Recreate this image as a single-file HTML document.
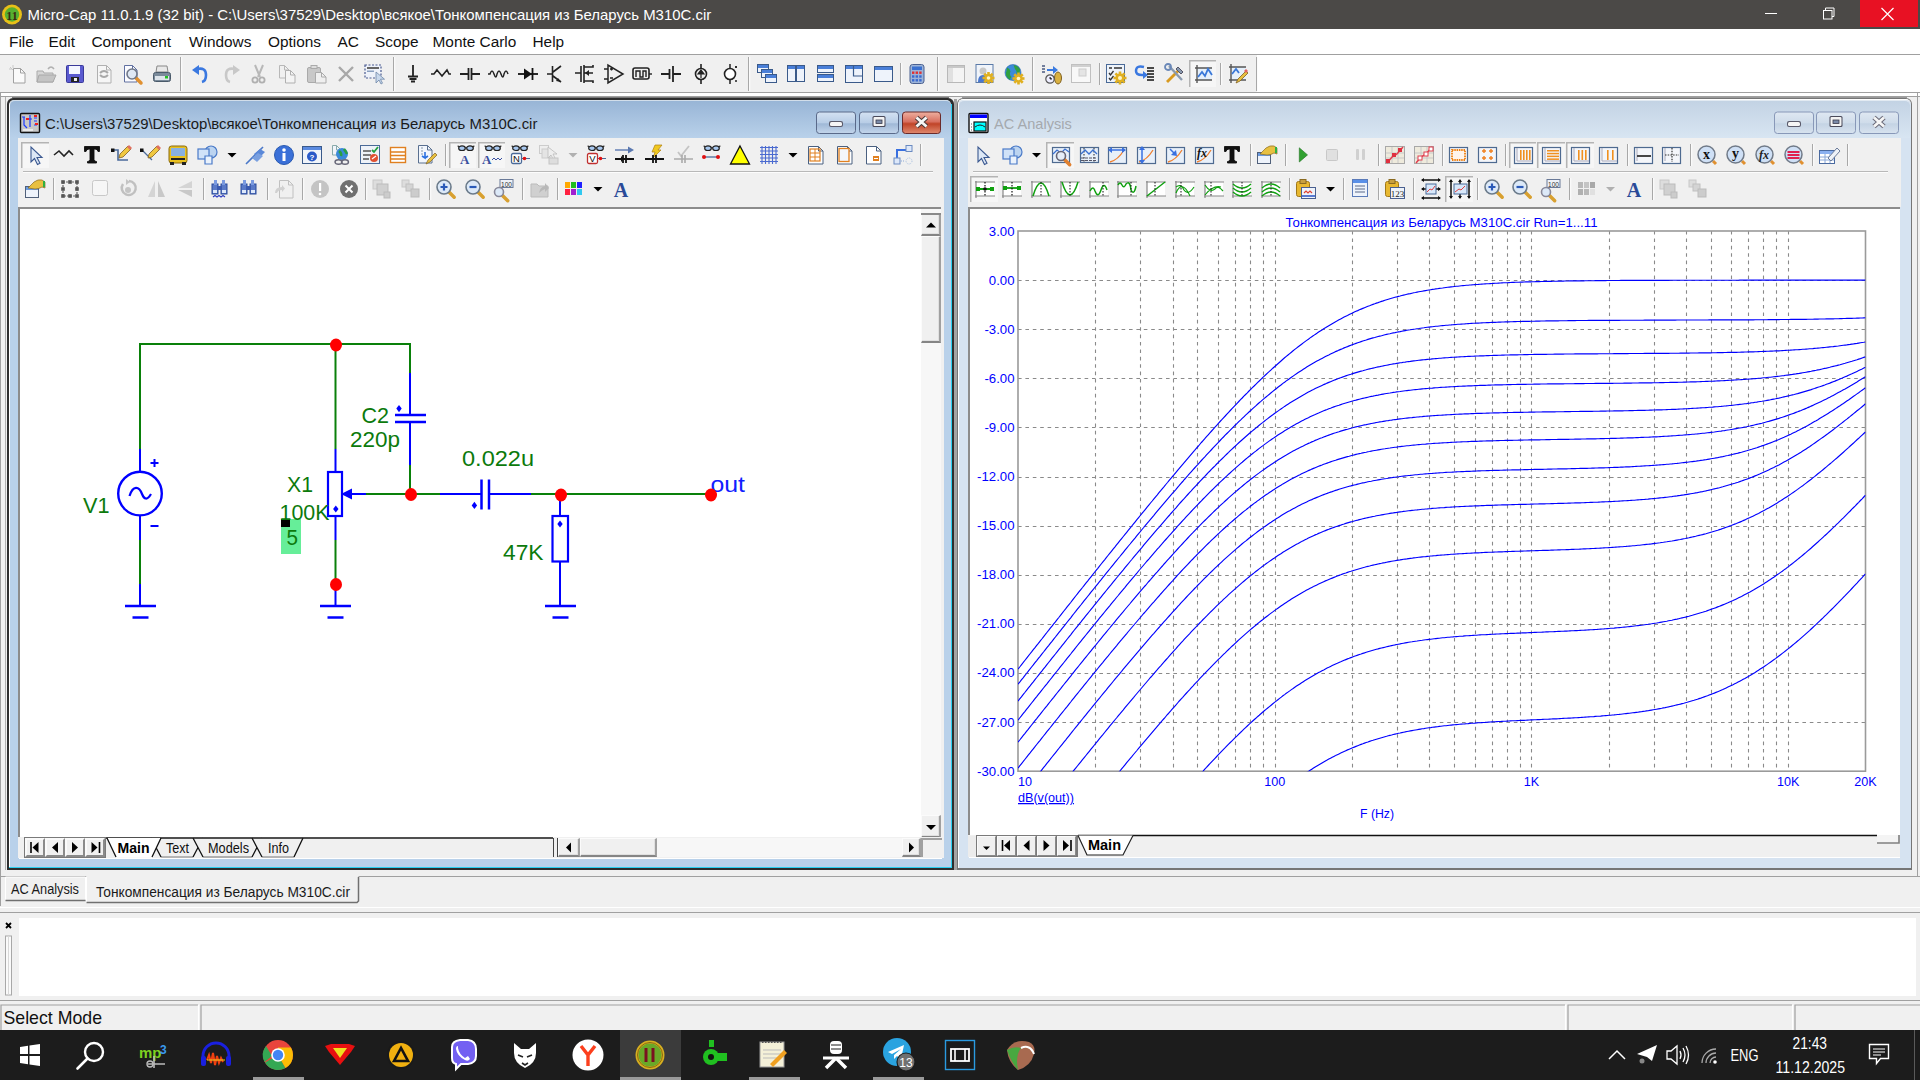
<!DOCTYPE html><html><head><meta charset='utf-8'><style>
*{margin:0;padding:0;box-sizing:border-box}
html,body{width:1920px;height:1080px;overflow:hidden;background:#f0f0f0;font-family:"Liberation Sans",sans-serif}
.a{position:absolute}
.t{position:absolute;white-space:nowrap;line-height:1}
svg{position:absolute;left:0;top:0;overflow:visible}
</style></head><body><div class="a" style="left:0px;top:0px;width:1920px;height:29px;background:#4b4947"></div><div class="t" style="left:27.5px;top:8px;font-size:14.95px;color:#fff;">Micro-Cap 11.0.1.9 (32 bit) - C:\Users\37529\Desktop\всякое\Тонкомпенсация из Беларусь M310C.cir</div><div class="a" style="left:1860px;top:0px;width:58px;height:27px;background:#e81123"></div><div class="a" style="left:0px;top:29px;width:1920px;height:25px;background:#fff"></div><div class="a" style="left:0px;top:54px;width:1920px;height:1px;background:#a0a0a0"></div><div class="t" style="left:9px;top:34.2px;font-size:15.4px;color:#111;">File</div><div class="t" style="left:48.5px;top:34.2px;font-size:15.4px;color:#111;">Edit</div><div class="t" style="left:91.5px;top:34.2px;font-size:15.4px;color:#111;">Component</div><div class="t" style="left:189px;top:34.2px;font-size:15.4px;color:#111;">Windows</div><div class="t" style="left:268px;top:34.2px;font-size:15.4px;color:#111;">Options</div><div class="t" style="left:337.5px;top:34.2px;font-size:15.4px;color:#111;">AC</div><div class="t" style="left:375px;top:34.2px;font-size:15.4px;color:#111;">Scope</div><div class="t" style="left:432.5px;top:34.2px;font-size:15.4px;color:#111;">Monte Carlo</div><div class="t" style="left:532.5px;top:34.2px;font-size:15.4px;color:#111;">Help</div><div class="a" style="left:0px;top:55px;width:1257px;height:37px;background:#f0f0f0"></div><div class="a" style="left:1257px;top:55px;width:663px;height:37px;background:#fff"></div><div class="a" style="left:0px;top:92px;width:1920px;height:1px;background:#a0a0a0"></div><div class="a" style="left:0px;top:93px;width:1920px;height:3px;background:#fff"></div><div class="a" style="left:0px;top:96px;width:1920px;height:1px;background:#a0a0a0"></div><div class="a" style="left:954px;top:99px;width:3px;height:771px;background:#a4a4a4"></div><div class="a" style="left:7px;top:98px;width:947px;height:772px;background:#2e2e2e;border-radius:6px 6px 0 0"></div><div class="a" style="left:9px;top:100px;width:942px;height:767px;background:#b9d1ea;border-radius:5px 5px 0 0;border-left:1px solid #fff"></div><div class="a" style="left:951px;top:104px;width:1px;height:764px;background:#2ad0f0"></div><div class="a" style="left:9px;top:867px;width:943px;height:1px;background:#2ad0f0"></div><div class="a" style="left:10px;top:100px;width:941px;height:38px;background:linear-gradient(#98b5d6,#b9d1ea);border-radius:5px 5px 0 0;border-top:1.5px solid #d2deea"></div><div class="a" style="left:12px;top:97px;width:937px;height:1px;background:#7a7a7a"></div><div class="t" style="left:45px;top:116.5px;font-size:14.9px;color:#1b1b1b;">C:\Users\37529\Desktop\всякое\Тонкомпенсация из Беларусь M310C.cir</div><div class="a" style="left:18px;top:138px;width:924px;height:69px;background:#f0f0f0"></div><div class="a" style="left:23px;top:171px;width:910px;height:1px;background:#b8b8b8"></div><div class="a" style="left:23px;top:172px;width:910px;height:1px;background:#fcfcfc"></div><div class="a" style="left:18px;top:207px;width:924px;height:631px;background:#fff;border-top:2px solid #8c8c8c;border-left:2px solid #8c8c8c"></div><div class="a" style="left:921px;top:209px;width:21px;height:629px;background:#f7f7f7"></div><div class="a" style="left:941px;top:138px;width:3px;height:720px;background:#f0f0f0"></div><div class="a" style="left:921px;top:213px;width:20px;height:23px;background:#f0f0f0;border-top:1px solid #fbfbfb;border-left:1px solid #fbfbfb;border-right:2px solid #a0a0a0;border-bottom:2px solid #858585;box-shadow:inset -1px -1px 0 #e0e0e0"></div><div class="a" style="left:921px;top:213px;width:20px;height:2px;background:#8a8a8a"></div><div class="a" style="left:921px;top:236px;width:20px;height:107px;background:#f0f0f0;border-top:1px solid #fbfbfb;border-left:1px solid #fbfbfb;border-right:2px solid #a0a0a0;border-bottom:2px solid #858585;box-shadow:inset -1px -1px 0 #e0e0e0"></div><div class="a" style="left:921px;top:815px;width:20px;height:23px;background:#f0f0f0;border-top:1px solid #fbfbfb;border-left:1px solid #fbfbfb;border-right:2px solid #a0a0a0;border-bottom:2px solid #858585;box-shadow:inset -1px -1px 0 #e0e0e0"></div><div class="a" style="left:18px;top:837px;width:924px;height:21px;background:#f0f0f0"></div><div class="a" style="left:19px;top:858px;width:923px;height:1px;background:#fff"></div><div class="a" style="left:24px;top:837px;width:82px;height:21px;background:#7a7a7a"></div><div class="a" style="left:25px;top:838px;width:20px;height:19px;background:#f0f0f0;border:2px solid #8a8a8a;border-top-color:#fafafa;border-left-color:#fafafa"></div><div class="a" style="left:45px;top:838px;width:20px;height:19px;background:#f0f0f0;border:2px solid #8a8a8a;border-top-color:#fafafa;border-left-color:#fafafa"></div><div class="a" style="left:65px;top:838px;width:20px;height:19px;background:#f0f0f0;border:2px solid #8a8a8a;border-top-color:#fafafa;border-left-color:#fafafa"></div><div class="a" style="left:85px;top:838px;width:20px;height:19px;background:#f0f0f0;border:2px solid #8a8a8a;border-top-color:#fafafa;border-left-color:#fafafa"></div><div class="a" style="left:553px;top:838px;width:5px;height:19px;background:#f0f0f0;border-left:1px solid #444;border-right:1px solid #444"></div><div class="a" style="left:558px;top:838px;width:22px;height:19px;background:#f0f0f0;border-top:1px solid #fbfbfb;border-left:1px solid #fbfbfb;border-right:2px solid #a0a0a0;border-bottom:2px solid #858585;box-shadow:inset -1px -1px 0 #e0e0e0"></div><div class="a" style="left:580px;top:838px;width:77px;height:19px;background:#f0f0f0;border-top:1px solid #fbfbfb;border-left:1px solid #fbfbfb;border-right:2px solid #a0a0a0;border-bottom:2px solid #858585;box-shadow:inset -1px -1px 0 #e0e0e0"></div><div class="a" style="left:657px;top:838px;width:245px;height:19px;background:#f7f7f7"></div><div class="a" style="left:902px;top:838px;width:19px;height:19px;background:#f0f0f0;border-top:1px solid #fbfbfb;border-left:1px solid #fbfbfb;border-right:2px solid #a0a0a0;border-bottom:2px solid #858585;box-shadow:inset -1px -1px 0 #e0e0e0"></div><div class="a" style="left:921px;top:838px;width:21px;height:19px;background:#f0f0f0;border-top:2px solid #a0a0a0;border-left:2px solid #a0a0a0"></div><div class="a" style="left:957px;top:98px;width:955px;height:772px;background:#767676;border-radius:6px 6px 0 0"></div><div class="a" style="left:958px;top:99px;width:953px;height:769px;background:#d6e3f1;border-radius:5px 5px 0 0;border-top:1px solid #fff;border-left:1px solid #fff"></div><div class="a" style="left:959px;top:100px;width:951px;height:38px;background:linear-gradient(#c3d3e4,#d8e5f2);border-radius:5px 5px 0 0;border-top:1.5px solid #e2eaf2"></div><div class="a" style="left:962px;top:97px;width:945px;height:1px;background:#9a9a9a"></div><div class="t" style="left:994px;top:116.5px;font-size:14.6px;color:#a5a9ae;">AC Analysis</div><div class="a" style="left:968px;top:138px;width:933px;height:69px;background:#f0f0f0"></div><div class="a" style="left:973px;top:171px;width:915px;height:1px;background:#b8b8b8"></div><div class="a" style="left:973px;top:172px;width:915px;height:1px;background:#fcfcfc"></div><div class="a" style="left:968px;top:207px;width:932px;height:629px;background:#fff;border-top:2px solid #8c8c8c;border-left:2px solid #8c8c8c"></div><div class="a" style="left:968px;top:835px;width:932px;height:22px;background:#f0f0f0"></div><div class="a" style="left:976px;top:835px;width:102px;height:22px;background:#7a7a7a"></div><div class="a" style="left:977px;top:836px;width:19px;height:20px;background:#f0f0f0;border:1.5px solid #8a8a8a;border-top-color:#fafafa;border-left-color:#fafafa"></div><div class="a" style="left:997px;top:836px;width:19px;height:20px;background:#f0f0f0;border:1.5px solid #8a8a8a;border-top-color:#fafafa;border-left-color:#fafafa"></div><div class="a" style="left:1017px;top:836px;width:19px;height:20px;background:#f0f0f0;border:1.5px solid #8a8a8a;border-top-color:#fafafa;border-left-color:#fafafa"></div><div class="a" style="left:1037px;top:836px;width:19px;height:20px;background:#f0f0f0;border:1.5px solid #8a8a8a;border-top-color:#fafafa;border-left-color:#fafafa"></div><div class="a" style="left:1057px;top:836px;width:19px;height:20px;background:#f0f0f0;border:1.5px solid #8a8a8a;border-top-color:#fafafa;border-left-color:#fafafa"></div><div class="a" style="left:969px;top:857px;width:931px;height:1px;background:#fff"></div><div class="a" style="left:0px;top:876px;width:1920px;height:1px;background:#a0a0a0"></div><div class="a" style="left:0px;top:912px;width:1920px;height:1px;background:#a0a0a0"></div><div class="a" style="left:0px;top:913px;width:1920px;height:5px;background:#f0f0f0"></div><div class="a" style="left:19px;top:918px;width:1897px;height:78px;background:#fff"></div><div class="a" style="left:0px;top:1000px;width:1920px;height:1px;background:#a0a0a0"></div><div class="a" style="left:0px;top:1030px;width:1920px;height:50px;background:#1c1c1c"></div><svg width="1920" height="1080" style="font-family:'Liberation Sans',sans-serif"><line x1="139" y1="344" x2="411" y2="344" stroke="#0a800a" stroke-width="2"/><line x1="140" y1="343" x2="140" y2="449" stroke="#0a800a" stroke-width="2"/><line x1="140" y1="449" x2="140" y2="472" stroke="#0000ff" stroke-width="2"/><circle cx="140" cy="493.6" r="21.8" fill="none" stroke="#0000ff" stroke-width="2.4"/><path d="M129.5 496 C133 485 139 486 142 494 C144 499 147 501 151 494" fill="none" stroke="#0000ff" stroke-width="2.2"/><line x1="140" y1="515" x2="140" y2="540" stroke="#0000ff" stroke-width="2"/><line x1="140" y1="540" x2="140" y2="584" stroke="#0a800a" stroke-width="2"/><line x1="140" y1="584" x2="140" y2="606" stroke="#0000ff" stroke-width="2"/><line x1="125" y1="606" x2="156" y2="606" stroke="#0000ff" stroke-width="2.5"/><line x1="132.5" y1="617.5" x2="148.5" y2="617.5" stroke="#0000ff" stroke-width="2.5"/><line x1="150.5" y1="463" x2="158.5" y2="463" stroke="#0000ff" stroke-width="2"/><line x1="154.5" y1="459" x2="154.5" y2="467" stroke="#0000ff" stroke-width="2"/><line x1="150.5" y1="526" x2="158.5" y2="526" stroke="#0000ff" stroke-width="2"/><text x="83" y="512.5" font-size="22" fill="#0c7a0c" textLength="26.5" lengthAdjust="spacingAndGlyphs">V1</text><line x1="335.5" y1="344" x2="335.5" y2="449" stroke="#0a800a" stroke-width="2"/><line x1="335.5" y1="449" x2="335.5" y2="471" stroke="#0000ff" stroke-width="2"/><rect x="328" y="472" width="14" height="44" fill="none" stroke="#0000ff" stroke-width="2.2"/><line x1="335.5" y1="517" x2="335.5" y2="540" stroke="#0000ff" stroke-width="2"/><line x1="335.5" y1="540" x2="335.5" y2="584" stroke="#0a800a" stroke-width="2"/><line x1="335.5" y1="584" x2="335.5" y2="606" stroke="#0000ff" stroke-width="2"/><line x1="320" y1="606" x2="351" y2="606" stroke="#0000ff" stroke-width="2.5"/><line x1="327.5" y1="617.5" x2="343.5" y2="617.5" stroke="#0000ff" stroke-width="2.5"/><path d="M341 494 L352 488.5 L352 499.5 Z" fill="#0000ff"/><line x1="350" y1="494" x2="366" y2="494" stroke="#0000ff" stroke-width="2"/><line x1="366" y1="494" x2="411" y2="494" stroke="#0a800a" stroke-width="2"/><path d="M335.8 505.5 L338.5 509 L335.8 512.5 L333.1 509 Z" fill="#0000ff"/><line x1="410" y1="344" x2="410" y2="373" stroke="#0a800a" stroke-width="2"/><line x1="410" y1="373" x2="410" y2="415" stroke="#0000ff" stroke-width="2"/><line x1="395" y1="415" x2="426" y2="415" stroke="#0000ff" stroke-width="2.5"/><line x1="395" y1="422" x2="426" y2="422" stroke="#0000ff" stroke-width="2.5"/><line x1="410" y1="422" x2="410" y2="465" stroke="#0000ff" stroke-width="2"/><line x1="410" y1="465" x2="410" y2="494" stroke="#0a800a" stroke-width="2"/><path d="M399 405 L401.7 408.6 L399 412.2 L396.3 408.6 Z" fill="#0000ff"/><text x="361.5" y="422.5" font-size="21.5" fill="#0c7a0c" textLength="27.5" lengthAdjust="spacingAndGlyphs">C2</text><text x="350" y="447" font-size="21.5" fill="#0c7a0c" textLength="50" lengthAdjust="spacingAndGlyphs">220p</text><text x="287" y="492" font-size="21.5" fill="#0c7a0c" textLength="26" lengthAdjust="spacingAndGlyphs">X1</text><rect x="281" y="519" width="20" height="35" fill="#66ee99"/><rect x="281" y="519" width="9" height="8" fill="#000"/><text x="279.5" y="519.5" font-size="21.5" fill="#0c7a0c" textLength="50" lengthAdjust="spacingAndGlyphs">100K</text><text x="286.5" y="544.5" font-size="21.5" fill="#0c7a0c" textLength="11.5" lengthAdjust="spacingAndGlyphs">5</text><line x1="411" y1="494" x2="440" y2="494" stroke="#0a800a" stroke-width="2"/><line x1="440" y1="494" x2="481" y2="494" stroke="#0000ff" stroke-width="2"/><line x1="481.5" y1="479.5" x2="481.5" y2="509.5" stroke="#0000ff" stroke-width="2.5"/><line x1="489" y1="479.5" x2="489" y2="509.5" stroke="#0000ff" stroke-width="2.5"/><line x1="489" y1="494" x2="531" y2="494" stroke="#0000ff" stroke-width="2"/><line x1="531" y1="494" x2="711" y2="494" stroke="#0a800a" stroke-width="2"/><path d="M474.4 501.8 L477.1 505.4 L474.4 509 L471.7 505.4 Z" fill="#0000ff"/><text x="462" y="466" font-size="21.5" fill="#0c7a0c" textLength="72" lengthAdjust="spacingAndGlyphs">0.022u</text><line x1="560" y1="495" x2="560" y2="516" stroke="#0000ff" stroke-width="2"/><rect x="552.5" y="516" width="15.5" height="45.5" fill="none" stroke="#0000ff" stroke-width="2.2"/><line x1="560" y1="562" x2="560" y2="606" stroke="#0000ff" stroke-width="2"/><line x1="545" y1="606" x2="576" y2="606" stroke="#0000ff" stroke-width="2.5"/><line x1="552.5" y1="617.5" x2="568.5" y2="617.5" stroke="#0000ff" stroke-width="2.5"/><path d="M560 520.4 L562.7 524 L560 527.6 L557.3 524 Z" fill="#0000ff"/><text x="503" y="560" font-size="21.5" fill="#0c7a0c" textLength="40.5" lengthAdjust="spacingAndGlyphs">47K</text><text x="710.5" y="492" font-size="21.5" fill="#1020ff" textLength="34.5" lengthAdjust="spacingAndGlyphs">out</text><ellipse cx="336" cy="345" rx="6" ry="6.4" fill="#ff0000"/><ellipse cx="411" cy="494.5" rx="6" ry="6.4" fill="#ff0000"/><ellipse cx="561" cy="495" rx="6" ry="6.4" fill="#ff0000"/><ellipse cx="711" cy="495" rx="6" ry="6.4" fill="#ff0000"/><ellipse cx="336" cy="584.5" rx="6" ry="6.4" fill="#ff0000"/><defs><clipPath id="pc"><rect x="1018.0" y="231.0" width="847.5" height="540.2"/></clipPath></defs><path d="M1018.0 280.5H1865.5M1018.0 329.5H1865.5M1018.0 378.5H1865.5M1018.0 427.5H1865.5M1018.0 477.5H1865.5M1018.0 526.5H1865.5M1018.0 575.5H1865.5M1018.0 624.5H1865.5M1018.0 673.5H1865.5M1018.0 722.5H1865.5M1095.5 231.0V771.2M1140.5 231.0V771.2M1173.5 231.0V771.2M1197.5 231.0V771.2M1218.5 231.0V771.2M1235.5 231.0V771.2M1250.5 231.0V771.2M1263.5 231.0V771.2M1275.5 231.0V771.2M1352.5 231.0V771.2M1397.5 231.0V771.2M1429.5 231.0V771.2M1454.5 231.0V771.2M1475.5 231.0V771.2M1492.5 231.0V771.2M1507.5 231.0V771.2M1520.5 231.0V771.2M1531.5 231.0V771.2M1609.5 231.0V771.2M1654.5 231.0V771.2M1686.5 231.0V771.2M1711.5 231.0V771.2M1731.5 231.0V771.2M1748.5 231.0V771.2M1763.5 231.0V771.2M1776.5 231.0V771.2M1788.5 231.0V771.2" stroke="#8a8a8a" stroke-width="1.1" stroke-dasharray="3.6 3.8" fill="none"/><rect x="1018.0" y="231.0" width="847.5" height="540.2" fill="none" stroke="#9a9a9a" stroke-width="1.6"/><g clip-path="url(#pc)" fill="none" stroke="#0000ff" stroke-width="1.15"><path d="M1018.0 669.1 L1019.7 667.0 L1021.4 664.8 L1023.1 662.7 L1024.8 660.5 L1026.5 658.3 L1028.2 656.2 L1029.9 654.0 L1031.6 651.9 L1033.3 649.7 L1035.0 647.6 L1036.7 645.4 L1038.4 643.3 L1040.1 641.1 L1041.8 639.0 L1043.5 636.8 L1045.2 634.7 L1046.9 632.5 L1048.6 630.4 L1050.3 628.2 L1052.0 626.1 L1053.7 623.9 L1055.4 621.8 L1057.1 619.6 L1058.8 617.5 L1060.5 615.3 L1062.2 613.2 L1063.9 611.0 L1065.6 608.9 L1067.3 606.7 L1069.0 604.6 L1070.7 602.5 L1072.3 600.3 L1074.0 598.2 L1075.7 596.0 L1077.4 593.9 L1079.1 591.7 L1080.8 589.6 L1082.5 587.5 L1084.2 585.3 L1085.9 583.2 L1087.6 581.1 L1089.3 578.9 L1091.0 576.8 L1092.7 574.7 L1094.4 572.5 L1096.1 570.4 L1097.8 568.3 L1099.5 566.1 L1101.2 564.0 L1102.9 561.9 L1104.6 559.8 L1106.3 557.6 L1108.0 555.5 L1109.7 553.4 L1111.4 551.3 L1113.1 549.2 L1114.8 547.1 L1116.5 544.9 L1118.2 542.8 L1119.9 540.7 L1121.6 538.6 L1123.3 536.5 L1125.0 534.4 L1126.7 532.3 L1128.4 530.2 L1130.1 528.1 L1131.8 526.0 L1133.5 523.9 L1135.2 521.8 L1136.9 519.7 L1138.6 517.6 L1140.3 515.5 L1142.0 513.4 L1143.7 511.4 L1145.4 509.3 L1147.1 507.2 L1148.8 505.1 L1150.5 503.0 L1152.2 501.0 L1153.9 498.9 L1155.6 496.8 L1157.3 494.8 L1159.0 492.7 L1160.7 490.7 L1162.4 488.6 L1164.1 486.6 L1165.8 484.5 L1167.5 482.5 L1169.2 480.4 L1170.9 478.4 L1172.6 476.4 L1174.3 474.4 L1176.0 472.3 L1177.6 470.3 L1179.3 468.3 L1181.0 466.3 L1182.7 464.3 L1184.4 462.3 L1186.1 460.3 L1187.8 458.3 L1189.5 456.3 L1191.2 454.3 L1192.9 452.3 L1194.6 450.4 L1196.3 448.4 L1198.0 446.5 L1199.7 444.5 L1201.4 442.5 L1203.1 440.6 L1204.8 438.7 L1206.5 436.7 L1208.2 434.8 L1209.9 432.9 L1211.6 431.0 L1213.3 429.1 L1215.0 427.2 L1216.7 425.3 L1218.4 423.4 L1220.1 421.5 L1221.8 419.7 L1223.5 417.8 L1225.2 416.0 L1226.9 414.1 L1228.6 412.3 L1230.3 410.5 L1232.0 408.7 L1233.7 406.9 L1235.4 405.1 L1237.1 403.3 L1238.8 401.5 L1240.5 399.7 L1242.2 398.0 L1243.9 396.2 L1245.6 394.5 L1247.3 392.8 L1249.0 391.0 L1250.7 389.3 L1252.4 387.6 L1254.1 386.0 L1255.8 384.3 L1257.5 382.6 L1259.2 381.0 L1260.9 379.3 L1262.6 377.7 L1264.3 376.1 L1266.0 374.5 L1267.7 372.9 L1269.4 371.4 L1271.1 369.8 L1272.8 368.2 L1274.5 366.7 L1276.2 365.2 L1277.9 363.7 L1279.6 362.2 L1281.3 360.7 L1282.9 359.3 L1284.6 357.8 L1286.3 356.4 L1288.0 355.0 L1289.7 353.6 L1291.4 352.2 L1293.1 350.8 L1294.8 349.4 L1296.5 348.1 L1298.2 346.8 L1299.9 345.5 L1301.6 344.2 L1303.3 342.9 L1305.0 341.6 L1306.7 340.4 L1308.4 339.2 L1310.1 337.9 L1311.8 336.7 L1313.5 335.6 L1315.2 334.4 L1316.9 333.3 L1318.6 332.1 L1320.3 331.0 L1322.0 329.9 L1323.7 328.8 L1325.4 327.8 L1327.1 326.7 L1328.8 325.7 L1330.5 324.7 L1332.2 323.7 L1333.9 322.7 L1335.6 321.7 L1337.3 320.8 L1339.0 319.8 L1340.7 318.9 L1342.4 318.0 L1344.1 317.1 L1345.8 316.2 L1347.5 315.4 L1349.2 314.5 L1350.9 313.7 L1352.6 312.9 L1354.3 312.1 L1356.0 311.3 L1357.7 310.6 L1359.4 309.8 L1361.1 309.1 L1362.8 308.4 L1364.5 307.7 L1366.2 307.0 L1367.9 306.3 L1369.6 305.7 L1371.3 305.0 L1373.0 304.4 L1374.7 303.8 L1376.4 303.1 L1378.1 302.6 L1379.8 302.0 L1381.5 301.4 L1383.2 300.9 L1384.9 300.3 L1386.6 299.8 L1388.3 299.3 L1389.9 298.8 L1391.6 298.3 L1393.3 297.8 L1395.0 297.3 L1396.7 296.9 L1398.4 296.4 L1400.1 296.0 L1401.8 295.5 L1403.5 295.1 L1405.2 294.7 L1406.9 294.3 L1408.6 293.9 L1410.3 293.6 L1412.0 293.2 L1413.7 292.8 L1415.4 292.5 L1417.1 292.1 L1418.8 291.8 L1420.5 291.5 L1422.2 291.2 L1423.9 290.9 L1425.6 290.6 L1427.3 290.3 L1429.0 290.0 L1430.7 289.7 L1432.4 289.4 L1434.1 289.2 L1435.8 288.9 L1437.5 288.7 L1439.2 288.4 L1440.9 288.2 L1442.6 288.0 L1444.3 287.7 L1446.0 287.5 L1447.7 287.3 L1449.4 287.1 L1451.1 286.9 L1452.8 286.7 L1454.5 286.5 L1456.2 286.3 L1457.9 286.2 L1459.6 286.0 L1461.3 285.8 L1463.0 285.6 L1464.7 285.5 L1466.4 285.3 L1468.1 285.2 L1469.8 285.0 L1471.5 284.9 L1473.2 284.7 L1474.9 284.6 L1476.6 284.5 L1478.3 284.4 L1480.0 284.2 L1481.7 284.1 L1483.4 284.0 L1485.1 283.9 L1486.8 283.8 L1488.5 283.7 L1490.2 283.6 L1491.9 283.5 L1493.6 283.4 L1495.2 283.3 L1496.9 283.2 L1498.6 283.1 L1500.3 283.0 L1502.0 282.9 L1503.7 282.8 L1505.4 282.7 L1507.1 282.7 L1508.8 282.6 L1510.5 282.5 L1512.2 282.4 L1513.9 282.4 L1515.6 282.3 L1517.3 282.2 L1519.0 282.2 L1520.7 282.1 L1522.4 282.1 L1524.1 282.0 L1525.8 281.9 L1527.5 281.9 L1529.2 281.8 L1530.9 281.8 L1532.6 281.7 L1534.3 281.7 L1536.0 281.6 L1537.7 281.6 L1539.4 281.6 L1541.1 281.5 L1542.8 281.5 L1544.5 281.4 L1546.2 281.4 L1547.9 281.4 L1549.6 281.3 L1551.3 281.3 L1553.0 281.2 L1554.7 281.2 L1556.4 281.2 L1558.1 281.1 L1559.8 281.1 L1561.5 281.1 L1563.2 281.1 L1564.9 281.0 L1566.6 281.0 L1568.3 281.0 L1570.0 280.9 L1571.7 280.9 L1573.4 280.9 L1575.1 280.9 L1576.8 280.9 L1578.5 280.8 L1580.2 280.8 L1581.9 280.8 L1583.6 280.8 L1585.3 280.7 L1587.0 280.7 L1588.7 280.7 L1590.4 280.7 L1592.1 280.7 L1593.8 280.7 L1595.5 280.6 L1597.2 280.6 L1598.9 280.6 L1600.6 280.6 L1602.2 280.6 L1603.9 280.6 L1605.6 280.6 L1607.3 280.5 L1609.0 280.5 L1610.7 280.5 L1612.4 280.5 L1614.1 280.5 L1615.8 280.5 L1617.5 280.5 L1619.2 280.5 L1620.9 280.4 L1622.6 280.4 L1624.3 280.4 L1626.0 280.4 L1627.7 280.4 L1629.4 280.4 L1631.1 280.4 L1632.8 280.4 L1634.5 280.4 L1636.2 280.4 L1637.9 280.4 L1639.6 280.4 L1641.3 280.3 L1643.0 280.3 L1644.7 280.3 L1646.4 280.3 L1648.1 280.3 L1649.8 280.3 L1651.5 280.3 L1653.2 280.3 L1654.9 280.3 L1656.6 280.3 L1658.3 280.3 L1660.0 280.3 L1661.7 280.3 L1663.4 280.3 L1665.1 280.3 L1666.8 280.3 L1668.5 280.3 L1670.2 280.2 L1671.9 280.2 L1673.6 280.2 L1675.3 280.2 L1677.0 280.2 L1678.7 280.2 L1680.4 280.2 L1682.1 280.2 L1683.8 280.2 L1685.5 280.2 L1687.2 280.2 L1688.9 280.2 L1690.6 280.2 L1692.3 280.2 L1694.0 280.2 L1695.7 280.2 L1697.4 280.2 L1699.1 280.2 L1700.8 280.2 L1702.5 280.2 L1704.2 280.2 L1705.9 280.2 L1707.5 280.2 L1709.2 280.2 L1710.9 280.2 L1712.6 280.2 L1714.3 280.2 L1716.0 280.2 L1717.7 280.2 L1719.4 280.2 L1721.1 280.2 L1722.8 280.2 L1724.5 280.2 L1726.2 280.2 L1727.9 280.2 L1729.6 280.2 L1731.3 280.2 L1733.0 280.2 L1734.7 280.2 L1736.4 280.2 L1738.1 280.2 L1739.8 280.1 L1741.5 280.1 L1743.2 280.1 L1744.9 280.1 L1746.6 280.1 L1748.3 280.1 L1750.0 280.1 L1751.7 280.1 L1753.4 280.1 L1755.1 280.1 L1756.8 280.1 L1758.5 280.1 L1760.2 280.1 L1761.9 280.1 L1763.6 280.1 L1765.3 280.1 L1767.0 280.1 L1768.7 280.1 L1770.4 280.1 L1772.1 280.1 L1773.8 280.1 L1775.5 280.1 L1777.2 280.1 L1778.9 280.1 L1780.6 280.1 L1782.3 280.1 L1784.0 280.1 L1785.7 280.1 L1787.4 280.1 L1789.1 280.1 L1790.8 280.1 L1792.5 280.1 L1794.2 280.1 L1795.9 280.1 L1797.6 280.1 L1799.3 280.1 L1801.0 280.1 L1802.7 280.1 L1804.4 280.1 L1806.1 280.1 L1807.8 280.1 L1809.5 280.1 L1811.2 280.1 L1812.8 280.1 L1814.5 280.1 L1816.2 280.1 L1817.9 280.1 L1819.6 280.1 L1821.3 280.1 L1823.0 280.1 L1824.7 280.1 L1826.4 280.1 L1828.1 280.1 L1829.8 280.1 L1831.5 280.1 L1833.2 280.1 L1834.9 280.1 L1836.6 280.1 L1838.3 280.1 L1840.0 280.1 L1841.7 280.1 L1843.4 280.1 L1845.1 280.1 L1846.8 280.1 L1848.5 280.1 L1850.2 280.1 L1851.9 280.1 L1853.6 280.1 L1855.3 280.1 L1857.0 280.1 L1858.7 280.1 L1860.4 280.1 L1862.1 280.1 L1863.8 280.1 L1865.5 280.1"/><path d="M1018.0 684.2 L1019.7 682.1 L1021.4 679.9 L1023.1 677.8 L1024.8 675.6 L1026.5 673.5 L1028.2 671.3 L1029.9 669.2 L1031.6 667.0 L1033.3 664.9 L1035.0 662.7 L1036.7 660.6 L1038.4 658.4 L1040.1 656.3 L1041.8 654.1 L1043.5 652.0 L1045.2 649.8 L1046.9 647.7 L1048.6 645.6 L1050.3 643.4 L1052.0 641.3 L1053.7 639.1 L1055.4 637.0 L1057.1 634.8 L1058.8 632.7 L1060.5 630.6 L1062.2 628.4 L1063.9 626.3 L1065.6 624.2 L1067.3 622.0 L1069.0 619.9 L1070.7 617.8 L1072.3 615.6 L1074.0 613.5 L1075.7 611.4 L1077.4 609.2 L1079.1 607.1 L1080.8 605.0 L1082.5 602.8 L1084.2 600.7 L1085.9 598.6 L1087.6 596.5 L1089.3 594.4 L1091.0 592.2 L1092.7 590.1 L1094.4 588.0 L1096.1 585.9 L1097.8 583.8 L1099.5 581.7 L1101.2 579.6 L1102.9 577.4 L1104.6 575.3 L1106.3 573.2 L1108.0 571.1 L1109.7 569.0 L1111.4 566.9 L1113.1 564.8 L1114.8 562.7 L1116.5 560.6 L1118.2 558.5 L1119.9 556.5 L1121.6 554.4 L1123.3 552.3 L1125.0 550.2 L1126.7 548.1 L1128.4 546.0 L1130.1 544.0 L1131.8 541.9 L1133.5 539.8 L1135.2 537.8 L1136.9 535.7 L1138.6 533.6 L1140.3 531.6 L1142.0 529.5 L1143.7 527.5 L1145.4 525.4 L1147.1 523.4 L1148.8 521.4 L1150.5 519.3 L1152.2 517.3 L1153.9 515.3 L1155.6 513.2 L1157.3 511.2 L1159.0 509.2 L1160.7 507.2 L1162.4 505.2 L1164.1 503.2 L1165.8 501.2 L1167.5 499.2 L1169.2 497.2 L1170.9 495.2 L1172.6 493.2 L1174.3 491.3 L1176.0 489.3 L1177.6 487.3 L1179.3 485.4 L1181.0 483.4 L1182.7 481.5 L1184.4 479.5 L1186.1 477.6 L1187.8 475.7 L1189.5 473.7 L1191.2 471.8 L1192.9 469.9 L1194.6 468.0 L1196.3 466.1 L1198.0 464.3 L1199.7 462.4 L1201.4 460.5 L1203.1 458.6 L1204.8 456.8 L1206.5 454.9 L1208.2 453.1 L1209.9 451.3 L1211.6 449.5 L1213.3 447.7 L1215.0 445.9 L1216.7 444.1 L1218.4 442.3 L1220.1 440.5 L1221.8 438.7 L1223.5 437.0 L1225.2 435.2 L1226.9 433.5 L1228.6 431.8 L1230.3 430.1 L1232.0 428.4 L1233.7 426.7 L1235.4 425.0 L1237.1 423.4 L1238.8 421.7 L1240.5 420.1 L1242.2 418.4 L1243.9 416.8 L1245.6 415.2 L1247.3 413.6 L1249.0 412.0 L1250.7 410.5 L1252.4 408.9 L1254.1 407.4 L1255.8 405.9 L1257.5 404.3 L1259.2 402.8 L1260.9 401.4 L1262.6 399.9 L1264.3 398.4 L1266.0 397.0 L1267.7 395.6 L1269.4 394.2 L1271.1 392.8 L1272.8 391.4 L1274.5 390.0 L1276.2 388.7 L1277.9 387.3 L1279.6 386.0 L1281.3 384.7 L1282.9 383.4 L1284.6 382.2 L1286.3 380.9 L1288.0 379.7 L1289.7 378.5 L1291.4 377.3 L1293.1 376.1 L1294.8 374.9 L1296.5 373.7 L1298.2 372.6 L1299.9 371.5 L1301.6 370.4 L1303.3 369.3 L1305.0 368.2 L1306.7 367.1 L1308.4 366.1 L1310.1 365.1 L1311.8 364.1 L1313.5 363.1 L1315.2 362.1 L1316.9 361.1 L1318.6 360.2 L1320.3 359.3 L1322.0 358.4 L1323.7 357.5 L1325.4 356.6 L1327.1 355.7 L1328.8 354.9 L1330.5 354.0 L1332.2 353.2 L1333.9 352.4 L1335.6 351.6 L1337.3 350.9 L1339.0 350.1 L1340.7 349.4 L1342.4 348.7 L1344.1 347.9 L1345.8 347.2 L1347.5 346.6 L1349.2 345.9 L1350.9 345.2 L1352.6 344.6 L1354.3 344.0 L1356.0 343.4 L1357.7 342.8 L1359.4 342.2 L1361.1 341.6 L1362.8 341.0 L1364.5 340.5 L1366.2 340.0 L1367.9 339.4 L1369.6 338.9 L1371.3 338.4 L1373.0 337.9 L1374.7 337.5 L1376.4 337.0 L1378.1 336.5 L1379.8 336.1 L1381.5 335.7 L1383.2 335.2 L1384.9 334.8 L1386.6 334.4 L1388.3 334.0 L1389.9 333.7 L1391.6 333.3 L1393.3 332.9 L1395.0 332.6 L1396.7 332.2 L1398.4 331.9 L1400.1 331.6 L1401.8 331.2 L1403.5 330.9 L1405.2 330.6 L1406.9 330.3 L1408.6 330.0 L1410.3 329.8 L1412.0 329.5 L1413.7 329.2 L1415.4 329.0 L1417.1 328.7 L1418.8 328.5 L1420.5 328.2 L1422.2 328.0 L1423.9 327.8 L1425.6 327.5 L1427.3 327.3 L1429.0 327.1 L1430.7 326.9 L1432.4 326.7 L1434.1 326.5 L1435.8 326.3 L1437.5 326.2 L1439.2 326.0 L1440.9 325.8 L1442.6 325.6 L1444.3 325.5 L1446.0 325.3 L1447.7 325.2 L1449.4 325.0 L1451.1 324.9 L1452.8 324.7 L1454.5 324.6 L1456.2 324.5 L1457.9 324.3 L1459.6 324.2 L1461.3 324.1 L1463.0 324.0 L1464.7 323.9 L1466.4 323.7 L1468.1 323.6 L1469.8 323.5 L1471.5 323.4 L1473.2 323.3 L1474.9 323.2 L1476.6 323.1 L1478.3 323.1 L1480.0 323.0 L1481.7 322.9 L1483.4 322.8 L1485.1 322.7 L1486.8 322.6 L1488.5 322.6 L1490.2 322.5 L1491.9 322.4 L1493.6 322.3 L1495.2 322.3 L1496.9 322.2 L1498.6 322.1 L1500.3 322.1 L1502.0 322.0 L1503.7 322.0 L1505.4 321.9 L1507.1 321.8 L1508.8 321.8 L1510.5 321.7 L1512.2 321.7 L1513.9 321.6 L1515.6 321.6 L1517.3 321.5 L1519.0 321.5 L1520.7 321.5 L1522.4 321.4 L1524.1 321.4 L1525.8 321.3 L1527.5 321.3 L1529.2 321.3 L1530.9 321.2 L1532.6 321.2 L1534.3 321.2 L1536.0 321.1 L1537.7 321.1 L1539.4 321.1 L1541.1 321.0 L1542.8 321.0 L1544.5 321.0 L1546.2 320.9 L1547.9 320.9 L1549.6 320.9 L1551.3 320.9 L1553.0 320.8 L1554.7 320.8 L1556.4 320.8 L1558.1 320.8 L1559.8 320.7 L1561.5 320.7 L1563.2 320.7 L1564.9 320.7 L1566.6 320.7 L1568.3 320.6 L1570.0 320.6 L1571.7 320.6 L1573.4 320.6 L1575.1 320.6 L1576.8 320.5 L1578.5 320.5 L1580.2 320.5 L1581.9 320.5 L1583.6 320.5 L1585.3 320.5 L1587.0 320.5 L1588.7 320.4 L1590.4 320.4 L1592.1 320.4 L1593.8 320.4 L1595.5 320.4 L1597.2 320.4 L1598.9 320.4 L1600.6 320.4 L1602.2 320.3 L1603.9 320.3 L1605.6 320.3 L1607.3 320.3 L1609.0 320.3 L1610.7 320.3 L1612.4 320.3 L1614.1 320.3 L1615.8 320.3 L1617.5 320.3 L1619.2 320.3 L1620.9 320.2 L1622.6 320.2 L1624.3 320.2 L1626.0 320.2 L1627.7 320.2 L1629.4 320.2 L1631.1 320.2 L1632.8 320.2 L1634.5 320.2 L1636.2 320.2 L1637.9 320.2 L1639.6 320.2 L1641.3 320.2 L1643.0 320.2 L1644.7 320.1 L1646.4 320.1 L1648.1 320.1 L1649.8 320.1 L1651.5 320.1 L1653.2 320.1 L1654.9 320.1 L1656.6 320.1 L1658.3 320.1 L1660.0 320.1 L1661.7 320.1 L1663.4 320.1 L1665.1 320.1 L1666.8 320.1 L1668.5 320.1 L1670.2 320.1 L1671.9 320.1 L1673.6 320.1 L1675.3 320.1 L1677.0 320.0 L1678.7 320.0 L1680.4 320.0 L1682.1 320.0 L1683.8 320.0 L1685.5 320.0 L1687.2 320.0 L1688.9 320.0 L1690.6 320.0 L1692.3 320.0 L1694.0 320.0 L1695.7 320.0 L1697.4 320.0 L1699.1 320.0 L1700.8 320.0 L1702.5 320.0 L1704.2 320.0 L1705.9 320.0 L1707.5 320.0 L1709.2 319.9 L1710.9 319.9 L1712.6 319.9 L1714.3 319.9 L1716.0 319.9 L1717.7 319.9 L1719.4 319.9 L1721.1 319.9 L1722.8 319.9 L1724.5 319.9 L1726.2 319.9 L1727.9 319.9 L1729.6 319.9 L1731.3 319.9 L1733.0 319.9 L1734.7 319.8 L1736.4 319.8 L1738.1 319.8 L1739.8 319.8 L1741.5 319.8 L1743.2 319.8 L1744.9 319.8 L1746.6 319.8 L1748.3 319.8 L1750.0 319.8 L1751.7 319.8 L1753.4 319.8 L1755.1 319.7 L1756.8 319.7 L1758.5 319.7 L1760.2 319.7 L1761.9 319.7 L1763.6 319.7 L1765.3 319.7 L1767.0 319.7 L1768.7 319.6 L1770.4 319.6 L1772.1 319.6 L1773.8 319.6 L1775.5 319.6 L1777.2 319.6 L1778.9 319.6 L1780.6 319.5 L1782.3 319.5 L1784.0 319.5 L1785.7 319.5 L1787.4 319.5 L1789.1 319.5 L1790.8 319.4 L1792.5 319.4 L1794.2 319.4 L1795.9 319.4 L1797.6 319.4 L1799.3 319.3 L1801.0 319.3 L1802.7 319.3 L1804.4 319.3 L1806.1 319.3 L1807.8 319.2 L1809.5 319.2 L1811.2 319.2 L1812.8 319.2 L1814.5 319.1 L1816.2 319.1 L1817.9 319.1 L1819.6 319.0 L1821.3 319.0 L1823.0 319.0 L1824.7 319.0 L1826.4 318.9 L1828.1 318.9 L1829.8 318.8 L1831.5 318.8 L1833.2 318.8 L1834.9 318.7 L1836.6 318.7 L1838.3 318.7 L1840.0 318.6 L1841.7 318.6 L1843.4 318.5 L1845.1 318.5 L1846.8 318.4 L1848.5 318.4 L1850.2 318.3 L1851.9 318.3 L1853.6 318.2 L1855.3 318.2 L1857.0 318.1 L1858.7 318.1 L1860.4 318.0 L1862.1 318.0 L1863.8 317.9 L1865.5 317.8"/><path d="M1018.0 701.1 L1019.7 698.9 L1021.4 696.8 L1023.1 694.6 L1024.8 692.5 L1026.5 690.3 L1028.2 688.2 L1029.9 686.1 L1031.6 683.9 L1033.3 681.8 L1035.0 679.6 L1036.7 677.5 L1038.4 675.3 L1040.1 673.2 L1041.8 671.1 L1043.5 668.9 L1045.2 666.8 L1046.9 664.6 L1048.6 662.5 L1050.3 660.4 L1052.0 658.2 L1053.7 656.1 L1055.4 654.0 L1057.1 651.8 L1058.8 649.7 L1060.5 647.6 L1062.2 645.4 L1063.9 643.3 L1065.6 641.2 L1067.3 639.0 L1069.0 636.9 L1070.7 634.8 L1072.3 632.7 L1074.0 630.5 L1075.7 628.4 L1077.4 626.3 L1079.1 624.2 L1080.8 622.1 L1082.5 619.9 L1084.2 617.8 L1085.9 615.7 L1087.6 613.6 L1089.3 611.5 L1091.0 609.4 L1092.7 607.3 L1094.4 605.2 L1096.1 603.1 L1097.8 601.0 L1099.5 598.9 L1101.2 596.8 L1102.9 594.7 L1104.6 592.6 L1106.3 590.5 L1108.0 588.4 L1109.7 586.3 L1111.4 584.3 L1113.1 582.2 L1114.8 580.1 L1116.5 578.0 L1118.2 576.0 L1119.9 573.9 L1121.6 571.8 L1123.3 569.8 L1125.0 567.7 L1126.7 565.6 L1128.4 563.6 L1130.1 561.5 L1131.8 559.5 L1133.5 557.4 L1135.2 555.4 L1136.9 553.4 L1138.6 551.3 L1140.3 549.3 L1142.0 547.3 L1143.7 545.2 L1145.4 543.2 L1147.1 541.2 L1148.8 539.2 L1150.5 537.2 L1152.2 535.2 L1153.9 533.2 L1155.6 531.2 L1157.3 529.2 L1159.0 527.3 L1160.7 525.3 L1162.4 523.3 L1164.1 521.3 L1165.8 519.4 L1167.5 517.4 L1169.2 515.5 L1170.9 513.5 L1172.6 511.6 L1174.3 509.7 L1176.0 507.8 L1177.6 505.8 L1179.3 503.9 L1181.0 502.0 L1182.7 500.1 L1184.4 498.3 L1186.1 496.4 L1187.8 494.5 L1189.5 492.6 L1191.2 490.8 L1192.9 488.9 L1194.6 487.1 L1196.3 485.3 L1198.0 483.5 L1199.7 481.6 L1201.4 479.8 L1203.1 478.0 L1204.8 476.3 L1206.5 474.5 L1208.2 472.7 L1209.9 471.0 L1211.6 469.2 L1213.3 467.5 L1215.0 465.8 L1216.7 464.0 L1218.4 462.3 L1220.1 460.6 L1221.8 459.0 L1223.5 457.3 L1225.2 455.6 L1226.9 454.0 L1228.6 452.4 L1230.3 450.7 L1232.0 449.1 L1233.7 447.5 L1235.4 446.0 L1237.1 444.4 L1238.8 442.8 L1240.5 441.3 L1242.2 439.8 L1243.9 438.3 L1245.6 436.8 L1247.3 435.3 L1249.0 433.8 L1250.7 432.3 L1252.4 430.9 L1254.1 429.5 L1255.8 428.1 L1257.5 426.7 L1259.2 425.3 L1260.9 423.9 L1262.6 422.6 L1264.3 421.2 L1266.0 419.9 L1267.7 418.6 L1269.4 417.3 L1271.1 416.0 L1272.8 414.8 L1274.5 413.5 L1276.2 412.3 L1277.9 411.1 L1279.6 409.9 L1281.3 408.7 L1282.9 407.6 L1284.6 406.4 L1286.3 405.3 L1288.0 404.2 L1289.7 403.1 L1291.4 402.0 L1293.1 400.9 L1294.8 399.9 L1296.5 398.9 L1298.2 397.9 L1299.9 396.9 L1301.6 395.9 L1303.3 394.9 L1305.0 394.0 L1306.7 393.0 L1308.4 392.1 L1310.1 391.2 L1311.8 390.3 L1313.5 389.5 L1315.2 388.6 L1316.9 387.8 L1318.6 387.0 L1320.3 386.2 L1322.0 385.4 L1323.7 384.6 L1325.4 383.9 L1327.1 383.1 L1328.8 382.4 L1330.5 381.7 L1332.2 381.0 L1333.9 380.3 L1335.6 379.6 L1337.3 379.0 L1339.0 378.3 L1340.7 377.7 L1342.4 377.1 L1344.1 376.5 L1345.8 375.9 L1347.5 375.3 L1349.2 374.7 L1350.9 374.2 L1352.6 373.6 L1354.3 373.1 L1356.0 372.6 L1357.7 372.1 L1359.4 371.6 L1361.1 371.1 L1362.8 370.7 L1364.5 370.2 L1366.2 369.8 L1367.9 369.3 L1369.6 368.9 L1371.3 368.5 L1373.0 368.1 L1374.7 367.7 L1376.4 367.3 L1378.1 366.9 L1379.8 366.6 L1381.5 366.2 L1383.2 365.9 L1384.9 365.5 L1386.6 365.2 L1388.3 364.9 L1389.9 364.5 L1391.6 364.2 L1393.3 363.9 L1395.0 363.7 L1396.7 363.4 L1398.4 363.1 L1400.1 362.8 L1401.8 362.6 L1403.5 362.3 L1405.2 362.1 L1406.9 361.8 L1408.6 361.6 L1410.3 361.4 L1412.0 361.1 L1413.7 360.9 L1415.4 360.7 L1417.1 360.5 L1418.8 360.3 L1420.5 360.1 L1422.2 359.9 L1423.9 359.8 L1425.6 359.6 L1427.3 359.4 L1429.0 359.2 L1430.7 359.1 L1432.4 358.9 L1434.1 358.8 L1435.8 358.6 L1437.5 358.5 L1439.2 358.3 L1440.9 358.2 L1442.6 358.0 L1444.3 357.9 L1446.0 357.8 L1447.7 357.7 L1449.4 357.5 L1451.1 357.4 L1452.8 357.3 L1454.5 357.2 L1456.2 357.1 L1457.9 357.0 L1459.6 356.9 L1461.3 356.8 L1463.0 356.7 L1464.7 356.6 L1466.4 356.5 L1468.1 356.4 L1469.8 356.4 L1471.5 356.3 L1473.2 356.2 L1474.9 356.1 L1476.6 356.0 L1478.3 356.0 L1480.0 355.9 L1481.7 355.8 L1483.4 355.8 L1485.1 355.7 L1486.8 355.6 L1488.5 355.6 L1490.2 355.5 L1491.9 355.5 L1493.6 355.4 L1495.2 355.3 L1496.9 355.3 L1498.6 355.2 L1500.3 355.2 L1502.0 355.1 L1503.7 355.1 L1505.4 355.0 L1507.1 355.0 L1508.8 355.0 L1510.5 354.9 L1512.2 354.9 L1513.9 354.8 L1515.6 354.8 L1517.3 354.8 L1519.0 354.7 L1520.7 354.7 L1522.4 354.7 L1524.1 354.6 L1525.8 354.6 L1527.5 354.6 L1529.2 354.5 L1530.9 354.5 L1532.6 354.5 L1534.3 354.4 L1536.0 354.4 L1537.7 354.4 L1539.4 354.4 L1541.1 354.3 L1542.8 354.3 L1544.5 354.3 L1546.2 354.3 L1547.9 354.2 L1549.6 354.2 L1551.3 354.2 L1553.0 354.2 L1554.7 354.1 L1556.4 354.1 L1558.1 354.1 L1559.8 354.1 L1561.5 354.1 L1563.2 354.1 L1564.9 354.0 L1566.6 354.0 L1568.3 354.0 L1570.0 354.0 L1571.7 354.0 L1573.4 354.0 L1575.1 353.9 L1576.8 353.9 L1578.5 353.9 L1580.2 353.9 L1581.9 353.9 L1583.6 353.9 L1585.3 353.9 L1587.0 353.8 L1588.7 353.8 L1590.4 353.8 L1592.1 353.8 L1593.8 353.8 L1595.5 353.8 L1597.2 353.8 L1598.9 353.7 L1600.6 353.7 L1602.2 353.7 L1603.9 353.7 L1605.6 353.7 L1607.3 353.7 L1609.0 353.7 L1610.7 353.7 L1612.4 353.7 L1614.1 353.6 L1615.8 353.6 L1617.5 353.6 L1619.2 353.6 L1620.9 353.6 L1622.6 353.6 L1624.3 353.6 L1626.0 353.6 L1627.7 353.6 L1629.4 353.5 L1631.1 353.5 L1632.8 353.5 L1634.5 353.5 L1636.2 353.5 L1637.9 353.5 L1639.6 353.5 L1641.3 353.5 L1643.0 353.5 L1644.7 353.4 L1646.4 353.4 L1648.1 353.4 L1649.8 353.4 L1651.5 353.4 L1653.2 353.4 L1654.9 353.4 L1656.6 353.4 L1658.3 353.3 L1660.0 353.3 L1661.7 353.3 L1663.4 353.3 L1665.1 353.3 L1666.8 353.3 L1668.5 353.3 L1670.2 353.2 L1671.9 353.2 L1673.6 353.2 L1675.3 353.2 L1677.0 353.2 L1678.7 353.2 L1680.4 353.1 L1682.1 353.1 L1683.8 353.1 L1685.5 353.1 L1687.2 353.1 L1688.9 353.1 L1690.6 353.0 L1692.3 353.0 L1694.0 353.0 L1695.7 353.0 L1697.4 353.0 L1699.1 352.9 L1700.8 352.9 L1702.5 352.9 L1704.2 352.9 L1705.9 352.8 L1707.5 352.8 L1709.2 352.8 L1710.9 352.8 L1712.6 352.7 L1714.3 352.7 L1716.0 352.7 L1717.7 352.6 L1719.4 352.6 L1721.1 352.6 L1722.8 352.6 L1724.5 352.5 L1726.2 352.5 L1727.9 352.4 L1729.6 352.4 L1731.3 352.4 L1733.0 352.3 L1734.7 352.3 L1736.4 352.3 L1738.1 352.2 L1739.8 352.2 L1741.5 352.1 L1743.2 352.1 L1744.9 352.0 L1746.6 352.0 L1748.3 351.9 L1750.0 351.9 L1751.7 351.8 L1753.4 351.8 L1755.1 351.7 L1756.8 351.7 L1758.5 351.6 L1760.2 351.5 L1761.9 351.5 L1763.6 351.4 L1765.3 351.4 L1767.0 351.3 L1768.7 351.2 L1770.4 351.1 L1772.1 351.1 L1773.8 351.0 L1775.5 350.9 L1777.2 350.8 L1778.9 350.8 L1780.6 350.7 L1782.3 350.6 L1784.0 350.5 L1785.7 350.4 L1787.4 350.3 L1789.1 350.2 L1790.8 350.1 L1792.5 350.0 L1794.2 349.9 L1795.9 349.8 L1797.6 349.7 L1799.3 349.6 L1801.0 349.5 L1802.7 349.3 L1804.4 349.2 L1806.1 349.1 L1807.8 349.0 L1809.5 348.8 L1811.2 348.7 L1812.8 348.6 L1814.5 348.4 L1816.2 348.3 L1817.9 348.1 L1819.6 348.0 L1821.3 347.8 L1823.0 347.6 L1824.7 347.5 L1826.4 347.3 L1828.1 347.1 L1829.8 346.9 L1831.5 346.7 L1833.2 346.6 L1834.9 346.4 L1836.6 346.2 L1838.3 346.0 L1840.0 345.7 L1841.7 345.5 L1843.4 345.3 L1845.1 345.1 L1846.8 344.9 L1848.5 344.6 L1850.2 344.4 L1851.9 344.1 L1853.6 343.9 L1855.3 343.6 L1857.0 343.4 L1858.7 343.1 L1860.4 342.8 L1862.1 342.5 L1863.8 342.3 L1865.5 342.0"/><path d="M1018.0 720.2 L1019.7 718.0 L1021.4 715.9 L1023.1 713.7 L1024.8 711.6 L1026.5 709.4 L1028.2 707.3 L1029.9 705.2 L1031.6 703.0 L1033.3 700.9 L1035.0 698.7 L1036.7 696.6 L1038.4 694.4 L1040.1 692.3 L1041.8 690.2 L1043.5 688.0 L1045.2 685.9 L1046.9 683.8 L1048.6 681.6 L1050.3 679.5 L1052.0 677.4 L1053.7 675.2 L1055.4 673.1 L1057.1 671.0 L1058.8 668.9 L1060.5 666.7 L1062.2 664.6 L1063.9 662.5 L1065.6 660.4 L1067.3 658.2 L1069.0 656.1 L1070.7 654.0 L1072.3 651.9 L1074.0 649.8 L1075.7 647.7 L1077.4 645.5 L1079.1 643.4 L1080.8 641.3 L1082.5 639.2 L1084.2 637.1 L1085.9 635.0 L1087.6 632.9 L1089.3 630.8 L1091.0 628.7 L1092.7 626.6 L1094.4 624.5 L1096.1 622.4 L1097.8 620.3 L1099.5 618.2 L1101.2 616.2 L1102.9 614.1 L1104.6 612.0 L1106.3 609.9 L1108.0 607.8 L1109.7 605.8 L1111.4 603.7 L1113.1 601.6 L1114.8 599.6 L1116.5 597.5 L1118.2 595.5 L1119.9 593.4 L1121.6 591.3 L1123.3 589.3 L1125.0 587.3 L1126.7 585.2 L1128.4 583.2 L1130.1 581.1 L1131.8 579.1 L1133.5 577.1 L1135.2 575.1 L1136.9 573.1 L1138.6 571.0 L1140.3 569.0 L1142.0 567.0 L1143.7 565.0 L1145.4 563.0 L1147.1 561.0 L1148.8 559.1 L1150.5 557.1 L1152.2 555.1 L1153.9 553.1 L1155.6 551.2 L1157.3 549.2 L1159.0 547.3 L1160.7 545.3 L1162.4 543.4 L1164.1 541.4 L1165.8 539.5 L1167.5 537.6 L1169.2 535.7 L1170.9 533.8 L1172.6 531.9 L1174.3 530.0 L1176.0 528.1 L1177.6 526.2 L1179.3 524.3 L1181.0 522.5 L1182.7 520.6 L1184.4 518.8 L1186.1 516.9 L1187.8 515.1 L1189.5 513.3 L1191.2 511.5 L1192.9 509.7 L1194.6 507.9 L1196.3 506.1 L1198.0 504.3 L1199.7 502.5 L1201.4 500.8 L1203.1 499.0 L1204.8 497.3 L1206.5 495.6 L1208.2 493.9 L1209.9 492.2 L1211.6 490.5 L1213.3 488.8 L1215.0 487.1 L1216.7 485.5 L1218.4 483.8 L1220.1 482.2 L1221.8 480.6 L1223.5 479.0 L1225.2 477.4 L1226.9 475.8 L1228.6 474.2 L1230.3 472.7 L1232.0 471.1 L1233.7 469.6 L1235.4 468.1 L1237.1 466.6 L1238.8 465.1 L1240.5 463.6 L1242.2 462.2 L1243.9 460.7 L1245.6 459.3 L1247.3 457.9 L1249.0 456.5 L1250.7 455.1 L1252.4 453.7 L1254.1 452.4 L1255.8 451.1 L1257.5 449.7 L1259.2 448.4 L1260.9 447.1 L1262.6 445.9 L1264.3 444.6 L1266.0 443.4 L1267.7 442.1 L1269.4 440.9 L1271.1 439.7 L1272.8 438.6 L1274.5 437.4 L1276.2 436.3 L1277.9 435.1 L1279.6 434.0 L1281.3 432.9 L1282.9 431.9 L1284.6 430.8 L1286.3 429.8 L1288.0 428.7 L1289.7 427.7 L1291.4 426.7 L1293.1 425.7 L1294.8 424.8 L1296.5 423.8 L1298.2 422.9 L1299.9 422.0 L1301.6 421.1 L1303.3 420.2 L1305.0 419.3 L1306.7 418.5 L1308.4 417.7 L1310.1 416.8 L1311.8 416.0 L1313.5 415.2 L1315.2 414.5 L1316.9 413.7 L1318.6 413.0 L1320.3 412.2 L1322.0 411.5 L1323.7 410.8 L1325.4 410.1 L1327.1 409.5 L1328.8 408.8 L1330.5 408.2 L1332.2 407.5 L1333.9 406.9 L1335.6 406.3 L1337.3 405.7 L1339.0 405.2 L1340.7 404.6 L1342.4 404.0 L1344.1 403.5 L1345.8 403.0 L1347.5 402.5 L1349.2 402.0 L1350.9 401.5 L1352.6 401.0 L1354.3 400.5 L1356.0 400.1 L1357.7 399.6 L1359.4 399.2 L1361.1 398.8 L1362.8 398.4 L1364.5 398.0 L1366.2 397.6 L1367.9 397.2 L1369.6 396.8 L1371.3 396.4 L1373.0 396.1 L1374.7 395.7 L1376.4 395.4 L1378.1 395.1 L1379.8 394.7 L1381.5 394.4 L1383.2 394.1 L1384.9 393.8 L1386.6 393.5 L1388.3 393.2 L1389.9 393.0 L1391.6 392.7 L1393.3 392.4 L1395.0 392.2 L1396.7 391.9 L1398.4 391.7 L1400.1 391.5 L1401.8 391.2 L1403.5 391.0 L1405.2 390.8 L1406.9 390.6 L1408.6 390.4 L1410.3 390.2 L1412.0 390.0 L1413.7 389.8 L1415.4 389.6 L1417.1 389.5 L1418.8 389.3 L1420.5 389.1 L1422.2 388.9 L1423.9 388.8 L1425.6 388.6 L1427.3 388.5 L1429.0 388.3 L1430.7 388.2 L1432.4 388.1 L1434.1 387.9 L1435.8 387.8 L1437.5 387.7 L1439.2 387.5 L1440.9 387.4 L1442.6 387.3 L1444.3 387.2 L1446.0 387.1 L1447.7 387.0 L1449.4 386.9 L1451.1 386.8 L1452.8 386.7 L1454.5 386.6 L1456.2 386.5 L1457.9 386.4 L1459.6 386.3 L1461.3 386.2 L1463.0 386.1 L1464.7 386.1 L1466.4 386.0 L1468.1 385.9 L1469.8 385.8 L1471.5 385.8 L1473.2 385.7 L1474.9 385.6 L1476.6 385.6 L1478.3 385.5 L1480.0 385.4 L1481.7 385.4 L1483.4 385.3 L1485.1 385.3 L1486.8 385.2 L1488.5 385.1 L1490.2 385.1 L1491.9 385.0 L1493.6 385.0 L1495.2 384.9 L1496.9 384.9 L1498.6 384.9 L1500.3 384.8 L1502.0 384.8 L1503.7 384.7 L1505.4 384.7 L1507.1 384.6 L1508.8 384.6 L1510.5 384.6 L1512.2 384.5 L1513.9 384.5 L1515.6 384.5 L1517.3 384.4 L1519.0 384.4 L1520.7 384.4 L1522.4 384.3 L1524.1 384.3 L1525.8 384.3 L1527.5 384.2 L1529.2 384.2 L1530.9 384.2 L1532.6 384.2 L1534.3 384.1 L1536.0 384.1 L1537.7 384.1 L1539.4 384.1 L1541.1 384.0 L1542.8 384.0 L1544.5 384.0 L1546.2 384.0 L1547.9 383.9 L1549.6 383.9 L1551.3 383.9 L1553.0 383.9 L1554.7 383.9 L1556.4 383.8 L1558.1 383.8 L1559.8 383.8 L1561.5 383.8 L1563.2 383.8 L1564.9 383.7 L1566.6 383.7 L1568.3 383.7 L1570.0 383.7 L1571.7 383.7 L1573.4 383.7 L1575.1 383.6 L1576.8 383.6 L1578.5 383.6 L1580.2 383.6 L1581.9 383.6 L1583.6 383.6 L1585.3 383.5 L1587.0 383.5 L1588.7 383.5 L1590.4 383.5 L1592.1 383.5 L1593.8 383.5 L1595.5 383.4 L1597.2 383.4 L1598.9 383.4 L1600.6 383.4 L1602.2 383.4 L1603.9 383.4 L1605.6 383.3 L1607.3 383.3 L1609.0 383.3 L1610.7 383.3 L1612.4 383.3 L1614.1 383.2 L1615.8 383.2 L1617.5 383.2 L1619.2 383.2 L1620.9 383.2 L1622.6 383.2 L1624.3 383.1 L1626.0 383.1 L1627.7 383.1 L1629.4 383.1 L1631.1 383.1 L1632.8 383.0 L1634.5 383.0 L1636.2 383.0 L1637.9 383.0 L1639.6 382.9 L1641.3 382.9 L1643.0 382.9 L1644.7 382.9 L1646.4 382.8 L1648.1 382.8 L1649.8 382.8 L1651.5 382.8 L1653.2 382.7 L1654.9 382.7 L1656.6 382.7 L1658.3 382.7 L1660.0 382.6 L1661.7 382.6 L1663.4 382.6 L1665.1 382.5 L1666.8 382.5 L1668.5 382.5 L1670.2 382.4 L1671.9 382.4 L1673.6 382.4 L1675.3 382.3 L1677.0 382.3 L1678.7 382.2 L1680.4 382.2 L1682.1 382.2 L1683.8 382.1 L1685.5 382.1 L1687.2 382.0 L1688.9 382.0 L1690.6 381.9 L1692.3 381.9 L1694.0 381.8 L1695.7 381.8 L1697.4 381.7 L1699.1 381.7 L1700.8 381.6 L1702.5 381.5 L1704.2 381.5 L1705.9 381.4 L1707.5 381.4 L1709.2 381.3 L1710.9 381.2 L1712.6 381.2 L1714.3 381.1 L1716.0 381.0 L1717.7 380.9 L1719.4 380.9 L1721.1 380.8 L1722.8 380.7 L1724.5 380.6 L1726.2 380.5 L1727.9 380.4 L1729.6 380.3 L1731.3 380.2 L1733.0 380.1 L1734.7 380.0 L1736.4 379.9 L1738.1 379.8 L1739.8 379.7 L1741.5 379.6 L1743.2 379.5 L1744.9 379.4 L1746.6 379.3 L1748.3 379.1 L1750.0 379.0 L1751.7 378.9 L1753.4 378.7 L1755.1 378.6 L1756.8 378.5 L1758.5 378.3 L1760.2 378.2 L1761.9 378.0 L1763.6 377.8 L1765.3 377.7 L1767.0 377.5 L1768.7 377.3 L1770.4 377.2 L1772.1 377.0 L1773.8 376.8 L1775.5 376.6 L1777.2 376.4 L1778.9 376.2 L1780.6 376.0 L1782.3 375.8 L1784.0 375.6 L1785.7 375.3 L1787.4 375.1 L1789.1 374.9 L1790.8 374.6 L1792.5 374.4 L1794.2 374.1 L1795.9 373.9 L1797.6 373.6 L1799.3 373.4 L1801.0 373.1 L1802.7 372.8 L1804.4 372.5 L1806.1 372.2 L1807.8 371.9 L1809.5 371.6 L1811.2 371.3 L1812.8 370.9 L1814.5 370.6 L1816.2 370.3 L1817.9 369.9 L1819.6 369.6 L1821.3 369.2 L1823.0 368.8 L1824.7 368.4 L1826.4 368.1 L1828.1 367.7 L1829.8 367.3 L1831.5 366.8 L1833.2 366.4 L1834.9 366.0 L1836.6 365.6 L1838.3 365.1 L1840.0 364.7 L1841.7 364.2 L1843.4 363.7 L1845.1 363.3 L1846.8 362.8 L1848.5 362.3 L1850.2 361.8 L1851.9 361.3 L1853.6 360.7 L1855.3 360.2 L1857.0 359.7 L1858.7 359.1 L1860.4 358.6 L1862.1 358.0 L1863.8 357.4 L1865.5 356.9"/><path d="M1018.0 742.1 L1019.7 740.0 L1021.4 737.8 L1023.1 735.7 L1024.8 733.6 L1026.5 731.4 L1028.2 729.3 L1029.9 727.1 L1031.6 725.0 L1033.3 722.9 L1035.0 720.7 L1036.7 718.6 L1038.4 716.4 L1040.1 714.3 L1041.8 712.2 L1043.5 710.0 L1045.2 707.9 L1046.9 705.8 L1048.6 703.6 L1050.3 701.5 L1052.0 699.4 L1053.7 697.3 L1055.4 695.1 L1057.1 693.0 L1058.8 690.9 L1060.5 688.8 L1062.2 686.6 L1063.9 684.5 L1065.6 682.4 L1067.3 680.3 L1069.0 678.2 L1070.7 676.1 L1072.3 673.9 L1074.0 671.8 L1075.7 669.7 L1077.4 667.6 L1079.1 665.5 L1080.8 663.4 L1082.5 661.3 L1084.2 659.2 L1085.9 657.1 L1087.6 655.0 L1089.3 652.9 L1091.0 650.8 L1092.7 648.7 L1094.4 646.6 L1096.1 644.6 L1097.8 642.5 L1099.5 640.4 L1101.2 638.3 L1102.9 636.2 L1104.6 634.2 L1106.3 632.1 L1108.0 630.0 L1109.7 628.0 L1111.4 625.9 L1113.1 623.9 L1114.8 621.8 L1116.5 619.7 L1118.2 617.7 L1119.9 615.7 L1121.6 613.6 L1123.3 611.6 L1125.0 609.5 L1126.7 607.5 L1128.4 605.5 L1130.1 603.5 L1131.8 601.4 L1133.5 599.4 L1135.2 597.4 L1136.9 595.4 L1138.6 593.4 L1140.3 591.4 L1142.0 589.4 L1143.7 587.4 L1145.4 585.5 L1147.1 583.5 L1148.8 581.5 L1150.5 579.6 L1152.2 577.6 L1153.9 575.6 L1155.6 573.7 L1157.3 571.8 L1159.0 569.8 L1160.7 567.9 L1162.4 566.0 L1164.1 564.0 L1165.8 562.1 L1167.5 560.2 L1169.2 558.3 L1170.9 556.5 L1172.6 554.6 L1174.3 552.7 L1176.0 550.8 L1177.6 549.0 L1179.3 547.1 L1181.0 545.3 L1182.7 543.5 L1184.4 541.6 L1186.1 539.8 L1187.8 538.0 L1189.5 536.2 L1191.2 534.4 L1192.9 532.7 L1194.6 530.9 L1196.3 529.1 L1198.0 527.4 L1199.7 525.7 L1201.4 523.9 L1203.1 522.2 L1204.8 520.5 L1206.5 518.8 L1208.2 517.1 L1209.9 515.5 L1211.6 513.8 L1213.3 512.2 L1215.0 510.5 L1216.7 508.9 L1218.4 507.3 L1220.1 505.7 L1221.8 504.1 L1223.5 502.6 L1225.2 501.0 L1226.9 499.5 L1228.6 497.9 L1230.3 496.4 L1232.0 494.9 L1233.7 493.4 L1235.4 491.9 L1237.1 490.5 L1238.8 489.0 L1240.5 487.6 L1242.2 486.2 L1243.9 484.8 L1245.6 483.4 L1247.3 482.0 L1249.0 480.7 L1250.7 479.3 L1252.4 478.0 L1254.1 476.7 L1255.8 475.4 L1257.5 474.1 L1259.2 472.9 L1260.9 471.6 L1262.6 470.4 L1264.3 469.2 L1266.0 468.0 L1267.7 466.8 L1269.4 465.7 L1271.1 464.5 L1272.8 463.4 L1274.5 462.3 L1276.2 461.2 L1277.9 460.1 L1279.6 459.0 L1281.3 458.0 L1282.9 457.0 L1284.6 455.9 L1286.3 455.0 L1288.0 454.0 L1289.7 453.0 L1291.4 452.1 L1293.1 451.1 L1294.8 450.2 L1296.5 449.3 L1298.2 448.4 L1299.9 447.6 L1301.6 446.7 L1303.3 445.9 L1305.0 445.0 L1306.7 444.2 L1308.4 443.4 L1310.1 442.7 L1311.8 441.9 L1313.5 441.2 L1315.2 440.4 L1316.9 439.7 L1318.6 439.0 L1320.3 438.3 L1322.0 437.7 L1323.7 437.0 L1325.4 436.4 L1327.1 435.7 L1328.8 435.1 L1330.5 434.5 L1332.2 433.9 L1333.9 433.3 L1335.6 432.8 L1337.3 432.2 L1339.0 431.7 L1340.7 431.1 L1342.4 430.6 L1344.1 430.1 L1345.8 429.6 L1347.5 429.2 L1349.2 428.7 L1350.9 428.2 L1352.6 427.8 L1354.3 427.3 L1356.0 426.9 L1357.7 426.5 L1359.4 426.1 L1361.1 425.7 L1362.8 425.3 L1364.5 424.9 L1366.2 424.6 L1367.9 424.2 L1369.6 423.9 L1371.3 423.5 L1373.0 423.2 L1374.7 422.9 L1376.4 422.5 L1378.1 422.2 L1379.8 421.9 L1381.5 421.7 L1383.2 421.4 L1384.9 421.1 L1386.6 420.8 L1388.3 420.6 L1389.9 420.3 L1391.6 420.1 L1393.3 419.8 L1395.0 419.6 L1396.7 419.4 L1398.4 419.1 L1400.1 418.9 L1401.8 418.7 L1403.5 418.5 L1405.2 418.3 L1406.9 418.1 L1408.6 417.9 L1410.3 417.7 L1412.0 417.6 L1413.7 417.4 L1415.4 417.2 L1417.1 417.0 L1418.8 416.9 L1420.5 416.7 L1422.2 416.6 L1423.9 416.4 L1425.6 416.3 L1427.3 416.1 L1429.0 416.0 L1430.7 415.9 L1432.4 415.8 L1434.1 415.6 L1435.8 415.5 L1437.5 415.4 L1439.2 415.3 L1440.9 415.2 L1442.6 415.1 L1444.3 415.0 L1446.0 414.9 L1447.7 414.8 L1449.4 414.7 L1451.1 414.6 L1452.8 414.5 L1454.5 414.4 L1456.2 414.3 L1457.9 414.2 L1459.6 414.1 L1461.3 414.1 L1463.0 414.0 L1464.7 413.9 L1466.4 413.8 L1468.1 413.8 L1469.8 413.7 L1471.5 413.6 L1473.2 413.6 L1474.9 413.5 L1476.6 413.4 L1478.3 413.4 L1480.0 413.3 L1481.7 413.3 L1483.4 413.2 L1485.1 413.2 L1486.8 413.1 L1488.5 413.1 L1490.2 413.0 L1491.9 413.0 L1493.6 412.9 L1495.2 412.9 L1496.9 412.8 L1498.6 412.8 L1500.3 412.7 L1502.0 412.7 L1503.7 412.6 L1505.4 412.6 L1507.1 412.6 L1508.8 412.5 L1510.5 412.5 L1512.2 412.5 L1513.9 412.4 L1515.6 412.4 L1517.3 412.4 L1519.0 412.3 L1520.7 412.3 L1522.4 412.3 L1524.1 412.2 L1525.8 412.2 L1527.5 412.2 L1529.2 412.1 L1530.9 412.1 L1532.6 412.1 L1534.3 412.1 L1536.0 412.0 L1537.7 412.0 L1539.4 412.0 L1541.1 412.0 L1542.8 411.9 L1544.5 411.9 L1546.2 411.9 L1547.9 411.9 L1549.6 411.8 L1551.3 411.8 L1553.0 411.8 L1554.7 411.8 L1556.4 411.7 L1558.1 411.7 L1559.8 411.7 L1561.5 411.7 L1563.2 411.7 L1564.9 411.6 L1566.6 411.6 L1568.3 411.6 L1570.0 411.6 L1571.7 411.5 L1573.4 411.5 L1575.1 411.5 L1576.8 411.5 L1578.5 411.5 L1580.2 411.4 L1581.9 411.4 L1583.6 411.4 L1585.3 411.4 L1587.0 411.3 L1588.7 411.3 L1590.4 411.3 L1592.1 411.3 L1593.8 411.2 L1595.5 411.2 L1597.2 411.2 L1598.9 411.2 L1600.6 411.1 L1602.2 411.1 L1603.9 411.1 L1605.6 411.1 L1607.3 411.0 L1609.0 411.0 L1610.7 411.0 L1612.4 411.0 L1614.1 410.9 L1615.8 410.9 L1617.5 410.9 L1619.2 410.8 L1620.9 410.8 L1622.6 410.8 L1624.3 410.7 L1626.0 410.7 L1627.7 410.7 L1629.4 410.6 L1631.1 410.6 L1632.8 410.6 L1634.5 410.5 L1636.2 410.5 L1637.9 410.4 L1639.6 410.4 L1641.3 410.4 L1643.0 410.3 L1644.7 410.3 L1646.4 410.2 L1648.1 410.2 L1649.8 410.1 L1651.5 410.1 L1653.2 410.0 L1654.9 410.0 L1656.6 409.9 L1658.3 409.9 L1660.0 409.8 L1661.7 409.8 L1663.4 409.7 L1665.1 409.7 L1666.8 409.6 L1668.5 409.5 L1670.2 409.5 L1671.9 409.4 L1673.6 409.3 L1675.3 409.3 L1677.0 409.2 L1678.7 409.1 L1680.4 409.0 L1682.1 409.0 L1683.8 408.9 L1685.5 408.8 L1687.2 408.7 L1688.9 408.6 L1690.6 408.5 L1692.3 408.4 L1694.0 408.3 L1695.7 408.2 L1697.4 408.1 L1699.1 408.0 L1700.8 407.9 L1702.5 407.8 L1704.2 407.7 L1705.9 407.6 L1707.5 407.5 L1709.2 407.3 L1710.9 407.2 L1712.6 407.1 L1714.3 406.9 L1716.0 406.8 L1717.7 406.7 L1719.4 406.5 L1721.1 406.4 L1722.8 406.2 L1724.5 406.0 L1726.2 405.9 L1727.9 405.7 L1729.6 405.5 L1731.3 405.4 L1733.0 405.2 L1734.7 405.0 L1736.4 404.8 L1738.1 404.6 L1739.8 404.4 L1741.5 404.2 L1743.2 404.0 L1744.9 403.8 L1746.6 403.6 L1748.3 403.3 L1750.0 403.1 L1751.7 402.8 L1753.4 402.6 L1755.1 402.3 L1756.8 402.1 L1758.5 401.8 L1760.2 401.5 L1761.9 401.3 L1763.6 401.0 L1765.3 400.7 L1767.0 400.4 L1768.7 400.1 L1770.4 399.8 L1772.1 399.4 L1773.8 399.1 L1775.5 398.8 L1777.2 398.4 L1778.9 398.1 L1780.6 397.7 L1782.3 397.3 L1784.0 396.9 L1785.7 396.5 L1787.4 396.1 L1789.1 395.7 L1790.8 395.3 L1792.5 394.9 L1794.2 394.5 L1795.9 394.0 L1797.6 393.6 L1799.3 393.1 L1801.0 392.6 L1802.7 392.1 L1804.4 391.6 L1806.1 391.1 L1807.8 390.6 L1809.5 390.1 L1811.2 389.6 L1812.8 389.0 L1814.5 388.5 L1816.2 387.9 L1817.9 387.3 L1819.6 386.8 L1821.3 386.2 L1823.0 385.6 L1824.7 385.0 L1826.4 384.3 L1828.1 383.7 L1829.8 383.1 L1831.5 382.4 L1833.2 381.7 L1834.9 381.1 L1836.6 380.4 L1838.3 379.7 L1840.0 379.0 L1841.7 378.3 L1843.4 377.5 L1845.1 376.8 L1846.8 376.1 L1848.5 375.3 L1850.2 374.5 L1851.9 373.8 L1853.6 373.0 L1855.3 372.2 L1857.0 371.4 L1858.7 370.6 L1860.4 369.8 L1862.1 369.0 L1863.8 368.1 L1865.5 367.3"/><path d="M1018.0 768.1 L1019.7 765.9 L1021.4 763.8 L1023.1 761.7 L1024.8 759.5 L1026.5 757.4 L1028.2 755.2 L1029.9 753.1 L1031.6 750.9 L1033.3 748.8 L1035.0 746.7 L1036.7 744.5 L1038.4 742.4 L1040.1 740.3 L1041.8 738.1 L1043.5 736.0 L1045.2 733.9 L1046.9 731.7 L1048.6 729.6 L1050.3 727.5 L1052.0 725.3 L1053.7 723.2 L1055.4 721.1 L1057.1 719.0 L1058.8 716.9 L1060.5 714.7 L1062.2 712.6 L1063.9 710.5 L1065.6 708.4 L1067.3 706.3 L1069.0 704.1 L1070.7 702.0 L1072.3 699.9 L1074.0 697.8 L1075.7 695.7 L1077.4 693.6 L1079.1 691.5 L1080.8 689.4 L1082.5 687.3 L1084.2 685.2 L1085.9 683.1 L1087.6 681.0 L1089.3 678.9 L1091.0 676.8 L1092.7 674.7 L1094.4 672.6 L1096.1 670.6 L1097.8 668.5 L1099.5 666.4 L1101.2 664.3 L1102.9 662.3 L1104.6 660.2 L1106.3 658.1 L1108.0 656.1 L1109.7 654.0 L1111.4 651.9 L1113.1 649.9 L1114.8 647.8 L1116.5 645.8 L1118.2 643.7 L1119.9 641.7 L1121.6 639.7 L1123.3 637.6 L1125.0 635.6 L1126.7 633.6 L1128.4 631.5 L1130.1 629.5 L1131.8 627.5 L1133.5 625.5 L1135.2 623.5 L1136.9 621.5 L1138.6 619.5 L1140.3 617.5 L1142.0 615.5 L1143.7 613.5 L1145.4 611.6 L1147.1 609.6 L1148.8 607.6 L1150.5 605.7 L1152.2 603.7 L1153.9 601.8 L1155.6 599.8 L1157.3 597.9 L1159.0 596.0 L1160.7 594.0 L1162.4 592.1 L1164.1 590.2 L1165.8 588.3 L1167.5 586.4 L1169.2 584.5 L1170.9 582.6 L1172.6 580.8 L1174.3 578.9 L1176.0 577.0 L1177.6 575.2 L1179.3 573.4 L1181.0 571.5 L1182.7 569.7 L1184.4 567.9 L1186.1 566.1 L1187.8 564.3 L1189.5 562.5 L1191.2 560.7 L1192.9 559.0 L1194.6 557.2 L1196.3 555.5 L1198.0 553.7 L1199.7 552.0 L1201.4 550.3 L1203.1 548.6 L1204.8 546.9 L1206.5 545.2 L1208.2 543.5 L1209.9 541.9 L1211.6 540.2 L1213.3 538.6 L1215.0 537.0 L1216.7 535.3 L1218.4 533.8 L1220.1 532.2 L1221.8 530.6 L1223.5 529.0 L1225.2 527.5 L1226.9 526.0 L1228.6 524.4 L1230.3 522.9 L1232.0 521.5 L1233.7 520.0 L1235.4 518.5 L1237.1 517.1 L1238.8 515.6 L1240.5 514.2 L1242.2 512.8 L1243.9 511.4 L1245.6 510.1 L1247.3 508.7 L1249.0 507.4 L1250.7 506.0 L1252.4 504.7 L1254.1 503.4 L1255.8 502.2 L1257.5 500.9 L1259.2 499.7 L1260.9 498.4 L1262.6 497.2 L1264.3 496.0 L1266.0 494.8 L1267.7 493.7 L1269.4 492.5 L1271.1 491.4 L1272.8 490.3 L1274.5 489.2 L1276.2 488.1 L1277.9 487.0 L1279.6 486.0 L1281.3 485.0 L1282.9 483.9 L1284.6 482.9 L1286.3 482.0 L1288.0 481.0 L1289.7 480.0 L1291.4 479.1 L1293.1 478.2 L1294.8 477.3 L1296.5 476.4 L1298.2 475.5 L1299.9 474.7 L1301.6 473.8 L1303.3 473.0 L1305.0 472.2 L1306.7 471.4 L1308.4 470.6 L1310.1 469.9 L1311.8 469.1 L1313.5 468.4 L1315.2 467.7 L1316.9 467.0 L1318.6 466.3 L1320.3 465.6 L1322.0 465.0 L1323.7 464.3 L1325.4 463.7 L1327.1 463.1 L1328.8 462.5 L1330.5 461.9 L1332.2 461.3 L1333.9 460.7 L1335.6 460.2 L1337.3 459.6 L1339.0 459.1 L1340.7 458.6 L1342.4 458.1 L1344.1 457.6 L1345.8 457.1 L1347.5 456.6 L1349.2 456.2 L1350.9 455.7 L1352.6 455.3 L1354.3 454.9 L1356.0 454.4 L1357.7 454.0 L1359.4 453.6 L1361.1 453.3 L1362.8 452.9 L1364.5 452.5 L1366.2 452.2 L1367.9 451.8 L1369.6 451.5 L1371.3 451.1 L1373.0 450.8 L1374.7 450.5 L1376.4 450.2 L1378.1 449.9 L1379.8 449.6 L1381.5 449.3 L1383.2 449.0 L1384.9 448.8 L1386.6 448.5 L1388.3 448.2 L1389.9 448.0 L1391.6 447.7 L1393.3 447.5 L1395.0 447.3 L1396.7 447.1 L1398.4 446.8 L1400.1 446.6 L1401.8 446.4 L1403.5 446.2 L1405.2 446.0 L1406.9 445.8 L1408.6 445.7 L1410.3 445.5 L1412.0 445.3 L1413.7 445.1 L1415.4 445.0 L1417.1 444.8 L1418.8 444.6 L1420.5 444.5 L1422.2 444.3 L1423.9 444.2 L1425.6 444.1 L1427.3 443.9 L1429.0 443.8 L1430.7 443.7 L1432.4 443.5 L1434.1 443.4 L1435.8 443.3 L1437.5 443.2 L1439.2 443.1 L1440.9 443.0 L1442.6 442.9 L1444.3 442.8 L1446.0 442.7 L1447.7 442.6 L1449.4 442.5 L1451.1 442.4 L1452.8 442.3 L1454.5 442.2 L1456.2 442.1 L1457.9 442.0 L1459.6 442.0 L1461.3 441.9 L1463.0 441.8 L1464.7 441.7 L1466.4 441.7 L1468.1 441.6 L1469.8 441.5 L1471.5 441.4 L1473.2 441.4 L1474.9 441.3 L1476.6 441.3 L1478.3 441.2 L1480.0 441.1 L1481.7 441.1 L1483.4 441.0 L1485.1 441.0 L1486.8 440.9 L1488.5 440.9 L1490.2 440.8 L1491.9 440.8 L1493.6 440.7 L1495.2 440.7 L1496.9 440.6 L1498.6 440.6 L1500.3 440.5 L1502.0 440.5 L1503.7 440.5 L1505.4 440.4 L1507.1 440.4 L1508.8 440.3 L1510.5 440.3 L1512.2 440.3 L1513.9 440.2 L1515.6 440.2 L1517.3 440.2 L1519.0 440.1 L1520.7 440.1 L1522.4 440.1 L1524.1 440.0 L1525.8 440.0 L1527.5 440.0 L1529.2 439.9 L1530.9 439.9 L1532.6 439.9 L1534.3 439.8 L1536.0 439.8 L1537.7 439.8 L1539.4 439.8 L1541.1 439.7 L1542.8 439.7 L1544.5 439.7 L1546.2 439.6 L1547.9 439.6 L1549.6 439.6 L1551.3 439.5 L1553.0 439.5 L1554.7 439.5 L1556.4 439.5 L1558.1 439.4 L1559.8 439.4 L1561.5 439.4 L1563.2 439.4 L1564.9 439.3 L1566.6 439.3 L1568.3 439.3 L1570.0 439.2 L1571.7 439.2 L1573.4 439.2 L1575.1 439.1 L1576.8 439.1 L1578.5 439.1 L1580.2 439.1 L1581.9 439.0 L1583.6 439.0 L1585.3 439.0 L1587.0 438.9 L1588.7 438.9 L1590.4 438.9 L1592.1 438.8 L1593.8 438.8 L1595.5 438.8 L1597.2 438.7 L1598.9 438.7 L1600.6 438.6 L1602.2 438.6 L1603.9 438.6 L1605.6 438.5 L1607.3 438.5 L1609.0 438.5 L1610.7 438.4 L1612.4 438.4 L1614.1 438.3 L1615.8 438.3 L1617.5 438.2 L1619.2 438.2 L1620.9 438.1 L1622.6 438.1 L1624.3 438.0 L1626.0 438.0 L1627.7 437.9 L1629.4 437.9 L1631.1 437.8 L1632.8 437.8 L1634.5 437.7 L1636.2 437.6 L1637.9 437.6 L1639.6 437.5 L1641.3 437.4 L1643.0 437.4 L1644.7 437.3 L1646.4 437.2 L1648.1 437.2 L1649.8 437.1 L1651.5 437.0 L1653.2 436.9 L1654.9 436.8 L1656.6 436.8 L1658.3 436.7 L1660.0 436.6 L1661.7 436.5 L1663.4 436.4 L1665.1 436.3 L1666.8 436.2 L1668.5 436.1 L1670.2 436.0 L1671.9 435.9 L1673.6 435.8 L1675.3 435.7 L1677.0 435.5 L1678.7 435.4 L1680.4 435.3 L1682.1 435.2 L1683.8 435.0 L1685.5 434.9 L1687.2 434.8 L1688.9 434.6 L1690.6 434.5 L1692.3 434.3 L1694.0 434.2 L1695.7 434.0 L1697.4 433.9 L1699.1 433.7 L1700.8 433.5 L1702.5 433.3 L1704.2 433.2 L1705.9 433.0 L1707.5 432.8 L1709.2 432.6 L1710.9 432.4 L1712.6 432.2 L1714.3 432.0 L1716.0 431.7 L1717.7 431.5 L1719.4 431.3 L1721.1 431.1 L1722.8 430.8 L1724.5 430.6 L1726.2 430.3 L1727.9 430.0 L1729.6 429.8 L1731.3 429.5 L1733.0 429.2 L1734.7 428.9 L1736.4 428.6 L1738.1 428.3 L1739.8 428.0 L1741.5 427.7 L1743.2 427.4 L1744.9 427.0 L1746.6 426.7 L1748.3 426.3 L1750.0 426.0 L1751.7 425.6 L1753.4 425.2 L1755.1 424.8 L1756.8 424.4 L1758.5 424.0 L1760.2 423.6 L1761.9 423.2 L1763.6 422.7 L1765.3 422.3 L1767.0 421.8 L1768.7 421.4 L1770.4 420.9 L1772.1 420.4 L1773.8 419.9 L1775.5 419.4 L1777.2 418.9 L1778.9 418.4 L1780.6 417.8 L1782.3 417.3 L1784.0 416.7 L1785.7 416.1 L1787.4 415.5 L1789.1 414.9 L1790.8 414.3 L1792.5 413.7 L1794.2 413.1 L1795.9 412.4 L1797.6 411.8 L1799.3 411.1 L1801.0 410.5 L1802.7 409.8 L1804.4 409.1 L1806.1 408.4 L1807.8 407.6 L1809.5 406.9 L1811.2 406.1 L1812.8 405.4 L1814.5 404.6 L1816.2 403.8 L1817.9 403.0 L1819.6 402.2 L1821.3 401.4 L1823.0 400.6 L1824.7 399.7 L1826.4 398.9 L1828.1 398.0 L1829.8 397.2 L1831.5 396.3 L1833.2 395.4 L1834.9 394.5 L1836.6 393.6 L1838.3 392.6 L1840.0 391.7 L1841.7 390.8 L1843.4 389.8 L1845.1 388.9 L1846.8 387.9 L1848.5 386.9 L1850.2 385.9 L1851.9 384.9 L1853.6 383.9 L1855.3 382.9 L1857.0 381.9 L1858.7 380.8 L1860.4 379.8 L1862.1 378.8 L1863.8 377.7 L1865.5 376.7"/><path d="M1018.0 799.8 L1019.7 797.6 L1021.4 795.5 L1023.1 793.4 L1024.8 791.2 L1026.5 789.1 L1028.2 786.9 L1029.9 784.8 L1031.6 782.7 L1033.3 780.5 L1035.0 778.4 L1036.7 776.2 L1038.4 774.1 L1040.1 772.0 L1041.8 769.8 L1043.5 767.7 L1045.2 765.6 L1046.9 763.4 L1048.6 761.3 L1050.3 759.2 L1052.0 757.0 L1053.7 754.9 L1055.4 752.8 L1057.1 750.7 L1058.8 748.5 L1060.5 746.4 L1062.2 744.3 L1063.9 742.2 L1065.6 740.1 L1067.3 737.9 L1069.0 735.8 L1070.7 733.7 L1072.3 731.6 L1074.0 729.5 L1075.7 727.4 L1077.4 725.3 L1079.1 723.2 L1080.8 721.1 L1082.5 719.0 L1084.2 716.9 L1085.9 714.8 L1087.6 712.7 L1089.3 710.6 L1091.0 708.5 L1092.7 706.4 L1094.4 704.3 L1096.1 702.2 L1097.8 700.1 L1099.5 698.1 L1101.2 696.0 L1102.9 693.9 L1104.6 691.8 L1106.3 689.8 L1108.0 687.7 L1109.7 685.6 L1111.4 683.6 L1113.1 681.5 L1114.8 679.4 L1116.5 677.4 L1118.2 675.3 L1119.9 673.3 L1121.6 671.3 L1123.3 669.2 L1125.0 667.2 L1126.7 665.2 L1128.4 663.1 L1130.1 661.1 L1131.8 659.1 L1133.5 657.1 L1135.2 655.1 L1136.9 653.1 L1138.6 651.1 L1140.3 649.1 L1142.0 647.1 L1143.7 645.1 L1145.4 643.1 L1147.1 641.1 L1148.8 639.2 L1150.5 637.2 L1152.2 635.2 L1153.9 633.3 L1155.6 631.3 L1157.3 629.4 L1159.0 627.5 L1160.7 625.5 L1162.4 623.6 L1164.1 621.7 L1165.8 619.8 L1167.5 617.9 L1169.2 616.0 L1170.9 614.1 L1172.6 612.2 L1174.3 610.4 L1176.0 608.5 L1177.6 606.6 L1179.3 604.8 L1181.0 602.9 L1182.7 601.1 L1184.4 599.3 L1186.1 597.5 L1187.8 595.7 L1189.5 593.9 L1191.2 592.1 L1192.9 590.3 L1194.6 588.5 L1196.3 586.8 L1198.0 585.0 L1199.7 583.3 L1201.4 581.6 L1203.1 579.9 L1204.8 578.2 L1206.5 576.5 L1208.2 574.8 L1209.9 573.1 L1211.6 571.5 L1213.3 569.8 L1215.0 568.2 L1216.7 566.6 L1218.4 565.0 L1220.1 563.4 L1221.8 561.8 L1223.5 560.2 L1225.2 558.6 L1226.9 557.1 L1228.6 555.6 L1230.3 554.1 L1232.0 552.6 L1233.7 551.1 L1235.4 549.6 L1237.1 548.1 L1238.8 546.7 L1240.5 545.3 L1242.2 543.8 L1243.9 542.4 L1245.6 541.1 L1247.3 539.7 L1249.0 538.3 L1250.7 537.0 L1252.4 535.7 L1254.1 534.4 L1255.8 533.1 L1257.5 531.8 L1259.2 530.5 L1260.9 529.3 L1262.6 528.1 L1264.3 526.9 L1266.0 525.7 L1267.7 524.5 L1269.4 523.3 L1271.1 522.2 L1272.8 521.0 L1274.5 519.9 L1276.2 518.8 L1277.9 517.8 L1279.6 516.7 L1281.3 515.6 L1282.9 514.6 L1284.6 513.6 L1286.3 512.6 L1288.0 511.6 L1289.7 510.7 L1291.4 509.7 L1293.1 508.8 L1294.8 507.9 L1296.5 507.0 L1298.2 506.1 L1299.9 505.2 L1301.6 504.3 L1303.3 503.5 L1305.0 502.7 L1306.7 501.9 L1308.4 501.1 L1310.1 500.3 L1311.8 499.6 L1313.5 498.8 L1315.2 498.1 L1316.9 497.4 L1318.6 496.7 L1320.3 496.0 L1322.0 495.3 L1323.7 494.6 L1325.4 494.0 L1327.1 493.4 L1328.8 492.7 L1330.5 492.1 L1332.2 491.6 L1333.9 491.0 L1335.6 490.4 L1337.3 489.9 L1339.0 489.3 L1340.7 488.8 L1342.4 488.3 L1344.1 487.8 L1345.8 487.3 L1347.5 486.8 L1349.2 486.3 L1350.9 485.9 L1352.6 485.4 L1354.3 485.0 L1356.0 484.6 L1357.7 484.1 L1359.4 483.7 L1361.1 483.3 L1362.8 482.9 L1364.5 482.6 L1366.2 482.2 L1367.9 481.8 L1369.6 481.5 L1371.3 481.2 L1373.0 480.8 L1374.7 480.5 L1376.4 480.2 L1378.1 479.9 L1379.8 479.6 L1381.5 479.3 L1383.2 479.0 L1384.9 478.7 L1386.6 478.5 L1388.3 478.2 L1389.9 477.9 L1391.6 477.7 L1393.3 477.4 L1395.0 477.2 L1396.7 477.0 L1398.4 476.8 L1400.1 476.5 L1401.8 476.3 L1403.5 476.1 L1405.2 475.9 L1406.9 475.7 L1408.6 475.5 L1410.3 475.4 L1412.0 475.2 L1413.7 475.0 L1415.4 474.8 L1417.1 474.7 L1418.8 474.5 L1420.5 474.3 L1422.2 474.2 L1423.9 474.0 L1425.6 473.9 L1427.3 473.8 L1429.0 473.6 L1430.7 473.5 L1432.4 473.4 L1434.1 473.2 L1435.8 473.1 L1437.5 473.0 L1439.2 472.9 L1440.9 472.8 L1442.6 472.7 L1444.3 472.5 L1446.0 472.4 L1447.7 472.3 L1449.4 472.2 L1451.1 472.2 L1452.8 472.1 L1454.5 472.0 L1456.2 471.9 L1457.9 471.8 L1459.6 471.7 L1461.3 471.6 L1463.0 471.6 L1464.7 471.5 L1466.4 471.4 L1468.1 471.3 L1469.8 471.3 L1471.5 471.2 L1473.2 471.1 L1474.9 471.1 L1476.6 471.0 L1478.3 470.9 L1480.0 470.9 L1481.7 470.8 L1483.4 470.7 L1485.1 470.7 L1486.8 470.6 L1488.5 470.6 L1490.2 470.5 L1491.9 470.5 L1493.6 470.4 L1495.2 470.4 L1496.9 470.3 L1498.6 470.3 L1500.3 470.2 L1502.0 470.2 L1503.7 470.1 L1505.4 470.1 L1507.1 470.0 L1508.8 470.0 L1510.5 470.0 L1512.2 469.9 L1513.9 469.9 L1515.6 469.8 L1517.3 469.8 L1519.0 469.8 L1520.7 469.7 L1522.4 469.7 L1524.1 469.6 L1525.8 469.6 L1527.5 469.6 L1529.2 469.5 L1530.9 469.5 L1532.6 469.5 L1534.3 469.4 L1536.0 469.4 L1537.7 469.4 L1539.4 469.3 L1541.1 469.3 L1542.8 469.3 L1544.5 469.2 L1546.2 469.2 L1547.9 469.1 L1549.6 469.1 L1551.3 469.1 L1553.0 469.0 L1554.7 469.0 L1556.4 469.0 L1558.1 468.9 L1559.8 468.9 L1561.5 468.9 L1563.2 468.8 L1564.9 468.8 L1566.6 468.8 L1568.3 468.7 L1570.0 468.7 L1571.7 468.6 L1573.4 468.6 L1575.1 468.6 L1576.8 468.5 L1578.5 468.5 L1580.2 468.4 L1581.9 468.4 L1583.6 468.4 L1585.3 468.3 L1587.0 468.3 L1588.7 468.2 L1590.4 468.2 L1592.1 468.1 L1593.8 468.1 L1595.5 468.0 L1597.2 468.0 L1598.9 467.9 L1600.6 467.9 L1602.2 467.8 L1603.9 467.8 L1605.6 467.7 L1607.3 467.7 L1609.0 467.6 L1610.7 467.5 L1612.4 467.5 L1614.1 467.4 L1615.8 467.3 L1617.5 467.3 L1619.2 467.2 L1620.9 467.1 L1622.6 467.1 L1624.3 467.0 L1626.0 466.9 L1627.7 466.8 L1629.4 466.8 L1631.1 466.7 L1632.8 466.6 L1634.5 466.5 L1636.2 466.4 L1637.9 466.3 L1639.6 466.2 L1641.3 466.1 L1643.0 466.0 L1644.7 465.9 L1646.4 465.8 L1648.1 465.7 L1649.8 465.6 L1651.5 465.5 L1653.2 465.4 L1654.9 465.3 L1656.6 465.1 L1658.3 465.0 L1660.0 464.9 L1661.7 464.8 L1663.4 464.6 L1665.1 464.5 L1666.8 464.3 L1668.5 464.2 L1670.2 464.0 L1671.9 463.9 L1673.6 463.7 L1675.3 463.5 L1677.0 463.4 L1678.7 463.2 L1680.4 463.0 L1682.1 462.8 L1683.8 462.6 L1685.5 462.4 L1687.2 462.2 L1688.9 462.0 L1690.6 461.8 L1692.3 461.6 L1694.0 461.4 L1695.7 461.2 L1697.4 460.9 L1699.1 460.7 L1700.8 460.4 L1702.5 460.2 L1704.2 459.9 L1705.9 459.7 L1707.5 459.4 L1709.2 459.1 L1710.9 458.8 L1712.6 458.5 L1714.3 458.2 L1716.0 457.9 L1717.7 457.6 L1719.4 457.2 L1721.1 456.9 L1722.8 456.6 L1724.5 456.2 L1726.2 455.8 L1727.9 455.5 L1729.6 455.1 L1731.3 454.7 L1733.0 454.3 L1734.7 453.9 L1736.4 453.5 L1738.1 453.1 L1739.8 452.6 L1741.5 452.2 L1743.2 451.7 L1744.9 451.2 L1746.6 450.8 L1748.3 450.3 L1750.0 449.8 L1751.7 449.3 L1753.4 448.7 L1755.1 448.2 L1756.8 447.7 L1758.5 447.1 L1760.2 446.5 L1761.9 445.9 L1763.6 445.4 L1765.3 444.7 L1767.0 444.1 L1768.7 443.5 L1770.4 442.9 L1772.1 442.2 L1773.8 441.5 L1775.5 440.9 L1777.2 440.2 L1778.9 439.5 L1780.6 438.7 L1782.3 438.0 L1784.0 437.3 L1785.7 436.5 L1787.4 435.7 L1789.1 434.9 L1790.8 434.2 L1792.5 433.3 L1794.2 432.5 L1795.9 431.7 L1797.6 430.8 L1799.3 430.0 L1801.0 429.1 L1802.7 428.2 L1804.4 427.3 L1806.1 426.4 L1807.8 425.5 L1809.5 424.5 L1811.2 423.6 L1812.8 422.6 L1814.5 421.6 L1816.2 420.7 L1817.9 419.7 L1819.6 418.6 L1821.3 417.6 L1823.0 416.6 L1824.7 415.5 L1826.4 414.5 L1828.1 413.4 L1829.8 412.3 L1831.5 411.3 L1833.2 410.2 L1834.9 409.1 L1836.6 407.9 L1838.3 406.8 L1840.0 405.7 L1841.7 404.5 L1843.4 403.4 L1845.1 402.2 L1846.8 401.0 L1848.5 399.9 L1850.2 398.7 L1851.9 397.5 L1853.6 396.3 L1855.3 395.1 L1857.0 393.9 L1858.7 392.7 L1860.4 391.4 L1862.1 390.2 L1863.8 389.0 L1865.5 387.7"/><path d="M1018.0 840.6 L1019.7 838.5 L1021.4 836.3 L1023.1 834.2 L1024.8 832.1 L1026.5 829.9 L1028.2 827.8 L1029.9 825.6 L1031.6 823.5 L1033.3 821.3 L1035.0 819.2 L1036.7 817.1 L1038.4 814.9 L1040.1 812.8 L1041.8 810.6 L1043.5 808.5 L1045.2 806.4 L1046.9 804.2 L1048.6 802.1 L1050.3 800.0 L1052.0 797.8 L1053.7 795.7 L1055.4 793.6 L1057.1 791.5 L1058.8 789.3 L1060.5 787.2 L1062.2 785.1 L1063.9 783.0 L1065.6 780.8 L1067.3 778.7 L1069.0 776.6 L1070.7 774.5 L1072.3 772.4 L1074.0 770.2 L1075.7 768.1 L1077.4 766.0 L1079.1 763.9 L1080.8 761.8 L1082.5 759.7 L1084.2 757.6 L1085.9 755.5 L1087.6 753.4 L1089.3 751.3 L1091.0 749.2 L1092.7 747.1 L1094.4 745.0 L1096.1 742.9 L1097.8 740.8 L1099.5 738.7 L1101.2 736.6 L1102.9 734.6 L1104.6 732.5 L1106.3 730.4 L1108.0 728.3 L1109.7 726.2 L1111.4 724.2 L1113.1 722.1 L1114.8 720.0 L1116.5 718.0 L1118.2 715.9 L1119.9 713.9 L1121.6 711.8 L1123.3 709.8 L1125.0 707.7 L1126.7 705.7 L1128.4 703.7 L1130.1 701.6 L1131.8 699.6 L1133.5 697.6 L1135.2 695.5 L1136.9 693.5 L1138.6 691.5 L1140.3 689.5 L1142.0 687.5 L1143.7 685.5 L1145.4 683.5 L1147.1 681.5 L1148.8 679.5 L1150.5 677.5 L1152.2 675.6 L1153.9 673.6 L1155.6 671.6 L1157.3 669.7 L1159.0 667.7 L1160.7 665.8 L1162.4 663.8 L1164.1 661.9 L1165.8 660.0 L1167.5 658.1 L1169.2 656.1 L1170.9 654.2 L1172.6 652.3 L1174.3 650.4 L1176.0 648.6 L1177.6 646.7 L1179.3 644.8 L1181.0 642.9 L1182.7 641.1 L1184.4 639.2 L1186.1 637.4 L1187.8 635.6 L1189.5 633.8 L1191.2 631.9 L1192.9 630.1 L1194.6 628.3 L1196.3 626.6 L1198.0 624.8 L1199.7 623.0 L1201.4 621.3 L1203.1 619.5 L1204.8 617.8 L1206.5 616.1 L1208.2 614.3 L1209.9 612.6 L1211.6 611.0 L1213.3 609.3 L1215.0 607.6 L1216.7 605.9 L1218.4 604.3 L1220.1 602.7 L1221.8 601.1 L1223.5 599.4 L1225.2 597.9 L1226.9 596.3 L1228.6 594.7 L1230.3 593.1 L1232.0 591.6 L1233.7 590.1 L1235.4 588.6 L1237.1 587.1 L1238.8 585.6 L1240.5 584.1 L1242.2 582.6 L1243.9 581.2 L1245.6 579.8 L1247.3 578.4 L1249.0 577.0 L1250.7 575.6 L1252.4 574.2 L1254.1 572.9 L1255.8 571.5 L1257.5 570.2 L1259.2 568.9 L1260.9 567.6 L1262.6 566.3 L1264.3 565.1 L1266.0 563.8 L1267.7 562.6 L1269.4 561.4 L1271.1 560.2 L1272.8 559.0 L1274.5 557.9 L1276.2 556.7 L1277.9 555.6 L1279.6 554.5 L1281.3 553.4 L1282.9 552.3 L1284.6 551.3 L1286.3 550.2 L1288.0 549.2 L1289.7 548.2 L1291.4 547.2 L1293.1 546.2 L1294.8 545.2 L1296.5 544.3 L1298.2 543.4 L1299.9 542.4 L1301.6 541.6 L1303.3 540.7 L1305.0 539.8 L1306.7 539.0 L1308.4 538.1 L1310.1 537.3 L1311.8 536.5 L1313.5 535.7 L1315.2 534.9 L1316.9 534.2 L1318.6 533.4 L1320.3 532.7 L1322.0 532.0 L1323.7 531.3 L1325.4 530.6 L1327.1 529.9 L1328.8 529.3 L1330.5 528.6 L1332.2 528.0 L1333.9 527.4 L1335.6 526.8 L1337.3 526.2 L1339.0 525.6 L1340.7 525.1 L1342.4 524.5 L1344.1 524.0 L1345.8 523.4 L1347.5 522.9 L1349.2 522.4 L1350.9 521.9 L1352.6 521.5 L1354.3 521.0 L1356.0 520.5 L1357.7 520.1 L1359.4 519.6 L1361.1 519.2 L1362.8 518.8 L1364.5 518.4 L1366.2 518.0 L1367.9 517.6 L1369.6 517.2 L1371.3 516.9 L1373.0 516.5 L1374.7 516.2 L1376.4 515.8 L1378.1 515.5 L1379.8 515.2 L1381.5 514.9 L1383.2 514.6 L1384.9 514.3 L1386.6 514.0 L1388.3 513.7 L1389.9 513.4 L1391.6 513.1 L1393.3 512.9 L1395.0 512.6 L1396.7 512.4 L1398.4 512.1 L1400.1 511.9 L1401.8 511.7 L1403.5 511.4 L1405.2 511.2 L1406.9 511.0 L1408.6 510.8 L1410.3 510.6 L1412.0 510.4 L1413.7 510.2 L1415.4 510.0 L1417.1 509.9 L1418.8 509.7 L1420.5 509.5 L1422.2 509.3 L1423.9 509.2 L1425.6 509.0 L1427.3 508.9 L1429.0 508.7 L1430.7 508.6 L1432.4 508.4 L1434.1 508.3 L1435.8 508.2 L1437.5 508.0 L1439.2 507.9 L1440.9 507.8 L1442.6 507.7 L1444.3 507.6 L1446.0 507.4 L1447.7 507.3 L1449.4 507.2 L1451.1 507.1 L1452.8 507.0 L1454.5 506.9 L1456.2 506.8 L1457.9 506.7 L1459.6 506.6 L1461.3 506.5 L1463.0 506.5 L1464.7 506.4 L1466.4 506.3 L1468.1 506.2 L1469.8 506.1 L1471.5 506.1 L1473.2 506.0 L1474.9 505.9 L1476.6 505.8 L1478.3 505.8 L1480.0 505.7 L1481.7 505.6 L1483.4 505.6 L1485.1 505.5 L1486.8 505.4 L1488.5 505.4 L1490.2 505.3 L1491.9 505.3 L1493.6 505.2 L1495.2 505.1 L1496.9 505.1 L1498.6 505.0 L1500.3 505.0 L1502.0 504.9 L1503.7 504.9 L1505.4 504.8 L1507.1 504.8 L1508.8 504.7 L1510.5 504.7 L1512.2 504.6 L1513.9 504.6 L1515.6 504.5 L1517.3 504.5 L1519.0 504.4 L1520.7 504.4 L1522.4 504.3 L1524.1 504.3 L1525.8 504.3 L1527.5 504.2 L1529.2 504.2 L1530.9 504.1 L1532.6 504.1 L1534.3 504.0 L1536.0 504.0 L1537.7 504.0 L1539.4 503.9 L1541.1 503.9 L1542.8 503.8 L1544.5 503.8 L1546.2 503.7 L1547.9 503.7 L1549.6 503.7 L1551.3 503.6 L1553.0 503.6 L1554.7 503.5 L1556.4 503.5 L1558.1 503.4 L1559.8 503.4 L1561.5 503.3 L1563.2 503.3 L1564.9 503.2 L1566.6 503.2 L1568.3 503.1 L1570.0 503.1 L1571.7 503.0 L1573.4 503.0 L1575.1 502.9 L1576.8 502.9 L1578.5 502.8 L1580.2 502.8 L1581.9 502.7 L1583.6 502.7 L1585.3 502.6 L1587.0 502.5 L1588.7 502.5 L1590.4 502.4 L1592.1 502.4 L1593.8 502.3 L1595.5 502.2 L1597.2 502.2 L1598.9 502.1 L1600.6 502.0 L1602.2 501.9 L1603.9 501.9 L1605.6 501.8 L1607.3 501.7 L1609.0 501.6 L1610.7 501.6 L1612.4 501.5 L1614.1 501.4 L1615.8 501.3 L1617.5 501.2 L1619.2 501.1 L1620.9 501.0 L1622.6 500.9 L1624.3 500.8 L1626.0 500.7 L1627.7 500.6 L1629.4 500.5 L1631.1 500.4 L1632.8 500.3 L1634.5 500.2 L1636.2 500.0 L1637.9 499.9 L1639.6 499.8 L1641.3 499.6 L1643.0 499.5 L1644.7 499.4 L1646.4 499.2 L1648.1 499.1 L1649.8 498.9 L1651.5 498.8 L1653.2 498.6 L1654.9 498.5 L1656.6 498.3 L1658.3 498.1 L1660.0 497.9 L1661.7 497.8 L1663.4 497.6 L1665.1 497.4 L1666.8 497.2 L1668.5 497.0 L1670.2 496.8 L1671.9 496.6 L1673.6 496.3 L1675.3 496.1 L1677.0 495.9 L1678.7 495.6 L1680.4 495.4 L1682.1 495.1 L1683.8 494.9 L1685.5 494.6 L1687.2 494.4 L1688.9 494.1 L1690.6 493.8 L1692.3 493.5 L1694.0 493.2 L1695.7 492.9 L1697.4 492.6 L1699.1 492.2 L1700.8 491.9 L1702.5 491.6 L1704.2 491.2 L1705.9 490.9 L1707.5 490.5 L1709.2 490.1 L1710.9 489.7 L1712.6 489.3 L1714.3 488.9 L1716.0 488.5 L1717.7 488.1 L1719.4 487.7 L1721.1 487.2 L1722.8 486.8 L1724.5 486.3 L1726.2 485.8 L1727.9 485.3 L1729.6 484.8 L1731.3 484.3 L1733.0 483.8 L1734.7 483.3 L1736.4 482.7 L1738.1 482.2 L1739.8 481.6 L1741.5 481.0 L1743.2 480.4 L1744.9 479.8 L1746.6 479.2 L1748.3 478.6 L1750.0 477.9 L1751.7 477.3 L1753.4 476.6 L1755.1 475.9 L1756.8 475.2 L1758.5 474.5 L1760.2 473.8 L1761.9 473.0 L1763.6 472.3 L1765.3 471.5 L1767.0 470.7 L1768.7 469.9 L1770.4 469.1 L1772.1 468.3 L1773.8 467.5 L1775.5 466.6 L1777.2 465.7 L1778.9 464.9 L1780.6 464.0 L1782.3 463.1 L1784.0 462.1 L1785.7 461.2 L1787.4 460.3 L1789.1 459.3 L1790.8 458.3 L1792.5 457.3 L1794.2 456.3 L1795.9 455.3 L1797.6 454.3 L1799.3 453.2 L1801.0 452.2 L1802.7 451.1 L1804.4 450.0 L1806.1 448.9 L1807.8 447.8 L1809.5 446.7 L1811.2 445.5 L1812.8 444.4 L1814.5 443.2 L1816.2 442.0 L1817.9 440.8 L1819.6 439.6 L1821.3 438.4 L1823.0 437.2 L1824.7 436.0 L1826.4 434.7 L1828.1 433.5 L1829.8 432.2 L1831.5 431.0 L1833.2 429.7 L1834.9 428.4 L1836.6 427.1 L1838.3 425.8 L1840.0 424.4 L1841.7 423.1 L1843.4 421.8 L1845.1 420.4 L1846.8 419.1 L1848.5 417.7 L1850.2 416.4 L1851.9 415.0 L1853.6 413.6 L1855.3 412.2 L1857.0 410.8 L1858.7 409.5 L1860.4 408.1 L1862.1 406.7 L1863.8 405.3 L1865.5 403.8"/><path d="M1018.0 898.2 L1019.7 896.1 L1021.4 893.9 L1023.1 891.8 L1024.8 889.6 L1026.5 887.5 L1028.2 885.3 L1029.9 883.2 L1031.6 881.0 L1033.3 878.9 L1035.0 876.7 L1036.7 874.6 L1038.4 872.4 L1040.1 870.3 L1041.8 868.2 L1043.5 866.0 L1045.2 863.9 L1046.9 861.7 L1048.6 859.6 L1050.3 857.5 L1052.0 855.3 L1053.7 853.2 L1055.4 851.1 L1057.1 848.9 L1058.8 846.8 L1060.5 844.7 L1062.2 842.5 L1063.9 840.4 L1065.6 838.3 L1067.3 836.1 L1069.0 834.0 L1070.7 831.9 L1072.3 829.8 L1074.0 827.7 L1075.7 825.5 L1077.4 823.4 L1079.1 821.3 L1080.8 819.2 L1082.5 817.1 L1084.2 814.9 L1085.9 812.8 L1087.6 810.7 L1089.3 808.6 L1091.0 806.5 L1092.7 804.4 L1094.4 802.3 L1096.1 800.2 L1097.8 798.1 L1099.5 796.0 L1101.2 793.9 L1102.9 791.8 L1104.6 789.7 L1106.3 787.6 L1108.0 785.5 L1109.7 783.5 L1111.4 781.4 L1113.1 779.3 L1114.8 777.2 L1116.5 775.1 L1118.2 773.1 L1119.9 771.0 L1121.6 768.9 L1123.3 766.9 L1125.0 764.8 L1126.7 762.7 L1128.4 760.7 L1130.1 758.6 L1131.8 756.6 L1133.5 754.5 L1135.2 752.5 L1136.9 750.5 L1138.6 748.4 L1140.3 746.4 L1142.0 744.4 L1143.7 742.4 L1145.4 740.3 L1147.1 738.3 L1148.8 736.3 L1150.5 734.3 L1152.2 732.3 L1153.9 730.3 L1155.6 728.3 L1157.3 726.3 L1159.0 724.4 L1160.7 722.4 L1162.4 720.4 L1164.1 718.5 L1165.8 716.5 L1167.5 714.5 L1169.2 712.6 L1170.9 710.7 L1172.6 708.7 L1174.3 706.8 L1176.0 704.9 L1177.6 703.0 L1179.3 701.0 L1181.0 699.1 L1182.7 697.3 L1184.4 695.4 L1186.1 693.5 L1187.8 691.6 L1189.5 689.8 L1191.2 687.9 L1192.9 686.1 L1194.6 684.2 L1196.3 682.4 L1198.0 680.6 L1199.7 678.7 L1201.4 676.9 L1203.1 675.1 L1204.8 673.4 L1206.5 671.6 L1208.2 669.8 L1209.9 668.1 L1211.6 666.3 L1213.3 664.6 L1215.0 662.9 L1216.7 661.2 L1218.4 659.4 L1220.1 657.8 L1221.8 656.1 L1223.5 654.4 L1225.2 652.8 L1226.9 651.1 L1228.6 649.5 L1230.3 647.9 L1232.0 646.2 L1233.7 644.7 L1235.4 643.1 L1237.1 641.5 L1238.8 639.9 L1240.5 638.4 L1242.2 636.9 L1243.9 635.4 L1245.6 633.9 L1247.3 632.4 L1249.0 630.9 L1250.7 629.4 L1252.4 628.0 L1254.1 626.6 L1255.8 625.2 L1257.5 623.8 L1259.2 622.4 L1260.9 621.0 L1262.6 619.7 L1264.3 618.3 L1266.0 617.0 L1267.7 615.7 L1269.4 614.4 L1271.1 613.1 L1272.8 611.9 L1274.5 610.6 L1276.2 609.4 L1277.9 608.2 L1279.6 607.0 L1281.3 605.8 L1282.9 604.7 L1284.6 603.5 L1286.3 602.4 L1288.0 601.3 L1289.7 600.2 L1291.4 599.1 L1293.1 598.0 L1294.8 597.0 L1296.5 596.0 L1298.2 595.0 L1299.9 594.0 L1301.6 593.0 L1303.3 592.0 L1305.0 591.1 L1306.7 590.1 L1308.4 589.2 L1310.1 588.3 L1311.8 587.4 L1313.5 586.6 L1315.2 585.7 L1316.9 584.9 L1318.6 584.1 L1320.3 583.3 L1322.0 582.5 L1323.7 581.7 L1325.4 580.9 L1327.1 580.2 L1328.8 579.5 L1330.5 578.8 L1332.2 578.1 L1333.9 577.4 L1335.6 576.7 L1337.3 576.0 L1339.0 575.4 L1340.7 574.8 L1342.4 574.1 L1344.1 573.5 L1345.8 573.0 L1347.5 572.4 L1349.2 571.8 L1350.9 571.3 L1352.6 570.7 L1354.3 570.2 L1356.0 569.7 L1357.7 569.2 L1359.4 568.7 L1361.1 568.2 L1362.8 567.7 L1364.5 567.3 L1366.2 566.8 L1367.9 566.4 L1369.6 566.0 L1371.3 565.5 L1373.0 565.1 L1374.7 564.7 L1376.4 564.4 L1378.1 564.0 L1379.8 563.6 L1381.5 563.3 L1383.2 562.9 L1384.9 562.6 L1386.6 562.2 L1388.3 561.9 L1389.9 561.6 L1391.6 561.3 L1393.3 561.0 L1395.0 560.7 L1396.7 560.4 L1398.4 560.1 L1400.1 559.9 L1401.8 559.6 L1403.5 559.3 L1405.2 559.1 L1406.9 558.9 L1408.6 558.6 L1410.3 558.4 L1412.0 558.2 L1413.7 557.9 L1415.4 557.7 L1417.1 557.5 L1418.8 557.3 L1420.5 557.1 L1422.2 556.9 L1423.9 556.7 L1425.6 556.6 L1427.3 556.4 L1429.0 556.2 L1430.7 556.0 L1432.4 555.9 L1434.1 555.7 L1435.8 555.6 L1437.5 555.4 L1439.2 555.3 L1440.9 555.1 L1442.6 555.0 L1444.3 554.9 L1446.0 554.7 L1447.7 554.6 L1449.4 554.5 L1451.1 554.3 L1452.8 554.2 L1454.5 554.1 L1456.2 554.0 L1457.9 553.9 L1459.6 553.8 L1461.3 553.7 L1463.0 553.6 L1464.7 553.5 L1466.4 553.4 L1468.1 553.3 L1469.8 553.2 L1471.5 553.1 L1473.2 553.0 L1474.9 552.9 L1476.6 552.8 L1478.3 552.8 L1480.0 552.7 L1481.7 552.6 L1483.4 552.5 L1485.1 552.4 L1486.8 552.4 L1488.5 552.3 L1490.2 552.2 L1491.9 552.2 L1493.6 552.1 L1495.2 552.0 L1496.9 552.0 L1498.6 551.9 L1500.3 551.8 L1502.0 551.8 L1503.7 551.7 L1505.4 551.6 L1507.1 551.6 L1508.8 551.5 L1510.5 551.5 L1512.2 551.4 L1513.9 551.4 L1515.6 551.3 L1517.3 551.2 L1519.0 551.2 L1520.7 551.1 L1522.4 551.1 L1524.1 551.0 L1525.8 551.0 L1527.5 550.9 L1529.2 550.9 L1530.9 550.8 L1532.6 550.7 L1534.3 550.7 L1536.0 550.6 L1537.7 550.6 L1539.4 550.5 L1541.1 550.5 L1542.8 550.4 L1544.5 550.4 L1546.2 550.3 L1547.9 550.3 L1549.6 550.2 L1551.3 550.1 L1553.0 550.1 L1554.7 550.0 L1556.4 550.0 L1558.1 549.9 L1559.8 549.9 L1561.5 549.8 L1563.2 549.7 L1564.9 549.7 L1566.6 549.6 L1568.3 549.6 L1570.0 549.5 L1571.7 549.4 L1573.4 549.4 L1575.1 549.3 L1576.8 549.2 L1578.5 549.2 L1580.2 549.1 L1581.9 549.0 L1583.6 548.9 L1585.3 548.9 L1587.0 548.8 L1588.7 548.7 L1590.4 548.6 L1592.1 548.5 L1593.8 548.5 L1595.5 548.4 L1597.2 548.3 L1598.9 548.2 L1600.6 548.1 L1602.2 548.0 L1603.9 547.9 L1605.6 547.8 L1607.3 547.7 L1609.0 547.6 L1610.7 547.5 L1612.4 547.4 L1614.1 547.3 L1615.8 547.1 L1617.5 547.0 L1619.2 546.9 L1620.9 546.8 L1622.6 546.7 L1624.3 546.5 L1626.0 546.4 L1627.7 546.2 L1629.4 546.1 L1631.1 546.0 L1632.8 545.8 L1634.5 545.7 L1636.2 545.5 L1637.9 545.3 L1639.6 545.2 L1641.3 545.0 L1643.0 544.8 L1644.7 544.6 L1646.4 544.4 L1648.1 544.3 L1649.8 544.1 L1651.5 543.9 L1653.2 543.6 L1654.9 543.4 L1656.6 543.2 L1658.3 543.0 L1660.0 542.8 L1661.7 542.5 L1663.4 542.3 L1665.1 542.0 L1666.8 541.8 L1668.5 541.5 L1670.2 541.2 L1671.9 541.0 L1673.6 540.7 L1675.3 540.4 L1677.0 540.1 L1678.7 539.8 L1680.4 539.5 L1682.1 539.1 L1683.8 538.8 L1685.5 538.5 L1687.2 538.1 L1688.9 537.8 L1690.6 537.4 L1692.3 537.0 L1694.0 536.6 L1695.7 536.3 L1697.4 535.8 L1699.1 535.4 L1700.8 535.0 L1702.5 534.6 L1704.2 534.1 L1705.9 533.7 L1707.5 533.2 L1709.2 532.7 L1710.9 532.2 L1712.6 531.7 L1714.3 531.2 L1716.0 530.7 L1717.7 530.2 L1719.4 529.6 L1721.1 529.1 L1722.8 528.5 L1724.5 527.9 L1726.2 527.3 L1727.9 526.7 L1729.6 526.1 L1731.3 525.5 L1733.0 524.8 L1734.7 524.1 L1736.4 523.5 L1738.1 522.8 L1739.8 522.1 L1741.5 521.4 L1743.2 520.6 L1744.9 519.9 L1746.6 519.1 L1748.3 518.3 L1750.0 517.6 L1751.7 516.7 L1753.4 515.9 L1755.1 515.1 L1756.8 514.2 L1758.5 513.4 L1760.2 512.5 L1761.9 511.6 L1763.6 510.7 L1765.3 509.8 L1767.0 508.8 L1768.7 507.9 L1770.4 506.9 L1772.1 505.9 L1773.8 504.9 L1775.5 503.9 L1777.2 502.9 L1778.9 501.8 L1780.6 500.8 L1782.3 499.7 L1784.0 498.6 L1785.7 497.5 L1787.4 496.4 L1789.1 495.3 L1790.8 494.1 L1792.5 492.9 L1794.2 491.8 L1795.9 490.6 L1797.6 489.4 L1799.3 488.1 L1801.0 486.9 L1802.7 485.7 L1804.4 484.4 L1806.1 483.1 L1807.8 481.8 L1809.5 480.5 L1811.2 479.2 L1812.8 477.9 L1814.5 476.6 L1816.2 475.2 L1817.9 473.8 L1819.6 472.5 L1821.3 471.1 L1823.0 469.7 L1824.7 468.3 L1826.4 466.9 L1828.1 465.4 L1829.8 464.0 L1831.5 462.6 L1833.2 461.1 L1834.9 459.6 L1836.6 458.2 L1838.3 456.7 L1840.0 455.2 L1841.7 453.7 L1843.4 452.2 L1845.1 450.6 L1846.8 449.1 L1848.5 447.6 L1850.2 446.0 L1851.9 444.5 L1853.6 443.0 L1855.3 441.4 L1857.0 439.8 L1858.7 438.3 L1860.4 436.7 L1862.1 435.1 L1863.8 433.5 L1865.5 432.0"/><path d="M1018.0 996.6 L1019.7 994.5 L1021.4 992.3 L1023.1 990.2 L1024.8 988.0 L1026.5 985.9 L1028.2 983.7 L1029.9 981.6 L1031.6 979.4 L1033.3 977.3 L1035.0 975.1 L1036.7 973.0 L1038.4 970.8 L1040.1 968.7 L1041.8 966.5 L1043.5 964.4 L1045.2 962.3 L1046.9 960.1 L1048.6 958.0 L1050.3 955.8 L1052.0 953.7 L1053.7 951.5 L1055.4 949.4 L1057.1 947.3 L1058.8 945.1 L1060.5 943.0 L1062.2 940.8 L1063.9 938.7 L1065.6 936.6 L1067.3 934.4 L1069.0 932.3 L1070.7 930.2 L1072.3 928.0 L1074.0 925.9 L1075.7 923.8 L1077.4 921.6 L1079.1 919.5 L1080.8 917.4 L1082.5 915.3 L1084.2 913.1 L1085.9 911.0 L1087.6 908.9 L1089.3 906.8 L1091.0 904.6 L1092.7 902.5 L1094.4 900.4 L1096.1 898.3 L1097.8 896.2 L1099.5 894.1 L1101.2 892.0 L1102.9 889.9 L1104.6 887.7 L1106.3 885.6 L1108.0 883.5 L1109.7 881.4 L1111.4 879.3 L1113.1 877.2 L1114.8 875.1 L1116.5 873.1 L1118.2 871.0 L1119.9 868.9 L1121.6 866.8 L1123.3 864.7 L1125.0 862.6 L1126.7 860.5 L1128.4 858.5 L1130.1 856.4 L1131.8 854.3 L1133.5 852.2 L1135.2 850.2 L1136.9 848.1 L1138.6 846.1 L1140.3 844.0 L1142.0 841.9 L1143.7 839.9 L1145.4 837.8 L1147.1 835.8 L1148.8 833.8 L1150.5 831.7 L1152.2 829.7 L1153.9 827.7 L1155.6 825.6 L1157.3 823.6 L1159.0 821.6 L1160.7 819.6 L1162.4 817.6 L1164.1 815.6 L1165.8 813.6 L1167.5 811.6 L1169.2 809.6 L1170.9 807.6 L1172.6 805.6 L1174.3 803.7 L1176.0 801.7 L1177.6 799.7 L1179.3 797.8 L1181.0 795.8 L1182.7 793.9 L1184.4 791.9 L1186.1 790.0 L1187.8 788.1 L1189.5 786.2 L1191.2 784.2 L1192.9 782.3 L1194.6 780.4 L1196.3 778.5 L1198.0 776.7 L1199.7 774.8 L1201.4 772.9 L1203.1 771.1 L1204.8 769.2 L1206.5 767.4 L1208.2 765.5 L1209.9 763.7 L1211.6 761.9 L1213.3 760.1 L1215.0 758.3 L1216.7 756.5 L1218.4 754.7 L1220.1 752.9 L1221.8 751.1 L1223.5 749.4 L1225.2 747.7 L1226.9 745.9 L1228.6 744.2 L1230.3 742.5 L1232.0 740.8 L1233.7 739.1 L1235.4 737.4 L1237.1 735.8 L1238.8 734.1 L1240.5 732.5 L1242.2 730.8 L1243.9 729.2 L1245.6 727.6 L1247.3 726.0 L1249.0 724.4 L1250.7 722.9 L1252.4 721.3 L1254.1 719.8 L1255.8 718.3 L1257.5 716.7 L1259.2 715.3 L1260.9 713.8 L1262.6 712.3 L1264.3 710.8 L1266.0 709.4 L1267.7 708.0 L1269.4 706.6 L1271.1 705.2 L1272.8 703.8 L1274.5 702.4 L1276.2 701.1 L1277.9 699.7 L1279.6 698.4 L1281.3 697.1 L1282.9 695.8 L1284.6 694.6 L1286.3 693.3 L1288.0 692.1 L1289.7 690.9 L1291.4 689.6 L1293.1 688.5 L1294.8 687.3 L1296.5 686.1 L1298.2 685.0 L1299.9 683.9 L1301.6 682.8 L1303.3 681.7 L1305.0 680.6 L1306.7 679.5 L1308.4 678.5 L1310.1 677.5 L1311.8 676.5 L1313.5 675.5 L1315.2 674.5 L1316.9 673.5 L1318.6 672.6 L1320.3 671.7 L1322.0 670.7 L1323.7 669.9 L1325.4 669.0 L1327.1 668.1 L1328.8 667.3 L1330.5 666.4 L1332.2 665.6 L1333.9 664.8 L1335.6 664.0 L1337.3 663.3 L1339.0 662.5 L1340.7 661.8 L1342.4 661.0 L1344.1 660.3 L1345.8 659.6 L1347.5 658.9 L1349.2 658.3 L1350.9 657.6 L1352.6 657.0 L1354.3 656.3 L1356.0 655.7 L1357.7 655.1 L1359.4 654.5 L1361.1 654.0 L1362.8 653.4 L1364.5 652.9 L1366.2 652.3 L1367.9 651.8 L1369.6 651.3 L1371.3 650.8 L1373.0 650.3 L1374.7 649.8 L1376.4 649.3 L1378.1 648.9 L1379.8 648.4 L1381.5 648.0 L1383.2 647.6 L1384.9 647.2 L1386.6 646.8 L1388.3 646.4 L1389.9 646.0 L1391.6 645.6 L1393.3 645.2 L1395.0 644.9 L1396.7 644.5 L1398.4 644.2 L1400.1 643.9 L1401.8 643.5 L1403.5 643.2 L1405.2 642.9 L1406.9 642.6 L1408.6 642.3 L1410.3 642.0 L1412.0 641.8 L1413.7 641.5 L1415.4 641.2 L1417.1 641.0 L1418.8 640.7 L1420.5 640.5 L1422.2 640.3 L1423.9 640.0 L1425.6 639.8 L1427.3 639.6 L1429.0 639.4 L1430.7 639.2 L1432.4 639.0 L1434.1 638.8 L1435.8 638.6 L1437.5 638.4 L1439.2 638.2 L1440.9 638.0 L1442.6 637.8 L1444.3 637.7 L1446.0 637.5 L1447.7 637.3 L1449.4 637.2 L1451.1 637.0 L1452.8 636.9 L1454.5 636.7 L1456.2 636.6 L1457.9 636.5 L1459.6 636.3 L1461.3 636.2 L1463.0 636.1 L1464.7 635.9 L1466.4 635.8 L1468.1 635.7 L1469.8 635.6 L1471.5 635.5 L1473.2 635.4 L1474.9 635.3 L1476.6 635.2 L1478.3 635.0 L1480.0 634.9 L1481.7 634.8 L1483.4 634.7 L1485.1 634.7 L1486.8 634.6 L1488.5 634.5 L1490.2 634.4 L1491.9 634.3 L1493.6 634.2 L1495.2 634.1 L1496.9 634.0 L1498.6 634.0 L1500.3 633.9 L1502.0 633.8 L1503.7 633.7 L1505.4 633.6 L1507.1 633.6 L1508.8 633.5 L1510.5 633.4 L1512.2 633.3 L1513.9 633.3 L1515.6 633.2 L1517.3 633.1 L1519.0 633.1 L1520.7 633.0 L1522.4 632.9 L1524.1 632.8 L1525.8 632.8 L1527.5 632.7 L1529.2 632.6 L1530.9 632.6 L1532.6 632.5 L1534.3 632.4 L1536.0 632.4 L1537.7 632.3 L1539.4 632.2 L1541.1 632.2 L1542.8 632.1 L1544.5 632.0 L1546.2 631.9 L1547.9 631.9 L1549.6 631.8 L1551.3 631.7 L1553.0 631.7 L1554.7 631.6 L1556.4 631.5 L1558.1 631.4 L1559.8 631.4 L1561.5 631.3 L1563.2 631.2 L1564.9 631.1 L1566.6 631.1 L1568.3 631.0 L1570.0 630.9 L1571.7 630.8 L1573.4 630.7 L1575.1 630.6 L1576.8 630.6 L1578.5 630.5 L1580.2 630.4 L1581.9 630.3 L1583.6 630.2 L1585.3 630.1 L1587.0 630.0 L1588.7 629.9 L1590.4 629.8 L1592.1 629.7 L1593.8 629.6 L1595.5 629.5 L1597.2 629.4 L1598.9 629.2 L1600.6 629.1 L1602.2 629.0 L1603.9 628.9 L1605.6 628.7 L1607.3 628.6 L1609.0 628.5 L1610.7 628.3 L1612.4 628.2 L1614.1 628.1 L1615.8 627.9 L1617.5 627.8 L1619.2 627.6 L1620.9 627.5 L1622.6 627.3 L1624.3 627.1 L1626.0 627.0 L1627.7 626.8 L1629.4 626.6 L1631.1 626.4 L1632.8 626.2 L1634.5 626.0 L1636.2 625.8 L1637.9 625.6 L1639.6 625.4 L1641.3 625.2 L1643.0 625.0 L1644.7 624.7 L1646.4 624.5 L1648.1 624.3 L1649.8 624.0 L1651.5 623.8 L1653.2 623.5 L1654.9 623.2 L1656.6 623.0 L1658.3 622.7 L1660.0 622.4 L1661.7 622.1 L1663.4 621.8 L1665.1 621.5 L1666.8 621.2 L1668.5 620.8 L1670.2 620.5 L1671.9 620.2 L1673.6 619.8 L1675.3 619.4 L1677.0 619.1 L1678.7 618.7 L1680.4 618.3 L1682.1 617.9 L1683.8 617.5 L1685.5 617.1 L1687.2 616.6 L1688.9 616.2 L1690.6 615.7 L1692.3 615.3 L1694.0 614.8 L1695.7 614.3 L1697.4 613.8 L1699.1 613.3 L1700.8 612.8 L1702.5 612.3 L1704.2 611.7 L1705.9 611.2 L1707.5 610.6 L1709.2 610.0 L1710.9 609.4 L1712.6 608.8 L1714.3 608.2 L1716.0 607.6 L1717.7 606.9 L1719.4 606.3 L1721.1 605.6 L1722.8 604.9 L1724.5 604.2 L1726.2 603.5 L1727.9 602.8 L1729.6 602.0 L1731.3 601.2 L1733.0 600.5 L1734.7 599.7 L1736.4 598.9 L1738.1 598.1 L1739.8 597.2 L1741.5 596.4 L1743.2 595.5 L1744.9 594.6 L1746.6 593.7 L1748.3 592.8 L1750.0 591.9 L1751.7 590.9 L1753.4 590.0 L1755.1 589.0 L1756.8 588.0 L1758.5 587.0 L1760.2 586.0 L1761.9 584.9 L1763.6 583.9 L1765.3 582.8 L1767.0 581.7 L1768.7 580.6 L1770.4 579.5 L1772.1 578.3 L1773.8 577.2 L1775.5 576.0 L1777.2 574.8 L1778.9 573.6 L1780.6 572.4 L1782.3 571.2 L1784.0 569.9 L1785.7 568.7 L1787.4 567.4 L1789.1 566.1 L1790.8 564.8 L1792.5 563.5 L1794.2 562.1 L1795.9 560.8 L1797.6 559.4 L1799.3 558.0 L1801.0 556.6 L1802.7 555.2 L1804.4 553.8 L1806.1 552.4 L1807.8 550.9 L1809.5 549.5 L1811.2 548.0 L1812.8 546.5 L1814.5 545.0 L1816.2 543.5 L1817.9 542.0 L1819.6 540.4 L1821.3 538.9 L1823.0 537.3 L1824.7 535.7 L1826.4 534.2 L1828.1 532.6 L1829.8 531.0 L1831.5 529.3 L1833.2 527.7 L1834.9 526.1 L1836.6 524.4 L1838.3 522.8 L1840.0 521.1 L1841.7 519.4 L1843.4 517.8 L1845.1 516.1 L1846.8 514.4 L1848.5 512.7 L1850.2 511.0 L1851.9 509.2 L1853.6 507.5 L1855.3 505.8 L1857.0 504.0 L1858.7 502.3 L1860.4 500.5 L1862.1 498.8 L1863.8 497.0 L1865.5 495.2"/><path d="M1018.0 1095.1 L1019.7 1093.0 L1021.4 1090.8 L1023.1 1088.7 L1024.8 1086.5 L1026.5 1084.4 L1028.2 1082.2 L1029.9 1080.1 L1031.6 1077.9 L1033.3 1075.8 L1035.0 1073.6 L1036.7 1071.5 L1038.4 1069.3 L1040.1 1067.2 L1041.8 1065.0 L1043.5 1062.9 L1045.2 1060.7 L1046.9 1058.6 L1048.6 1056.4 L1050.3 1054.3 L1052.0 1052.1 L1053.7 1050.0 L1055.4 1047.8 L1057.1 1045.7 L1058.8 1043.5 L1060.5 1041.4 L1062.2 1039.3 L1063.9 1037.1 L1065.6 1035.0 L1067.3 1032.8 L1069.0 1030.7 L1070.7 1028.6 L1072.3 1026.4 L1074.0 1024.3 L1075.7 1022.2 L1077.4 1020.0 L1079.1 1017.9 L1080.8 1015.8 L1082.5 1013.6 L1084.2 1011.5 L1085.9 1009.4 L1087.6 1007.2 L1089.3 1005.1 L1091.0 1003.0 L1092.7 1000.9 L1094.4 998.7 L1096.1 996.6 L1097.8 994.5 L1099.5 992.4 L1101.2 990.2 L1102.9 988.1 L1104.6 986.0 L1106.3 983.9 L1108.0 981.8 L1109.7 979.7 L1111.4 977.6 L1113.1 975.5 L1114.8 973.4 L1116.5 971.3 L1118.2 969.2 L1119.9 967.1 L1121.6 965.0 L1123.3 962.9 L1125.0 960.8 L1126.7 958.7 L1128.4 956.6 L1130.1 954.5 L1131.8 952.4 L1133.5 950.3 L1135.2 948.2 L1136.9 946.2 L1138.6 944.1 L1140.3 942.0 L1142.0 940.0 L1143.7 937.9 L1145.4 935.8 L1147.1 933.8 L1148.8 931.7 L1150.5 929.7 L1152.2 927.6 L1153.9 925.6 L1155.6 923.5 L1157.3 921.5 L1159.0 919.4 L1160.7 917.4 L1162.4 915.4 L1164.1 913.3 L1165.8 911.3 L1167.5 909.3 L1169.2 907.3 L1170.9 905.3 L1172.6 903.3 L1174.3 901.3 L1176.0 899.3 L1177.6 897.3 L1179.3 895.3 L1181.0 893.3 L1182.7 891.4 L1184.4 889.4 L1186.1 887.4 L1187.8 885.5 L1189.5 883.5 L1191.2 881.6 L1192.9 879.6 L1194.6 877.7 L1196.3 875.8 L1198.0 873.8 L1199.7 871.9 L1201.4 870.0 L1203.1 868.1 L1204.8 866.2 L1206.5 864.3 L1208.2 862.5 L1209.9 860.6 L1211.6 858.7 L1213.3 856.9 L1215.0 855.0 L1216.7 853.2 L1218.4 851.4 L1220.1 849.5 L1221.8 847.7 L1223.5 845.9 L1225.2 844.1 L1226.9 842.3 L1228.6 840.6 L1230.3 838.8 L1232.0 837.0 L1233.7 835.3 L1235.4 833.6 L1237.1 831.8 L1238.8 830.1 L1240.5 828.4 L1242.2 826.7 L1243.9 825.1 L1245.6 823.4 L1247.3 821.7 L1249.0 820.1 L1250.7 818.5 L1252.4 816.8 L1254.1 815.2 L1255.8 813.6 L1257.5 812.1 L1259.2 810.5 L1260.9 808.9 L1262.6 807.4 L1264.3 805.9 L1266.0 804.3 L1267.7 802.8 L1269.4 801.4 L1271.1 799.9 L1272.8 798.4 L1274.5 797.0 L1276.2 795.6 L1277.9 794.1 L1279.6 792.7 L1281.3 791.4 L1282.9 790.0 L1284.6 788.6 L1286.3 787.3 L1288.0 786.0 L1289.7 784.7 L1291.4 783.4 L1293.1 782.1 L1294.8 780.9 L1296.5 779.6 L1298.2 778.4 L1299.9 777.2 L1301.6 776.0 L1303.3 774.8 L1305.0 773.7 L1306.7 772.5 L1308.4 771.4 L1310.1 770.3 L1311.8 769.2 L1313.5 768.1 L1315.2 767.0 L1316.9 766.0 L1318.6 765.0 L1320.3 764.0 L1322.0 763.0 L1323.7 762.0 L1325.4 761.0 L1327.1 760.1 L1328.8 759.1 L1330.5 758.2 L1332.2 757.3 L1333.9 756.4 L1335.6 755.6 L1337.3 754.7 L1339.0 753.9 L1340.7 753.1 L1342.4 752.3 L1344.1 751.5 L1345.8 750.7 L1347.5 749.9 L1349.2 749.2 L1350.9 748.5 L1352.6 747.8 L1354.3 747.1 L1356.0 746.4 L1357.7 745.7 L1359.4 745.0 L1361.1 744.4 L1362.8 743.8 L1364.5 743.1 L1366.2 742.5 L1367.9 742.0 L1369.6 741.4 L1371.3 740.8 L1373.0 740.3 L1374.7 739.7 L1376.4 739.2 L1378.1 738.7 L1379.8 738.2 L1381.5 737.7 L1383.2 737.2 L1384.9 736.7 L1386.6 736.3 L1388.3 735.8 L1389.9 735.4 L1391.6 735.0 L1393.3 734.5 L1395.0 734.1 L1396.7 733.7 L1398.4 733.3 L1400.1 733.0 L1401.8 732.6 L1403.5 732.2 L1405.2 731.9 L1406.9 731.5 L1408.6 731.2 L1410.3 730.9 L1412.0 730.6 L1413.7 730.3 L1415.4 730.0 L1417.1 729.7 L1418.8 729.4 L1420.5 729.1 L1422.2 728.8 L1423.9 728.6 L1425.6 728.3 L1427.3 728.0 L1429.0 727.8 L1430.7 727.6 L1432.4 727.3 L1434.1 727.1 L1435.8 726.9 L1437.5 726.7 L1439.2 726.4 L1440.9 726.2 L1442.6 726.0 L1444.3 725.8 L1446.0 725.7 L1447.7 725.5 L1449.4 725.3 L1451.1 725.1 L1452.8 724.9 L1454.5 724.8 L1456.2 724.6 L1457.9 724.5 L1459.6 724.3 L1461.3 724.1 L1463.0 724.0 L1464.7 723.9 L1466.4 723.7 L1468.1 723.6 L1469.8 723.4 L1471.5 723.3 L1473.2 723.2 L1474.9 723.1 L1476.6 722.9 L1478.3 722.8 L1480.0 722.7 L1481.7 722.6 L1483.4 722.5 L1485.1 722.4 L1486.8 722.2 L1488.5 722.1 L1490.2 722.0 L1491.9 721.9 L1493.6 721.8 L1495.2 721.7 L1496.9 721.6 L1498.6 721.5 L1500.3 721.5 L1502.0 721.4 L1503.7 721.3 L1505.4 721.2 L1507.1 721.1 L1508.8 721.0 L1510.5 720.9 L1512.2 720.8 L1513.9 720.7 L1515.6 720.7 L1517.3 720.6 L1519.0 720.5 L1520.7 720.4 L1522.4 720.3 L1524.1 720.3 L1525.8 720.2 L1527.5 720.1 L1529.2 720.0 L1530.9 719.9 L1532.6 719.9 L1534.3 719.8 L1536.0 719.7 L1537.7 719.6 L1539.4 719.6 L1541.1 719.5 L1542.8 719.4 L1544.5 719.3 L1546.2 719.2 L1547.9 719.2 L1549.6 719.1 L1551.3 719.0 L1553.0 718.9 L1554.7 718.8 L1556.4 718.8 L1558.1 718.7 L1559.8 718.6 L1561.5 718.5 L1563.2 718.4 L1564.9 718.3 L1566.6 718.2 L1568.3 718.1 L1570.0 718.1 L1571.7 718.0 L1573.4 717.9 L1575.1 717.8 L1576.8 717.7 L1578.5 717.6 L1580.2 717.5 L1581.9 717.4 L1583.6 717.3 L1585.3 717.1 L1587.0 717.0 L1588.7 716.9 L1590.4 716.8 L1592.1 716.7 L1593.8 716.6 L1595.5 716.4 L1597.2 716.3 L1598.9 716.2 L1600.6 716.1 L1602.2 715.9 L1603.9 715.8 L1605.6 715.6 L1607.3 715.5 L1609.0 715.3 L1610.7 715.2 L1612.4 715.0 L1614.1 714.9 L1615.8 714.7 L1617.5 714.5 L1619.2 714.4 L1620.9 714.2 L1622.6 714.0 L1624.3 713.8 L1626.0 713.6 L1627.7 713.4 L1629.4 713.2 L1631.1 713.0 L1632.8 712.8 L1634.5 712.6 L1636.2 712.4 L1637.9 712.2 L1639.6 711.9 L1641.3 711.7 L1643.0 711.4 L1644.7 711.2 L1646.4 710.9 L1648.1 710.7 L1649.8 710.4 L1651.5 710.1 L1653.2 709.8 L1654.9 709.5 L1656.6 709.2 L1658.3 708.9 L1660.0 708.6 L1661.7 708.3 L1663.4 707.9 L1665.1 707.6 L1666.8 707.2 L1668.5 706.9 L1670.2 706.5 L1671.9 706.1 L1673.6 705.7 L1675.3 705.3 L1677.0 704.9 L1678.7 704.5 L1680.4 704.1 L1682.1 703.6 L1683.8 703.2 L1685.5 702.7 L1687.2 702.3 L1688.9 701.8 L1690.6 701.3 L1692.3 700.8 L1694.0 700.3 L1695.7 699.7 L1697.4 699.2 L1699.1 698.6 L1700.8 698.1 L1702.5 697.5 L1704.2 696.9 L1705.9 696.3 L1707.5 695.7 L1709.2 695.0 L1710.9 694.4 L1712.6 693.7 L1714.3 693.1 L1716.0 692.4 L1717.7 691.7 L1719.4 691.0 L1721.1 690.2 L1722.8 689.5 L1724.5 688.7 L1726.2 687.9 L1727.9 687.1 L1729.6 686.3 L1731.3 685.5 L1733.0 684.7 L1734.7 683.8 L1736.4 683.0 L1738.1 682.1 L1739.8 681.2 L1741.5 680.3 L1743.2 679.3 L1744.9 678.4 L1746.6 677.4 L1748.3 676.4 L1750.0 675.5 L1751.7 674.4 L1753.4 673.4 L1755.1 672.4 L1756.8 671.3 L1758.5 670.2 L1760.2 669.1 L1761.9 668.0 L1763.6 666.9 L1765.3 665.8 L1767.0 664.6 L1768.7 663.4 L1770.4 662.2 L1772.1 661.0 L1773.8 659.8 L1775.5 658.6 L1777.2 657.3 L1778.9 656.0 L1780.6 654.7 L1782.3 653.4 L1784.0 652.1 L1785.7 650.8 L1787.4 649.4 L1789.1 648.1 L1790.8 646.7 L1792.5 645.3 L1794.2 643.9 L1795.9 642.5 L1797.6 641.0 L1799.3 639.6 L1801.0 638.1 L1802.7 636.6 L1804.4 635.1 L1806.1 633.6 L1807.8 632.1 L1809.5 630.6 L1811.2 629.0 L1812.8 627.5 L1814.5 625.9 L1816.2 624.3 L1817.9 622.7 L1819.6 621.1 L1821.3 619.5 L1823.0 617.9 L1824.7 616.2 L1826.4 614.6 L1828.1 612.9 L1829.8 611.2 L1831.5 609.5 L1833.2 607.8 L1834.9 606.1 L1836.6 604.4 L1838.3 602.7 L1840.0 600.9 L1841.7 599.2 L1843.4 597.4 L1845.1 595.7 L1846.8 593.9 L1848.5 592.1 L1850.2 590.3 L1851.9 588.5 L1853.6 586.7 L1855.3 584.9 L1857.0 583.1 L1858.7 581.2 L1860.4 579.4 L1862.1 577.6 L1863.8 575.7 L1865.5 573.8"/></g><text x="1014.5" y="235.5" font-size="13.2" fill="#0000ff" text-anchor="end">3.00</text><text x="1014.5" y="284.6090909090909" font-size="13.2" fill="#0000ff" text-anchor="end">0.00</text><text x="1014.5" y="333.71818181818185" font-size="13.2" fill="#0000ff" text-anchor="end">-3.00</text><text x="1014.5" y="382.82727272727277" font-size="13.2" fill="#0000ff" text-anchor="end">-6.00</text><text x="1014.5" y="431.9363636363637" font-size="13.2" fill="#0000ff" text-anchor="end">-9.00</text><text x="1014.5" y="481.04545454545456" font-size="13.2" fill="#0000ff" text-anchor="end">-12.00</text><text x="1014.5" y="530.1545454545455" font-size="13.2" fill="#0000ff" text-anchor="end">-15.00</text><text x="1014.5" y="579.2636363636364" font-size="13.2" fill="#0000ff" text-anchor="end">-18.00</text><text x="1014.5" y="628.3727272727274" font-size="13.2" fill="#0000ff" text-anchor="end">-21.00</text><text x="1014.5" y="677.4818181818182" font-size="13.2" fill="#0000ff" text-anchor="end">-24.00</text><text x="1014.5" y="726.5909090909091" font-size="13.2" fill="#0000ff" text-anchor="end">-27.00</text><text x="1014.5" y="775.7" font-size="13.2" fill="#0000ff" text-anchor="end">-30.00</text><text x="1018" y="786" font-size="12.6" fill="#0000ff">10</text><text x="1274.7380487645435" y="786" font-size="12.6" fill="#0000ff" text-anchor="middle">100</text><text x="1531.476097529087" y="786" font-size="12.6" fill="#0000ff" text-anchor="middle">1K</text><text x="1788.2141462936304" y="786" font-size="12.6" fill="#0000ff" text-anchor="middle">10K</text><text x="1865.5" y="786" font-size="12.6" fill="#0000ff" text-anchor="middle">20K</text><text x="1018" y="802" font-size="12.6" fill="#0000ff" textLength="56" lengthAdjust="spacingAndGlyphs" text-decoration="underline">dB(v(out))</text><text x="1360" y="818" font-size="12.6" fill="#0000ff" textLength="34" lengthAdjust="spacingAndGlyphs">F (Hz)</text><text x="1285.5" y="226.5" font-size="12.6" fill="#0000ff" textLength="312" lengthAdjust="spacingAndGlyphs">Тонкомпенсация из Беларусь M310C.cir Run=1...11</text><g transform="translate(8,64)"><path d="M5.5 4.5 h7 l4.5 4.5 v10 h-11.5z" fill="#fafafa" stroke="#a0a0a0" stroke-width="1"/><path d="M12.5 4.5 v4.5 h4.5" fill="none" stroke="#a0a0a0" stroke-width="1"/><path d="M2 3 l3 3 M5 1 v3 M1 5 h3" stroke="#c8c8c8" stroke-width="1"/></g><g transform="translate(36,64)"><path d="M1 7 h6 l1 2 h9 v9 h-16z" fill="#d6d6d6" stroke="#aaa"/><path d="M3 11 h17 l-3 7 h-16z" fill="#c4c4c4" stroke="#a8a8a8"/><path d="M12 5 q3 -4 6 0" stroke="#b0b0b0" stroke-width="1.5" fill="none"/></g><g transform="translate(65,64)"><rect x="1.5" y="1.5" width="17" height="17" rx="1" fill="#5a5ad0" stroke="#3a3a9a"/><rect x="4" y="2" width="11" height="8" fill="#f4f6ff"/><rect x="6" y="13" width="8" height="5" fill="#222"/><rect x="9" y="14" width="3" height="3" fill="#eee"/></g><g transform="translate(94,64)"><path d="M3.5 1.5 h9 l4.5 4.5 v13 h-13.5z" fill="#f6f6f6" stroke="#b0b0b0" stroke-width="1"/><path d="M12.5 1.5 v4.5 h4.5" fill="none" stroke="#b0b0b0" stroke-width="1"/><path d="M6 9 q4 -4 8 0 M14 11 q-4 4 -8 0" stroke="#a8a8a8" stroke-width="2" fill="none"/></g><g transform="translate(123,64)"><path d="M1.5 1.5 h8 l4.5 4.5 v12 h-12.5z" fill="#fbfbff" stroke="#6070a0" stroke-width="1"/><path d="M9.5 1.5 v4.5 h4.5" fill="none" stroke="#6070a0" stroke-width="1"/><path d="M12.0 13.0 l6 6" stroke="#e09030" stroke-width="3.5" stroke-linecap="round"/><circle cx="9" cy="10" r="5" fill="#dfe8f4" stroke="#707888" stroke-width="1.6"/></g><g transform="translate(152,64)"><path d="M5 2 h10 l1 6 h-12z" fill="#e8e8e8" stroke="#888"/><rect x="1.5" y="8.5" width="17" height="9" rx="2" fill="#7a8a9a" stroke="#4a5a6a"/><rect x="3" y="12" width="14" height="4" fill="#dde4ea"/><rect x="13" y="12" width="3" height="2.5" fill="#20c020"/></g><rect x="180" y="57" width="1.2" height="34" fill="#a8a8a8"/><rect x="181.2" y="57" width="1" height="34" fill="#fff"/><g transform="translate(191,64)"><path d="M6 5 q9 -2 9 6 q0 6 -4 7" stroke="#3a78e0" stroke-width="2.6" fill="none"/><path d="M1 6 l7 -5 v10z" fill="#3a78e0"/></g><g transform="translate(221,64)"><path d="M14 5 q-9 -2 -9 6 q0 6 4 7" stroke="#c8c8c8" stroke-width="2.6" fill="none"/><path d="M19 6 l-7 -5 v10z" fill="#c8c8c8"/></g><g transform="translate(249,64)"><path d="M6 1 l5 12 M14 1 l-5 12" stroke="#b8b8b8" stroke-width="2"/><circle cx="6" cy="16" r="2.6" fill="none" stroke="#b0b0b0" stroke-width="1.8"/><circle cx="13" cy="16" r="2.6" fill="none" stroke="#b0b0b0" stroke-width="1.8"/></g><g transform="translate(277,64)"><path d="M2.5 1.5 h5 l4.5 4.5 v8 h-9.5z" fill="#f0f0f0" stroke="#b8b8b8" stroke-width="1"/><path d="M7.5 1.5 v4.5 h4.5" fill="none" stroke="#b8b8b8" stroke-width="1"/><path d="M8.5 6.5 h5 l4.5 4.5 v8 h-9.5z" fill="#f4f4f4" stroke="#b0b0b0" stroke-width="1"/><path d="M13.5 6.5 v4.5 h4.5" fill="none" stroke="#b0b0b0" stroke-width="1"/></g><g transform="translate(306,64)"><rect x="1.5" y="3.5" width="13" height="15" rx="1.5" fill="#c8c8c8" stroke="#aaa"/><rect x="5" y="1.5" width="6" height="3" fill="#ddd" stroke="#aaa"/><path d="M9.5 8.5 h6 l4.5 4.5 v6 h-10.5z" fill="#efefef" stroke="#aaa" stroke-width="1"/><path d="M15.5 8.5 v4.5 h4.5" fill="none" stroke="#aaa" stroke-width="1"/></g><g transform="translate(336,64)"><path d="M3 3 l14 14 M17 3 l-14 14" stroke="#a8a8a8" stroke-width="2.4"/></g><g transform="translate(364,64)"><rect x="1" y="1" width="16" height="13" fill="#eef2fa" stroke="#4a5a90" stroke-width="1.2" stroke-dasharray="2 1.5"/><rect x="3" y="3" width="12" height="2" fill="#666"/><rect x="3" y="6.5" width="7" height="1.5" fill="#8aa0c0"/><path d="M12 8 v11 l3 -3 l2 4 l1.5 -.8 l-2 -4 h4z" fill="#c8d8ec" stroke="#7088a8" stroke-width=".8"/></g><rect x="393" y="57" width="1.2" height="34" fill="#a8a8a8"/><rect x="394.2" y="57" width="1" height="34" fill="#fff"/><g transform="translate(403,64)"><path d="M10 1 v12 M5 12.5 h10 M6.5 15 h7 M8 17.5 h4" stroke="#222" stroke-width="1.8"/></g><g transform="translate(431,64)"><path d="M0 10 h3 l3 -4 l5 6 l5 -6 l2 4 h2" stroke="#222" stroke-width="1.6" fill="none"/></g><g transform="translate(460,64)"><path d="M0 10 h8 M12 10 h8 M8.5 4 v12 M11.5 4 v12" stroke="#222" stroke-width="1.8"/></g><g transform="translate(488,64)"><path d="M0 10 h2 q2 -6 4 0 q2 6 3 0 q2 -6 4 0 q2 6 3 0 q2 -6 4 0 h0" stroke="#222" stroke-width="1.5" fill="none"/></g><g transform="translate(518,64)"><path d="M0 10 h20" stroke="#111" stroke-width="1.8"/><path d="M6 4.5 l8 5.5 l-8 5.5z" fill="#111"/><path d="M14.5 4 v12" stroke="#111" stroke-width="1.8"/></g><g transform="translate(547,64)"><path d="M0 10 h5 M5.5 2 v16 M6 8 l8 -6 M6 12 l8 6" stroke="#222" stroke-width="1.6"/><path d="M14 18 l-5 -1 l2 -3z" fill="#222"/></g><g transform="translate(575,64)"><path d="M0 9 h6 M6 2 v16 M9 1 v18 M9 3 h9 v-2 M9 17 h9 v2 M9 9 h9" stroke="#222" stroke-width="1.6" fill="none"/><path d="M10 9 l4 -3 v6z" fill="#222"/></g><g transform="translate(604,64)"><path d="M4 1 v18 l15 -9z" fill="none" stroke="#222" stroke-width="1.5"/><path d="M0 5 h4 M0 15 h4 M6 5 h3 M7.5 3.5 v3 M6 14 h3" stroke="#222" stroke-width="1.3"/></g><g transform="translate(632,64)"><rect x="1" y="4" width="16" height="11" rx="2" fill="none" stroke="#222" stroke-width="1.6"/><path d="M4 13 v-6 h4 v6 h3 v-6 h3 v6" stroke="#222" stroke-width="1.4" fill="none"/><path d="M17 10 h3" stroke="#222" stroke-width="1.4"/></g><g transform="translate(661,64)"><path d="M0 10 h8 M8.5 5 v10 M12 2 v16 M12 10 h8" stroke="#222" stroke-width="1.8"/></g><g transform="translate(691,64)"><path d="M10 0 v5 M10 15 v5" stroke="#222" stroke-width="1.6"/><circle cx="10" cy="10" r="5.5" fill="none" stroke="#222" stroke-width="1.6"/><path d="M10 6 l3 4 h-6z M10 10 v4" fill="#222" stroke="#222" stroke-width="1.2"/></g><g transform="translate(720,64)"><path d="M10 0 v5 M10 15 v5 M15 3 h2 M16 2 v2 M15 17 h2" stroke="#222" stroke-width="1.5"/><circle cx="10" cy="10" r="5.5" fill="#fff" stroke="#222" stroke-width="1.6"/></g><rect x="748" y="57" width="1.2" height="34" fill="#a8a8a8"/><rect x="749.2" y="57" width="1" height="34" fill="#fff"/><g transform="translate(757,64)"><rect x="0.5" y="0.5" width="11" height="8" fill="#eef3fb" stroke="#3a5a8a" stroke-width="1"/><rect x="1" y="1" width="10" height="3" fill="#4a7fd8"/><rect x="4.5" y="5.5" width="11" height="8" fill="#eef3fb" stroke="#3a5a8a" stroke-width="1"/><rect x="5" y="6" width="10" height="3" fill="#4a7fd8"/><rect x="8.5" y="10.5" width="11" height="8" fill="#eef3fb" stroke="#3a5a8a" stroke-width="1"/><rect x="9" y="11" width="10" height="3" fill="#4a7fd8"/></g><g transform="translate(787,64)"><rect x="0.5" y="1.5" width="8" height="16" fill="#eef3fb" stroke="#3a5a8a" stroke-width="1"/><rect x="1" y="2" width="7" height="3" fill="#4a7fd8"/><rect x="9.5" y="1.5" width="8" height="16" fill="#eef3fb" stroke="#3a5a8a" stroke-width="1"/><rect x="10" y="2" width="7" height="3" fill="#4a7fd8"/></g><g transform="translate(817,64)"><rect x="0.5" y="1.5" width="16" height="7" fill="#eef3fb" stroke="#3a5a8a" stroke-width="1"/><rect x="1" y="2" width="15" height="3" fill="#4a7fd8"/><rect x="0.5" y="10.5" width="16" height="7" fill="#eef3fb" stroke="#3a5a8a" stroke-width="1"/><rect x="1" y="11" width="15" height="3" fill="#4a7fd8"/></g><g transform="translate(845,64)"><rect x="0.5" y="1.5" width="17" height="17" fill="#eef3fb" stroke="#3a5a8a"/><rect x="1" y="2" width="16" height="3" fill="#4a7fd8"/><path d="M8.5 2 v10 h8.5" stroke="#3a5a8a" stroke-width="1.2" fill="none"/></g><g transform="translate(874,64)"><rect x="0.5" y="2.5" width="18" height="15" fill="#eef3fb" stroke="#3a5a8a" stroke-width="1"/><rect x="1" y="3" width="17" height="3" fill="#4a7fd8"/></g><rect x="900" y="63" width="1.2" height="22" fill="#a8a8a8"/><rect x="901.2" y="63" width="1" height="22" fill="#fff"/><g transform="translate(909,64)"><rect x="1" y="0.5" width="14" height="19" rx="2.5" fill="#9db4d8" stroke="#4a6090"/><rect x="3" y="2.5" width="10" height="3.5" fill="#3a70d0"/><rect x="3.0" y="7.5" width="2.4" height="2.4" fill="#e03030"/><rect x="3.0" y="11.3" width="2.4" height="2.4" fill="#3a6ad0"/><rect x="3.0" y="15.1" width="2.4" height="2.4" fill="#3a6ad0"/><rect x="6.6" y="7.5" width="2.4" height="2.4" fill="#e03030"/><rect x="6.6" y="11.3" width="2.4" height="2.4" fill="#3a6ad0"/><rect x="6.6" y="15.1" width="2.4" height="2.4" fill="#3a6ad0"/><rect x="10.2" y="7.5" width="2.4" height="2.4" fill="#e03030"/><rect x="10.2" y="11.3" width="2.4" height="2.4" fill="#3a6ad0"/><rect x="10.2" y="15.1" width="2.4" height="2.4" fill="#3a6ad0"/></g><rect x="937" y="57" width="1.2" height="34" fill="#a8a8a8"/><rect x="938.2" y="57" width="1" height="34" fill="#fff"/><g transform="translate(946,64)"><rect x="1.5" y="1.5" width="17" height="17" fill="#f4f4f4" stroke="#b8b8b8"/><rect x="2" y="2" width="16" height="2" fill="#c8c8c8"/><rect x="2" y="4" width="5" height="14" fill="#e0e0e0"/></g><g transform="translate(975,64)"><rect x="1" y="0.5" width="17" height="18" fill="#f0f4fa" stroke="#5a7aa8"/><circle cx="8" cy="7" r="3.5" fill="#c8c8c8"/><path d="M3 18 q0 -7 5 -7 q5 0 5 7z" fill="#4a78d0"/><rect x="12.2" y="8.0" width="2.6" height="3" fill="#e0b020" transform="rotate(0,13.5,14)"/><rect x="12.2" y="8.0" width="2.6" height="3" fill="#e0b020" transform="rotate(45,13.5,14)"/><rect x="12.2" y="8.0" width="2.6" height="3" fill="#e0b020" transform="rotate(90,13.5,14)"/><rect x="12.2" y="8.0" width="2.6" height="3" fill="#e0b020" transform="rotate(135,13.5,14)"/><rect x="12.2" y="8.0" width="2.6" height="3" fill="#e0b020" transform="rotate(180,13.5,14)"/><rect x="12.2" y="8.0" width="2.6" height="3" fill="#e0b020" transform="rotate(225,13.5,14)"/><rect x="12.2" y="8.0" width="2.6" height="3" fill="#e0b020" transform="rotate(270,13.5,14)"/><rect x="12.2" y="8.0" width="2.6" height="3" fill="#e0b020" transform="rotate(315,13.5,14)"/><circle cx="13.5" cy="14" r="4.0" fill="#e0b020"/><circle cx="13.5" cy="14" r="1.8" fill="#fff6c8"/></g><g transform="translate(1004,64)"><circle cx="9" cy="8.5" r="8" fill="#3a8ad8"/><path d="M3 3.5 q3 1 3.5 4 q-1.5 3 1 5.5 l-2 3 q-5 -4 -3 -9z M9.5 1 q4 0 6.5 4 q0.5 3 -2 6 q-2 -1 -1.5 -4 q-2 -2 -3 -6z" fill="#30a040"/><circle cx="9" cy="8.5" r="8" fill="none" stroke="#2a6ab0" stroke-width=".6"/><rect x="13.2" y="8.5" width="2.6" height="3" fill="#e0b020" transform="rotate(0,14.5,14.5)"/><rect x="13.2" y="8.5" width="2.6" height="3" fill="#e0b020" transform="rotate(45,14.5,14.5)"/><rect x="13.2" y="8.5" width="2.6" height="3" fill="#e0b020" transform="rotate(90,14.5,14.5)"/><rect x="13.2" y="8.5" width="2.6" height="3" fill="#e0b020" transform="rotate(135,14.5,14.5)"/><rect x="13.2" y="8.5" width="2.6" height="3" fill="#e0b020" transform="rotate(180,14.5,14.5)"/><rect x="13.2" y="8.5" width="2.6" height="3" fill="#e0b020" transform="rotate(225,14.5,14.5)"/><rect x="13.2" y="8.5" width="2.6" height="3" fill="#e0b020" transform="rotate(270,14.5,14.5)"/><rect x="13.2" y="8.5" width="2.6" height="3" fill="#e0b020" transform="rotate(315,14.5,14.5)"/><circle cx="14.5" cy="14.5" r="4.0" fill="#e0b020"/><circle cx="14.5" cy="14.5" r="1.8" fill="#fff6c8"/></g><rect x="1032" y="57" width="1.2" height="34" fill="#a8a8a8"/><rect x="1033.2" y="57" width="1" height="34" fill="#fff"/><g transform="translate(1042,64)"><path d="M0 2 h3 M0 5 h3 M0 8 h3" stroke="#4a5a80" stroke-width="1.6"/><path d="M5 5 h6 v-3 l5 4 l-5 4 v-3 h-6z" fill="#3a7ae0"/><ellipse cx="16" cy="14" rx="3.5" ry="6" fill="#d8b040" stroke="#806020"/><circle cx="8" cy="15" r="4.2" fill="#eef" stroke="#555" stroke-width="1.2"/><path d="M8 13 v2 h2" stroke="#333" stroke-width="1"/></g><g transform="translate(1071,64)"><rect x="0.5" y="0.5" width="19" height="18" fill="#f8f8f8" stroke="#c0c0c0"/><rect x="1" y="1" width="18" height="2" fill="#d0d0d0"/><rect x="8" y="5" width="7" height="7" fill="#e4e4e4" stroke="#ccc"/></g><rect x="1099" y="63" width="1.2" height="22" fill="#a8a8a8"/><rect x="1100.2" y="63" width="1" height="22" fill="#fff"/><g transform="translate(1106,64)"><rect x="0.5" y="0.5" width="18" height="18" fill="#eef3fa" stroke="#4a6a98"/><path d="M3 4 h3 M8 4 h8 M3 9 l1.5 2 l3 -4 M3 14 l1.5 2 l3 -4" stroke="#333" stroke-width="1.3" fill="none"/><rect x="12.7" y="7.5" width="2.6" height="3" fill="#e0b020" transform="rotate(0,14,14)"/><rect x="12.7" y="7.5" width="2.6" height="3" fill="#e0b020" transform="rotate(45,14,14)"/><rect x="12.7" y="7.5" width="2.6" height="3" fill="#e0b020" transform="rotate(90,14,14)"/><rect x="12.7" y="7.5" width="2.6" height="3" fill="#e0b020" transform="rotate(135,14,14)"/><rect x="12.7" y="7.5" width="2.6" height="3" fill="#e0b020" transform="rotate(180,14,14)"/><rect x="12.7" y="7.5" width="2.6" height="3" fill="#e0b020" transform="rotate(225,14,14)"/><rect x="12.7" y="7.5" width="2.6" height="3" fill="#e0b020" transform="rotate(270,14,14)"/><rect x="12.7" y="7.5" width="2.6" height="3" fill="#e0b020" transform="rotate(315,14,14)"/><circle cx="14" cy="14" r="4.5" fill="#e0b020"/><circle cx="14" cy="14" r="2.0" fill="#fff6c8"/></g><g transform="translate(1135,64)"><path d="M9 3 q-8 -2 -8 4 q0 4 6 4 h3" stroke="#3a78e0" stroke-width="2.5" fill="none"/><path d="M8 7 l5 4 l-5 4z" fill="#3a78e0"/><path d="M12 4 h7 M12 7 h7 M12 10 h7 M12 13 h7 M12 16 h7" stroke="#111" stroke-width="1.6"/></g><g transform="translate(1164,64)"><path d="M3 18 l12 -12" stroke="#d89a20" stroke-width="2.8"/><path d="M14 3 l5 5 l-2 2 l-5 -5z" fill="#8a9ab0" stroke="#556"/><path d="M5 2 l13 14" stroke="#8a9ab0" stroke-width="2.4"/><circle cx="4" cy="3" r="3" fill="none" stroke="#6a88b8" stroke-width="1.8"/></g><rect x="1189" y="60" width="27" height="27" fill="#f6f6f6"/><path d="M1189.75 87 V60.75 H1216" stroke="#b4b4b4" stroke-width="1.5" fill="none"/><g transform="translate(1194,64)"><rect x="3" y="4" width="15" height="12" fill="#e6f0fb"/><path d="M3 1 v18 M1 4 h17 M1 16 h17" stroke="#555" stroke-width="1.4"/><path d="M4 13 l4 -5 l3 4 l3 -7 l4 6" stroke="#3a78d8" stroke-width="1.8" fill="none"/></g><rect x="1220" y="63" width="1.2" height="22" fill="#a8a8a8"/><rect x="1221.2" y="63" width="1" height="22" fill="#fff"/><g transform="translate(1228,64)"><rect x="3" y="3" width="15" height="13" fill="#e6f0fb"/><path d="M3 0 v19 M1 3 h17 M1 16 h17" stroke="#555" stroke-width="1.4"/><path d="M4 10 l4 -5 l3 4" stroke="#3a78d8" stroke-width="1.8" fill="none"/><path d="M8 19 l2 -4 l8 -8 l2 2 l-8 8z" fill="#e8c040" stroke="#806020" stroke-width=".8"/><path d="M16 7 l2 -2 l2 2 l-2 2z" fill="#e06060"/></g><rect x="1256" y="57" width="1.2" height="34" fill="#a8a8a8"/><rect x="1257.2" y="57" width="1" height="34" fill="#fff"/><rect x="21" y="142" width="28" height="26" fill="#f6f6f6"/><path d="M21.75 168 V142.75 H49" stroke="#b4b4b4" stroke-width="1.5" fill="none"/><g transform="translate(28,146)"><path d="M3 1 v15 l3.5 -3.5 l3 6 l2.5 -1.2 l-3 -5.8 h5z" fill="#dde8f6" stroke="#3a5890" stroke-width="1.1"/></g><g transform="translate(54,145)"><path d="M0 10 l5 -4 l5 5 l5 -5 l4 4" stroke="#222" stroke-width="1.6" fill="none"/></g><g transform="translate(82,145)"><path d="M2.5 1.5 h15 v5 h-1.5 q-0.5 -2.5 -3 -2.5 h-1 v10.5 q0 2 2.5 2 v1.5 h-9 v-1.5 q2.5 0 2.5 -2 v-10.5 h-1 q-2.5 0 -3 2.5 h-1.5z" fill="#111" stroke="#111" stroke-width="0.9"/></g><g transform="translate(111,145)"><path d="M2 5 h5 v10 h10" stroke="#4a6a9a" stroke-width="1.6" fill="none"/><rect x="0" y="3.5" width="3.5" height="3.5" fill="#111"/><path d="M8 13 l1 -4 l8 -8 l3 3 l-8 8z" fill="#f0c840" stroke="#806020" stroke-width=".8"/><path d="M16 2 l2 -2 l3 3 l-2 2z" fill="#e07060"/></g><g transform="translate(140,145)"><path d="M2 5 l10 10" stroke="#4a6a9a" stroke-width="1.3"/><rect x="0" y="3.5" width="3.5" height="3.5" fill="#111"/><path d="M8 13 l1 -4 l8 -8 l3 3 l-8 8z" fill="#f0c840" stroke="#806020" stroke-width=".8"/><path d="M16 2 l2 -2 l3 3 l-2 2z" fill="#e07060"/></g><g transform="translate(168,145)"><rect x="1" y="1" width="18" height="17" rx="2.5" fill="#e8c020" stroke="#8a6a10"/><rect x="3" y="3" width="14" height="8" fill="#88b0e0"/><rect x="3" y="13" width="14" height="2" fill="#222"/><rect x="2" y="17" width="4" height="3" fill="#222"/><rect x="14" y="17" width="4" height="3" fill="#222"/></g><g transform="translate(197,145)"><circle cx="14" cy="7" r="6" fill="#bcd4f0" stroke="#4a7ac8" stroke-width="1.2"/><rect x="1" y="4" width="11" height="10" fill="#d0e2f8" stroke="#4a7ac8" stroke-width="1.2"/><path d="M8 11 h7 v8 h-7z" fill="#eaf2fc" stroke="#4a7ac8" stroke-width="1.2"/></g><path d="M227.5 153 h9 l-4.5 4.5z" fill="#000"/><g transform="translate(245,145)"><path d="M1 19 l17 -17" stroke="#4a78c8" stroke-width="1.6"/><path d="M9 9 l6 -5 l5 3 l-6 6z" fill="#5a88d8"/><path d="M7 13 l6 -5 l5 3 l-6 6z" fill="#7aa0e0"/></g><g transform="translate(274,145)"><circle cx="10" cy="10" r="9.5" fill="#3a70d8" stroke="#2a5ab0"/><circle cx="10" cy="5" r="1.8" fill="#fff"/><rect x="8.5" y="8" width="3" height="8" fill="#fff"/></g><g transform="translate(302,145)"><rect x="0.5" y="1.5" width="19" height="17" fill="#f0f4fa" stroke="#3a5a8a" stroke-width="1"/><rect x="1" y="2" width="18" height="3" fill="#5a8ae0"/><circle cx="10" cy="11.5" r="5" fill="#2a5ac8"/><text x="10" y="14.5" font-size="8" font-weight="bold" fill="#fff" text-anchor="middle">?</text></g><g transform="translate(331,145)"><path d="M1.5 0.5 h4 l4.5 4.5 v5 h-8.5z" fill="#f0f4fa" stroke="#8aa" stroke-width="1"/><path d="M5.5 0.5 v4.5 h4.5" fill="none" stroke="#8aa" stroke-width="1"/><circle cx="11" cy="9" r="6" fill="#3a8ad8"/><path d="M8 6 q3 2 2 5 M13 4 q2 3 3 5" stroke="#2aa040" stroke-width="2.5"/><ellipse cx="7.5" cy="17" rx="3.5" ry="2.2" fill="none" stroke="#667" stroke-width="1.4"/><ellipse cx="14" cy="17" rx="3.5" ry="2.2" fill="none" stroke="#667" stroke-width="1.4"/></g><g transform="translate(360,145)"><rect x="0.5" y="0.5" width="19" height="18" fill="#eef2f8" stroke="#4a6a98"/><path d="M3 6 h8 M3 10 h8 M3 14 h6" stroke="#555" stroke-width="1.3"/><path d="M12 5 l2 2 l4 -5" stroke="#20a040" stroke-width="1.8" fill="none"/><circle cx="14" cy="13" r="4" fill="#e05030"/><path d="M12 14 l4 -3" stroke="#fff" stroke-width="1.2"/></g><g transform="translate(390,145)"><rect x="0.5" y="2.5" width="15" height="15" fill="#fff" stroke="#e08020" stroke-width="1.4"/><path d="M1 7 h14 M1 10.5 h14 M1 14 h14" stroke="#e08020" stroke-width="1.3"/></g><g transform="translate(417,145)"><path d="M1.5 0.5 h9 l4.5 4.5 v13 h-13.5z" fill="#f2f6fc" stroke="#5a7090" stroke-width="1"/><path d="M10.5 0.5 v4.5 h4.5" fill="none" stroke="#5a7090" stroke-width="1"/><path d="M4 3 h2 M4 6 h2 M4 9 h2" stroke="#89a" stroke-width="1"/><path d="M8 7 v6 l-3 -2 M8 13 l3 -2" stroke="#2a70e0" stroke-width="1.6" fill="none"/><path d="M9 19 l2 -4 l7 -7 l2 2 l-7 7z" fill="#e8c040" stroke="#806020" stroke-width=".7"/></g><rect x="445" y="144" width="1.2" height="22" fill="#a8a8a8"/><rect x="446.2" y="144" width="1" height="22" fill="#fff"/><rect x="449" y="142" width="27" height="26" fill="#f6f6f6"/><path d="M449.75 168 V142.75 H476" stroke="#b4b4b4" stroke-width="1.5" fill="none"/><g transform="translate(455,145)"><ellipse cx="7" cy="3.2" rx="3.3" ry="2.3" fill="#a8c8f0" stroke="#222" stroke-width="1.2"/><ellipse cx="15" cy="3.2" rx="3.3" ry="2.3" fill="#a8c8f0" stroke="#222" stroke-width="1.2"/><path d="M10.3 2.6 q0.7 -0.8 1.4 0 M3.8 2.2 l-1 -1.6 M18.2 2.2 l1 -1.6" stroke="#222" stroke-width="1.1" fill="none"/><text x="5" y="19" font-family="Liberation Serif" font-weight="bold" font-size="13" fill="#3a50a0">A</text></g><rect x="478" y="142" width="27" height="26" fill="#f6f6f6"/><path d="M478.75 168 V142.75 H505" stroke="#b4b4b4" stroke-width="1.5" fill="none"/><g transform="translate(482,145)"><ellipse cx="7" cy="3.2" rx="3.3" ry="2.3" fill="#a8c8f0" stroke="#222" stroke-width="1.2"/><ellipse cx="15" cy="3.2" rx="3.3" ry="2.3" fill="#a8c8f0" stroke="#222" stroke-width="1.2"/><path d="M10.3 2.6 q0.7 -0.8 1.4 0 M3.8 2.2 l-1 -1.6 M18.2 2.2 l1 -1.6" stroke="#222" stroke-width="1.1" fill="none"/><text x="0" y="19" font-family="Liberation Serif" font-weight="bold" font-size="13" fill="#3a50a0">A</text><path d="M10 15 l2 -2 l2 2 l2 -2 l2 2 l2 -2" stroke="#3a50a0" stroke-width="1" fill="none"/></g><g transform="translate(511,145)"><ellipse cx="5" cy="3.2" rx="3.3" ry="2.3" fill="#a8c8f0" stroke="#222" stroke-width="1.2"/><ellipse cx="13" cy="3.2" rx="3.3" ry="2.3" fill="#a8c8f0" stroke="#222" stroke-width="1.2"/><path d="M8.3 2.6 q0.7 -0.8 1.4 0 M1.8 2.2 l-1 -1.6 M16.2 2.2 l1 -1.6" stroke="#222" stroke-width="1.1" fill="none"/><rect x="0.5" y="8.5" width="10" height="10" rx="1.5" fill="#fff" stroke="#4a6a98" stroke-width="1.3"/><text x="5.5" y="17" font-size="9.5" text-anchor="middle" fill="#111">N</text><path d="M11 13.5 h8" stroke="#4a6a98" stroke-width="1"/><circle cx="13.5" cy="13.5" r="1.8" fill="#e01010"/></g><g transform="translate(539,145)"><rect x="0.5" y="0.5" width="9" height="8" fill="#eee" stroke="#ccc"/><rect x="3" y="4" width="8" height="9" fill="#e4e4e4" stroke="#ccc"/><path d="M9 2 v11 l3 -3 l2 4 l2 -1 l-2 -4 h4z" fill="#eee" stroke="#bbb" stroke-width=".8"/><rect x="10" y="13" width="9" height="6" fill="#ddd" stroke="#c4c4c4"/></g><path d="M568.5 153 h9 l-4.5 4.5z" fill="#b0b0b0"/><g transform="translate(587,145)"><ellipse cx="5" cy="3.2" rx="3.3" ry="2.3" fill="#a8c8f0" stroke="#222" stroke-width="1.2"/><ellipse cx="13" cy="3.2" rx="3.3" ry="2.3" fill="#a8c8f0" stroke="#222" stroke-width="1.2"/><path d="M8.3 2.6 q0.7 -0.8 1.4 0 M1.8 2.2 l-1 -1.6 M16.2 2.2 l1 -1.6" stroke="#222" stroke-width="1.1" fill="none"/><rect x="0.5" y="8.5" width="10" height="10" rx="1.5" fill="#fff" stroke="#c03030" stroke-width="1.3"/><text x="5.5" y="17" font-size="9.5" text-anchor="middle" fill="#111">V</text><path d="M11 13.5 h8" stroke="#4a6a98" stroke-width="1"/><circle cx="13.5" cy="13.5" r="1.8" fill="#e01010"/></g><g transform="translate(615,145)"><path d="M0 5 h14" stroke="#5a78b0" stroke-width="1.4"/><path d="M13 1.5 l6 3.5 l-6 3.5z" fill="#5a78b0"/><path d="M0 14 h19 M8 10 v8 M11 10 v8" stroke="#111" stroke-width="1.8"/><path d="M6 11 l3 3 l-3 3z" fill="#111"/></g><g transform="translate(645,145)"><path d="M10 0 h7 l-4 5 h3 l-8 8 l2 -6 h-3z" fill="#f0c820" stroke="#b08010" stroke-width=".7"/><path d="M0 14 h19 M8 10 v8 M11 10 v8" stroke="#111" stroke-width="1.8"/></g><g transform="translate(674,145)"><path d="M4 7 l3 4 l8 -10" stroke="#c4c4c4" stroke-width="1.8" fill="none"/><path d="M0 14 h19 M8 10 v8 M11 10 v8" stroke="#aaa" stroke-width="1.6"/></g><g transform="translate(702,145)"><ellipse cx="6" cy="3.2" rx="3.3" ry="2.3" fill="#a8c8f0" stroke="#222" stroke-width="1.2"/><ellipse cx="14" cy="3.2" rx="3.3" ry="2.3" fill="#a8c8f0" stroke="#222" stroke-width="1.2"/><path d="M9.3 2.6 q0.7 -0.8 1.4 0 M2.8 2.2 l-1 -1.6 M17.2 2.2 l1 -1.6" stroke="#222" stroke-width="1.1" fill="none"/><path d="M2 12 h14" stroke="#4a6a98" stroke-width="1.3"/><circle cx="2" cy="12" r="2" fill="#e01010"/><circle cx="16" cy="12" r="2" fill="#e01010"/></g><g transform="translate(730,145)"><path d="M10 1 l9.5 18 h-19z" fill="#ffff00" stroke="#111" stroke-width="1.3"/></g><g transform="translate(760,145)"><path d="M2.0 1 v18 M0 2.5 h18" stroke="#4a6ad0" stroke-width="1.1"/><path d="M5.5 1 v18 M0 6.0 h18" stroke="#4a6ad0" stroke-width="1.1"/><path d="M9.0 1 v18 M0 9.5 h18" stroke="#4a6ad0" stroke-width="1.1"/><path d="M12.5 1 v18 M0 13.0 h18" stroke="#4a6ad0" stroke-width="1.1"/><path d="M16.0 1 v18 M0 16.5 h18" stroke="#4a6ad0" stroke-width="1.1"/></g><path d="M788.5 153 h9 l-4.5 4.5z" fill="#000"/><g transform="translate(807,145)"><path d="M1.5 1.5 h10 l4.5 4.5 v13 h-14.5z" fill="#fff" stroke="#4a6080" stroke-width="1"/><path d="M11.5 1.5 v4.5 h4.5" fill="none" stroke="#4a6080" stroke-width="1"/><rect x="3" y="4" width="10" height="12" fill="none" stroke="#e08020" stroke-width="1.2"/><path d="M3 8 h10 M3 12 h10 M8 4 v12" stroke="#e08020" stroke-width="1"/></g><g transform="translate(836,145)"><path d="M1.5 1.5 h10 l4.5 4.5 v13 h-14.5z" fill="#fff" stroke="#4a6080" stroke-width="1"/><path d="M11.5 1.5 v4.5 h4.5" fill="none" stroke="#4a6080" stroke-width="1"/><rect x="3" y="3.5" width="10" height="13" fill="#f4f6fa" stroke="#e08020" stroke-width="1.3"/></g><g transform="translate(865,145)"><path d="M1.5 1.5 h10 l4.5 4.5 v13 h-14.5z" fill="#fff" stroke="#4a6080" stroke-width="1"/><path d="M11.5 1.5 v4.5 h4.5" fill="none" stroke="#4a6080" stroke-width="1"/><rect x="8" y="11" width="6" height="5" fill="#e08020"/><path d="M9 13.5 h4" stroke="#fff" stroke-width="1"/></g><g transform="translate(893,145)"><path d="M4 15 v-10 h10" stroke="#3a70e0" stroke-width="2" fill="none"/><rect x="13" y="0.5" width="6" height="6" fill="#dde8fa" stroke="#6a8ac0"/><rect x="1" y="13" width="6" height="6" fill="#dde8fa" stroke="#6a8ac0"/><path d="M8 16 h4" stroke="#8aa8d8" stroke-dasharray="1 1"/><circle cx="16" cy="16" r="3" fill="none" stroke="#a8c0e0" stroke-dasharray="1 1"/></g><rect x="920" y="144" width="1.2" height="22" fill="#a8a8a8"/><rect x="921.2" y="144" width="1" height="22" fill="#fff"/><g transform="translate(25,179)"><rect x="0.5" y="7.5" width="13" height="11" fill="#eef3fb" stroke="#50607a" stroke-width="1"/><rect x="1" y="8" width="12" height="3" fill="#6a9ae0"/><path d="M3 9 l6 -6 q4 -3 8 -2 l3 2 v6 l-3 -1 q-3 2 -7 2z" fill="#e8c040" stroke="#8a6a20" stroke-width=".7"/><rect x="18" y="2" width="2" height="6" fill="#30b040"/></g><rect x="53" y="178" width="1.2" height="22" fill="#a8a8a8"/><rect x="54.2" y="178" width="1" height="22" fill="#fff"/><g transform="translate(60,179)"><rect x="3" y="3" width="14" height="14" fill="none" stroke="#666" stroke-width="1.2" stroke-dasharray="2 1"/><rect x="1.2" y="1.2" width="3.6" height="3.6" fill="#555"/><rect x="8.2" y="1.2" width="3.6" height="3.6" fill="#555"/><rect x="15.2" y="1.2" width="3.6" height="3.6" fill="#555"/><rect x="1.2" y="8.2" width="3.6" height="3.6" fill="#555"/><rect x="15.2" y="8.2" width="3.6" height="3.6" fill="#555"/><rect x="1.2" y="15.2" width="3.6" height="3.6" fill="#555"/><rect x="8.2" y="15.2" width="3.6" height="3.6" fill="#555"/><rect x="15.2" y="15.2" width="3.6" height="3.6" fill="#555"/></g><g transform="translate(91,179)"><rect x="1.5" y="1.5" width="15" height="15" rx="2" fill="#f6f6f6" stroke="#c8c8c8"/></g><g transform="translate(118,179)"><path d="M5 5 a7 7 0 1 0 6 -3" stroke="#c0c0c0" stroke-width="2.5" fill="none"/><circle cx="10" cy="11" r="3" fill="#c4c4c4"/><path d="M8 0 l4 3 l-4 3z" fill="#c4c4c4"/></g><g transform="translate(147,179)"><path d="M8 2 v16 h-7z" fill="#d4d4d4"/><path d="M11 2 v16 h7z" fill="#c8c8c8"/></g><g transform="translate(176,179)"><path d="M16 2 v7 h-14z" fill="#d4d4d4"/><path d="M16 11 v7 l-14 -7z" fill="#c8c8c8"/></g><rect x="203" y="178" width="1.2" height="22" fill="#a8a8a8"/><rect x="204.2" y="178" width="1" height="22" fill="#fff"/><g transform="translate(211,179)"><rect x="1" y="5" width="6" height="10" fill="#5a7ac8" stroke="#2a4a98"/><rect x="10" y="5" width="6" height="10" fill="#5a7ac8" stroke="#2a4a98"/><rect x="3" y="1" width="3" height="5" fill="#7a9ae0"/><rect x="11" y="1" width="3" height="5" fill="#7a9ae0"/><rect x="6" y="7" width="5" height="4" fill="#3a5ab0"/><rect x="2" y="11" width="4" height="3" fill="#dde8fa"/><rect x="11" y="11" width="4" height="3" fill="#dde8fa"/><path d="M2 18 l2 -1.5 l2 1.5 l2 -1.5 l2 1.5 l2 -1.5 l2 1.5" stroke="#2a3ac0" stroke-width="1.1" fill="none"/></g><g transform="translate(240,179)"><rect x="1" y="5" width="6" height="10" fill="#5a7ac8" stroke="#2a4a98"/><rect x="10" y="5" width="6" height="10" fill="#5a7ac8" stroke="#2a4a98"/><rect x="3" y="1" width="3" height="5" fill="#7a9ae0"/><rect x="11" y="1" width="3" height="5" fill="#7a9ae0"/><rect x="6" y="7" width="5" height="4" fill="#3a5ab0"/><rect x="2" y="11" width="4" height="3" fill="#dde8fa"/><rect x="11" y="11" width="4" height="3" fill="#dde8fa"/></g><rect x="267" y="178" width="1.2" height="22" fill="#a8a8a8"/><rect x="268.2" y="178" width="1" height="22" fill="#fff"/><g transform="translate(274,179)"><path d="M5.5 1.5 h9 l4.5 4.5 v13 h-13.5z" fill="#f0f0f0" stroke="#c0c0c0" stroke-width="1"/><path d="M14.5 1.5 v4.5 h4.5" fill="none" stroke="#c0c0c0" stroke-width="1"/><path d="M1 14 q0 -6 7 -6 v-2 l3 3.5 l-3 3.5 v-2 q-4 0 -5 3z" fill="#d0d0d0"/></g><rect x="302" y="178" width="1.2" height="22" fill="#a8a8a8"/><rect x="303.2" y="178" width="1" height="22" fill="#fff"/><g transform="translate(310,179)"><circle cx="10" cy="10" r="9" fill="#c4c4c4"/><rect x="9" y="4" width="2.2" height="8" fill="#fff"/><circle cx="10" cy="15" r="1.3" fill="#fff"/></g><g transform="translate(339,179)"><circle cx="10" cy="10" r="9" fill="#707070"/><path d="M6.5 6.5 l7 7 M13.5 6.5 l-7 7" stroke="#fff" stroke-width="2"/></g><rect x="365" y="178" width="1.2" height="22" fill="#a8a8a8"/><rect x="366.2" y="178" width="1" height="22" fill="#fff"/><g transform="translate(372,179)"><rect x="1" y="1" width="9" height="9" fill="#ddd" stroke="#c8c8c8"/><rect x="5" y="5" width="11" height="11" fill="#d0d0d0" stroke="#bbb"/><rect x="12" y="13" width="6" height="6" fill="#ccc" stroke="#bbb"/></g><g transform="translate(401,179)"><rect x="1" y="1" width="7" height="7" fill="#ddd" stroke="#c8c8c8"/><rect x="5" y="5" width="7" height="7" fill="#d4d4d4" stroke="#c0c0c0"/><rect x="10" y="10" width="8" height="8" fill="#ccc" stroke="#bbb"/></g><rect x="429" y="178" width="1.2" height="22" fill="#a8a8a8"/><rect x="430.2" y="178" width="1" height="22" fill="#fff"/><g transform="translate(436,179)"><path d="M12.2 12.2 l6 6" stroke="#d8a030" stroke-width="3.5" stroke-linecap="round"/><circle cx="8" cy="8" r="7" fill="#dce9f8" stroke="#6a7a8a" stroke-width="1.6"/><path d="M4.5 8 h7 M8 4.5 v7" stroke="#2a5ab8" stroke-width="2.2"/></g><g transform="translate(465,179)"><path d="M12.2 12.2 l6 6" stroke="#d8a030" stroke-width="3.5" stroke-linecap="round"/><circle cx="8" cy="8" r="7" fill="#dce9f8" stroke="#6a7a8a" stroke-width="1.6"/><path d="M4.5 8 h7" stroke="#2a5ab8" stroke-width="2.2"/></g><g transform="translate(494,179)"><rect x="6" y="0.5" width="13" height="8" fill="#eef2f8" stroke="#6a7a98"/><text x="12.5" y="7.5" font-size="6.5" text-anchor="middle" fill="#333">100</text><path d="M7.699999999999999 15.7 l6 6" stroke="#d8a030" stroke-width="3.5" stroke-linecap="round"/><circle cx="5" cy="13" r="4.5" fill="#dce9f8" stroke="#889" stroke-width="1.6"/></g><rect x="522" y="178" width="1.2" height="22" fill="#a8a8a8"/><rect x="523.2" y="178" width="1" height="22" fill="#fff"/><g transform="translate(530,179)"><path d="M1 5 h6 l2 2 h9 v11 h-17z" fill="#d0d0d0" stroke="#bbb"/><path d="M9 14 q1 -6 6 -7 v-3 l4 5 l-4 4 v-3 q-3 1 -6 4z" fill="#b8b8b8"/></g><rect x="557" y="178" width="1.2" height="22" fill="#a8a8a8"/><rect x="558.2" y="178" width="1" height="22" fill="#fff"/><g transform="translate(564,179)"><rect x="1" y="3" width="5" height="6" fill="#ffa800"/><rect x="7" y="3" width="5" height="6" fill="#20c020"/><rect x="13" y="3" width="5" height="6" fill="#2020ff"/><rect x="1" y="10" width="5" height="6" fill="#ff2040"/><rect x="7" y="10" width="5" height="6" fill="#a020d0"/><rect x="13" y="10" width="5" height="6" fill="#30c8f0"/></g><path d="M593.5 187 h9 l-4.5 4.5z" fill="#000"/><g transform="translate(612,179)"><text x="9" y="18" font-family="Liberation Serif" font-weight="bold" font-size="20" text-anchor="middle" fill="#2a4a98">A</text></g><g transform="translate(975,146)"><path d="M3 1 v15 l3.5 -3.5 l3 6 l2.5 -1.2 l-3 -5.8 h5z" fill="#dde8f6" stroke="#3a5890" stroke-width="1.1"/></g><g transform="translate(1002,145)"><circle cx="14" cy="7" r="6" fill="#bcd4f0" stroke="#4a7ac8" stroke-width="1.2"/><rect x="1" y="4" width="11" height="10" fill="#d0e2f8" stroke="#4a7ac8" stroke-width="1.2"/><path d="M8 11 h7 v8 h-7z" fill="#eaf2fc" stroke="#4a7ac8" stroke-width="1.2"/></g><path d="M1032.0 153 h9 l-4.5 4.5z" fill="#000"/><rect x="1046" y="142" width="28" height="26" fill="#f6f6f6"/><path d="M1046.75 168 V142.75 H1074" stroke="#b4b4b4" stroke-width="1.5" fill="none"/><g transform="translate(1051,145)"><rect x="1.5" y="2.5" width="17" height="15" fill="#e8f0fa" stroke="#4e6a90" stroke-width="1.2"/><path d="M2 9 l4 -4 l4 3 l4 -4 l4 3" stroke="#3a70d0" stroke-width="1.3" fill="none"/><path d="M12.7 13.7 l6 6" stroke="#e08030" stroke-width="3.5" stroke-linecap="round"/><circle cx="10" cy="11" r="4.5" fill="#e6eef8" stroke="#667" stroke-width="1.6"/></g><g transform="translate(1079,145)"><rect x="1.5" y="2.5" width="18" height="15" fill="#e8f0fa" stroke="#4e6a90" stroke-width="1.2"/><path d="M5 3 v14 M15 3 v14" stroke="#222" stroke-dasharray="1.5 1.5"/><path d="M2 9 l4 -4 l4 4 l4 -4 l4 4" stroke="#3a70d0" stroke-width="1.3" fill="none"/><path d="M2 13 h16 M2 15.5 h16" stroke="#556" stroke-dasharray="3 1"/></g><g transform="translate(1107,145)"><rect x="1.5" y="2.5" width="18" height="16" fill="#e8f0fa" stroke="#4e6a90" stroke-width="1.2"/><path d="M3 17 q8 -2 14 -12" stroke="#f08030" stroke-width="1.3" fill="none"/><path d="M3 5 h14" stroke="#3a70e0" stroke-width="1.5"/><path d="M1 5 l4 -3 v6z M19 5 l-4 -3 v6z" fill="#3a70e0"/></g><g transform="translate(1136,145)"><rect x="1.5" y="2.5" width="18" height="16" fill="#e8f0fa" stroke="#4e6a90" stroke-width="1.2"/><path d="M3 17 q8 -2 14 -12" stroke="#f08030" stroke-width="1.3" fill="none"/><path d="M6 3 v14" stroke="#3a70e0" stroke-width="1.5"/><path d="M6 1 l-3 4 h6z M6 19 l-3 -4 h6z" fill="#3a70e0"/></g><g transform="translate(1165,145)"><rect x="1.5" y="2.5" width="18" height="16" fill="#e8f0fa" stroke="#4e6a90" stroke-width="1.2"/><path d="M3 17 q8 -2 14 -12" stroke="#f08030" stroke-width="1.3" fill="none"/><path d="M5 4 l5 5" stroke="#3a70e0" stroke-width="1.5"/><path d="M12 11 l-6 -1 l5 -5z" fill="#3a70e0"/></g><g transform="translate(1194,145)"><rect x="1.5" y="2.5" width="18" height="16" fill="#e8f0fa" stroke="#4e6a90" stroke-width="1.2"/><path d="M3 17 q8 -2 14 -12" stroke="#f08030" stroke-width="1.3" fill="none"/><text x="3" y="12" font-family="Liberation Serif" font-style="italic" font-weight="bold" font-size="12" fill="#111">fx</text></g><g transform="translate(1222,145)"><path d="M2.5 1.5 h15 v5 h-1.5 q-0.5 -2.5 -3 -2.5 h-1 v10.5 q0 2 2.5 2 v1.5 h-9 v-1.5 q2.5 0 2.5 -2 v-10.5 h-1 q-2.5 0 -3 2.5 h-1.5z" fill="#111" stroke="#111" stroke-width="0.9"/></g><rect x="1250" y="144" width="1.2" height="22" fill="#a8a8a8"/><rect x="1251.2" y="144" width="1" height="22" fill="#fff"/><g transform="translate(1257,145)"><rect x="0.5" y="7.5" width="13" height="11" fill="#eef3fb" stroke="#50607a" stroke-width="1"/><rect x="1" y="8" width="12" height="3" fill="#6a9ae0"/><path d="M3 9 l6 -6 q4 -3 8 -2 l3 2 v6 l-3 -1 q-3 2 -7 2z" fill="#e8c040" stroke="#8a6a20" stroke-width=".7"/><rect x="18" y="2" width="2" height="6" fill="#30b040"/></g><rect x="1285" y="144" width="1.2" height="22" fill="#a8a8a8"/><rect x="1286.2" y="144" width="1" height="22" fill="#fff"/><g transform="translate(1299,147.5)"><path d="M0.3 0.3 l8.2 7.1 l-8.2 7.1z" fill="#30a030" stroke="#207020" stroke-width=".6"/></g><g transform="translate(1326,149)"><rect x="0.5" y="0.5" width="11" height="11" rx="1" fill="#e0e0e0" stroke="#c8c8c8"/></g><g transform="translate(1356,149)"><rect x="0" y="0" width="3" height="11" rx="1" fill="#d0d0d0"/><rect x="6" y="0" width="3" height="11" rx="1" fill="#d0d0d0"/></g><rect x="1378" y="144" width="1.2" height="22" fill="#a8a8a8"/><rect x="1379.2" y="144" width="1" height="22" fill="#fff"/><g transform="translate(1385,145)"><rect x="0.5" y="1.5" width="19" height="17" fill="#eeeadc" stroke="#a8a8a8"/><path d="M7 2 v16 M13 2 v16 M1 8 h18 M1 13 h18" stroke="#c8c8c8"/><path d="M2 18 l5 -6 l5 -3 l6 -7" stroke="#e04050" stroke-width="1.5" fill="none"/><rect x="1" y="14" width="4" height="4" fill="#e03040"/><rect x="7" y="8" width="4" height="4" fill="#e03040"/><rect x="13" y="3" width="4" height="4" fill="#e03040"/></g><g transform="translate(1414,145)"><rect x="0.5" y="1.5" width="19" height="17" fill="#eeeadc" stroke="#a8a8a8"/><path d="M7 2 v16 M13 2 v16 M1 8 h18 M1 13 h18" stroke="#c8c8c8"/><path d="M2 18 l5 -6 l5 -3 l6 -7" stroke="#e04050" stroke-width="1.5" fill="none"/><rect x="4" y="11" width="4" height="4" fill="#fff" stroke="#e04050"/><rect x="10" y="7" width="4" height="4" fill="#fff" stroke="#e04050"/><rect x="15" y="2" width="4" height="4" fill="#fff" stroke="#e04050"/></g><rect x="1442" y="144" width="1.2" height="22" fill="#a8a8a8"/><rect x="1443.2" y="144" width="1" height="22" fill="#fff"/><g transform="translate(1449,145)"><rect x="0.5" y="2.5" width="18" height="15" fill="#f4f6fa" stroke="#4e6a90" stroke-width="1.2"/><rect x="3" y="5" width="13" height="10" fill="#fff4ec" stroke="#f08010" stroke-width="1.8" stroke-dasharray="1.5 .8"/></g><g transform="translate(1478,145)"><rect x="0.5" y="2.5" width="18" height="15" fill="#f4f6fa" stroke="#4e6a90" stroke-width="1.2"/><path d="M4 6 h4 M6 4 v4" stroke="#f08020" stroke-width="1.4"/><path d="M11 6 h4 M13 4 v4" stroke="#f08020" stroke-width="1.4"/><path d="M4 13 h4 M6 11 v4" stroke="#f08020" stroke-width="1.4"/><path d="M11 13 h4 M13 11 v4" stroke="#f08020" stroke-width="1.4"/></g><rect x="1505" y="144" width="1.2" height="22" fill="#a8a8a8"/><rect x="1506.2" y="144" width="1" height="22" fill="#fff"/><rect x="1509" y="142" width="27" height="26" fill="#f6f6f6"/><path d="M1509.75 168 V142.75 H1536" stroke="#b4b4b4" stroke-width="1.5" fill="none"/><g transform="translate(1514,145)"><rect x="0.5" y="2.5" width="18" height="16" fill="#f4f6fa" stroke="#4e6a90" stroke-width="1.2"/><path d="M3 3 v13 h15" stroke="#aab" stroke-width="1" fill="none"/><rect x="6" y="5" width="1.6" height="10" fill="#f09020"/><rect x="9" y="5" width="1.6" height="10" fill="#f09020"/><rect x="12" y="5" width="1.6" height="10" fill="#f09020"/><rect x="15" y="5" width="1.6" height="10" fill="#f09020"/></g><rect x="1537" y="142" width="28" height="26" fill="#f6f6f6"/><path d="M1537.75 168 V142.75 H1565" stroke="#b4b4b4" stroke-width="1.5" fill="none"/><g transform="translate(1542,145)"><rect x="0.5" y="2.5" width="18" height="16" fill="#f4f6fa" stroke="#4e6a90" stroke-width="1.2"/><path d="M3 3 v13 h15" stroke="#aab" stroke-width="1" fill="none"/><rect x="5" y="5.0" width="12" height="1.5" fill="#f09020"/><rect x="5" y="7.8" width="12" height="1.5" fill="#f09020"/><rect x="5" y="10.6" width="12" height="1.5" fill="#f09020"/><rect x="5" y="13.399999999999999" width="12" height="1.5" fill="#f09020"/></g><rect x="1566" y="142" width="28" height="26" fill="#f6f6f6"/><path d="M1566.75 168 V142.75 H1594" stroke="#b4b4b4" stroke-width="1.5" fill="none"/><g transform="translate(1571,145)"><rect x="0.5" y="2.5" width="18" height="16" fill="#f4f6fa" stroke="#4e6a90" stroke-width="1.2"/><path d="M3 3 v13 h15" stroke="#aab" stroke-width="1" fill="none"/><rect x="7.0" y="5" width="1.6" height="10" fill="#f09020"/><rect x="10.5" y="5" width="1.6" height="10" fill="#f09020"/><rect x="14.0" y="5" width="1.6" height="10" fill="#f09020"/></g><g transform="translate(1599,145)"><rect x="0.5" y="2.5" width="18" height="16" fill="#f4f6fa" stroke="#4e6a90" stroke-width="1.2"/><path d="M3 3 v13 h15" stroke="#aab" stroke-width="1" fill="none"/><rect x="8" y="5" width="1.6" height="10" fill="#f09020"/><rect x="13" y="5" width="1.6" height="10" fill="#f09020"/></g><rect x="1627" y="144" width="1.2" height="22" fill="#a8a8a8"/><rect x="1628.2" y="144" width="1" height="22" fill="#fff"/><g transform="translate(1634,145)"><rect x="0.5" y="2.5" width="18" height="16" fill="#f4f6fa" stroke="#4e6a90" stroke-width="1.2"/><path d="M3 3 v13" stroke="#aab"/><path d="M3 11 h14" stroke="#333" stroke-width="1.8"/></g><g transform="translate(1662,145)"><rect x="0.5" y="2.5" width="18" height="16" fill="#f4f6fa" stroke="#4e6a90" stroke-width="1.2"/><path d="M3 3 v13" stroke="#aab"/><path d="M3 10 h14 M10 3 v14" stroke="#333" stroke-width="1.2" stroke-dasharray="1.5 1.2"/></g><rect x="1690" y="144" width="1.2" height="22" fill="#a8a8a8"/><rect x="1691.2" y="144" width="1" height="22" fill="#fff"/><g transform="translate(1697,145)"><path d="M16 16 l3 3" stroke="#e09030" stroke-width="3"/><circle cx="9.5" cy="9.5" r="8.5" fill="#cfe0f6" stroke="#707a88" stroke-width="1.5"/><text x="9.5" y="14" font-family="Liberation Serif" font-weight="bold" font-size="14" text-anchor="middle" fill="#111">x</text></g><g transform="translate(1726,145)"><path d="M16 16 l3 3" stroke="#e09030" stroke-width="3"/><circle cx="9.5" cy="9.5" r="8.5" fill="#cfe0f6" stroke="#707a88" stroke-width="1.5"/><text x="9.5" y="13" font-family="Liberation Serif" font-weight="bold" font-size="14" text-anchor="middle" fill="#111">y</text></g><g transform="translate(1755,145)"><path d="M16 16 l3 3" stroke="#e09030" stroke-width="3"/><circle cx="9.5" cy="9.5" r="8.5" fill="#cfe0f6" stroke="#707a88" stroke-width="1.5"/><text x="9" y="14" font-family="Liberation Serif" font-style="italic" font-weight="bold" font-size="12" text-anchor="middle" fill="#222">fx</text></g><g transform="translate(1784,145)"><path d="M16 16 l3 3" stroke="#e09030" stroke-width="3"/><circle cx="9.5" cy="9.5" r="8.5" fill="#cfe0f6" stroke="#707a88" stroke-width="1.5"/><path d="M3.5 7 h12 M3.5 10 h12 M3.5 13 h12" stroke="#e02050" stroke-width="2"/></g><rect x="1812" y="144" width="1.2" height="22" fill="#a8a8a8"/><rect x="1813.2" y="144" width="1" height="22" fill="#fff"/><g transform="translate(1819,145)"><rect x="0.5" y="5.5" width="15" height="13" fill="#fff" stroke="#4a6aa0"/><rect x="1" y="6" width="14" height="3" fill="#8ab0f0"/><path d="M1 12 h14 M1 15 h14 M6 9 v9 M11 9 v9" stroke="#8aa8d8"/><path d="M9 13 l9 -10 l3 3 l-9 10z" fill="#eef2f8" stroke="#6a7a98"/></g><rect x="1847" y="144" width="1.2" height="22" fill="#a8a8a8"/><rect x="1848.2" y="144" width="1" height="22" fill="#fff"/><rect x="970" y="176" width="28" height="26" fill="#f6f6f6"/><path d="M970.75 202 V176.75 H998" stroke="#b4b4b4" stroke-width="1.5" fill="none"/><g transform="translate(975,179)"><rect x="1" y="3" width="18" height="14" fill="#fff"/><path d="M1 2 v17 M0 3 h20 M0 17 h20" stroke="#888" stroke-width="1.2"/><path d="M1 10 h18" stroke="#10a010" stroke-width="2"/><rect x="1" y="8" width="4" height="4" fill="#10a010"/><rect x="15" y="8" width="4" height="4" fill="#10a010"/><path d="M10 3 v14" stroke="#111" stroke-dasharray="1.5 1.5" stroke-width="1.2"/><circle cx="10" cy="10" r="1.8" fill="#111"/></g><g transform="translate(1002,179)"><rect x="1" y="3" width="18" height="14" fill="#fff"/><path d="M1 2 v17 M0 3 h20 M0 17 h20" stroke="#888" stroke-width="1.2"/><path d="M1 9 h18" stroke="#10a010" stroke-width="1.8"/><rect x="1" y="7" width="4" height="4" fill="#10a010"/><rect x="15" y="7" width="4" height="4" fill="#10a010"/><path d="M10 3 v14" stroke="#111" stroke-dasharray="1.5 1.5" stroke-width="1.2"/></g><g transform="translate(1031,179)"><rect x="1" y="3" width="18" height="14" fill="#fff"/><path d="M1 2 v17 M0 3 h20 M0 17 h20" stroke="#888" stroke-width="1.2"/><path d="M2 17 q8 -26 16 0" stroke="#10a010" stroke-width="1.5" fill="none"/><path d="M10 3 v14" stroke="#111" stroke-dasharray="1.5 1.5"/></g><g transform="translate(1060,179)"><rect x="1" y="3" width="18" height="14" fill="#fff"/><path d="M1 2 v17 M0 3 h20 M0 17 h20" stroke="#888" stroke-width="1.2"/><path d="M2 3 q8 26 16 0" stroke="#10a010" stroke-width="1.5" fill="none"/><path d="M10 3 v14" stroke="#111" stroke-dasharray="1.5 1.5"/></g><g transform="translate(1089,179)"><rect x="1" y="3" width="18" height="14" fill="#fff"/><path d="M1 2 v17 M0 3 h20 M0 17 h20" stroke="#888" stroke-width="1.2"/><path d="M1 12 q3 -6 5 0 q3 8 6 -1 q3 -9 6 0" stroke="#10a010" stroke-width="1.5" fill="none"/><path d="M14 3 v14" stroke="#111" stroke-dasharray="1.5 1.5"/></g><g transform="translate(1117,179)"><rect x="1" y="3" width="18" height="14" fill="#fff"/><path d="M1 2 v17 M0 3 h20 M0 17 h20" stroke="#888" stroke-width="1.2"/><path d="M1 6 q2 -4 4 0 q2 4 4 -1 q4 -4 5 6 q3 6 5 -4" stroke="#10a010" stroke-width="1.5" fill="none"/><path d="M14 3 v14" stroke="#111" stroke-dasharray="1.5 1.5"/></g><g transform="translate(1146,179)"><rect x="1" y="3" width="18" height="14" fill="#fff"/><path d="M1 2 v17 M0 3 h20 M0 17 h20" stroke="#888" stroke-width="1.2"/><path d="M1 17 l18 -14" stroke="#10a010" stroke-width="1.5"/><path d="M9 3 v14" stroke="#111" stroke-dasharray="1.5 1.5"/></g><g transform="translate(1175,179)"><rect x="1" y="3" width="18" height="14" fill="#fff"/><path d="M1 2 v17 M0 3 h20 M0 17 h20" stroke="#888" stroke-width="1.2"/><path d="M1 8 q5 -4 8 3 q4 6 10 -3 M1 14 q6 -14 14 3" stroke="#10a010" stroke-width="1.2" fill="none"/><path d="M6 3 v14" stroke="#111" stroke-dasharray="1.5 1.5"/></g><g transform="translate(1204,179)"><rect x="1" y="3" width="18" height="14" fill="#fff"/><path d="M1 2 v17 M0 3 h20 M0 17 h20" stroke="#888" stroke-width="1.2"/><path d="M1 6 q5 8 10 4 q3 -4 8 2 M1 16 q8 -10 16 -8" stroke="#10a010" stroke-width="1.2" fill="none"/><path d="M7 3 v14" stroke="#111" stroke-dasharray="1.5 1.5"/></g><g transform="translate(1232,179)"><rect x="1" y="3" width="18" height="14" fill="#fff"/><path d="M1 2 v17 M0 3 h20 M0 17 h20" stroke="#888" stroke-width="1.2"/><path d="M1 5 q9 8 18 0 M1 9 q9 8 18 0 M1 13 q9 8 18 0" stroke="#10a010" stroke-width="1.5" fill="none"/><path d="M10 3 v14" stroke="#111" stroke-dasharray="1.5 1.5"/></g><g transform="translate(1261,179)"><rect x="1" y="3" width="18" height="14" fill="#fff"/><path d="M1 2 v17 M0 3 h20 M0 17 h20" stroke="#888" stroke-width="1.2"/><path d="M1 9 q9 -8 18 0 M1 13 q9 -8 18 0 M1 17 q9 -8 18 0" stroke="#10a010" stroke-width="1.5" fill="none"/><path d="M10 3 v14" stroke="#111" stroke-dasharray="1.5 1.5"/></g><rect x="1289" y="178" width="1.2" height="22" fill="#a8a8a8"/><rect x="1290.2" y="178" width="1" height="22" fill="#fff"/><g transform="translate(1296,179)"><rect x="0.5" y="2.5" width="13" height="15" rx="2" fill="#e8b830" stroke="#a07818"/><rect x="4" y="0.5" width="6" height="4" fill="#c8a040" stroke="#8a6a20"/><rect x="5.5" y="8.5" width="14" height="11" fill="#eef3fa" stroke="#4a6090"/><path d="M8 14 l2 -2 l2 2 l2 -2 l2 2" stroke="#e04030" stroke-width="1.2" fill="none"/><rect x="6" y="16" width="13" height="2" fill="#5a7ad0"/></g><path d="M1326.0 187 h9 l-4.5 4.5z" fill="#000"/><rect x="1343" y="178" width="1.2" height="22" fill="#a8a8a8"/><rect x="1344.2" y="178" width="1" height="22" fill="#fff"/><g transform="translate(1352,179)"><rect x="0.5" y="0.5" width="15" height="17" fill="#eef3fb" stroke="#5a7ab8"/><rect x="1" y="1" width="14" height="3" fill="#5a90e8"/><path d="M3 7 h10 M3 10 h10 M3 13 h10" stroke="#5a6a8a" stroke-width="1.2"/></g><rect x="1378" y="178" width="1.2" height="22" fill="#a8a8a8"/><rect x="1379.2" y="178" width="1" height="22" fill="#fff"/><g transform="translate(1385,179)"><rect x="0.5" y="2.5" width="13" height="15" rx="2" fill="#e8b830" stroke="#a07818"/><rect x="4" y="0.5" width="6" height="4" fill="#c8a040" stroke="#8a6a20"/><rect x="5.5" y="8.5" width="14" height="11" fill="#eef3fa" stroke="#4a6090"/><text x="12.5" y="17.5" font-family="Liberation Serif" font-size="9" text-anchor="middle" fill="#222">123</text></g><rect x="1413" y="178" width="1.2" height="22" fill="#a8a8a8"/><rect x="1414.2" y="178" width="1" height="22" fill="#fff"/><g transform="translate(1421,179)"><path d="M1 1 h18 M1 10 h18 M1 19 h18" stroke="#111" stroke-width="1.5"/><path d="M0 1 l3 -2 v4z M20 1 l-3 -2 v4z M0 10 l3 -2 v4z M20 10 l-3 -2 v4z M0 19 l3 -2 v4z M20 19 l-3 -2 v4z" fill="#111"/><rect x="5" y="5" width="10" height="10" fill="#d8e8fa" stroke="#4a6a98"/><path d="M6 13 l3 -3 l2 1 l3 -4" stroke="#e04040" fill="none"/></g><rect x="1445" y="176" width="28" height="26" fill="#f6f6f6"/><path d="M1445.75 202 V176.75 H1473" stroke="#b4b4b4" stroke-width="1.5" fill="none"/><g transform="translate(1450,179)"><path d="M1 1 v18 M10 1 v18 M19 1 v18" stroke="#111" stroke-width="1.5"/><path d="M1 0 l-2 3 h4z M1 20 l-2 -3 h4z M10 0 l-2 3 h4z M10 20 l-2 -3 h4z M19 0 l-2 3 h4z M19 20 l-2 -3 h4z" fill="#111"/><rect x="4" y="5" width="13" height="10" fill="#d8e8fa" stroke="#4a6a98"/><path d="M5 13 l4 -3 l2 1 l4 -4" stroke="#e04040" fill="none"/></g><rect x="1477" y="178" width="1.2" height="22" fill="#a8a8a8"/><rect x="1478.2" y="178" width="1" height="22" fill="#fff"/><g transform="translate(1484,179)"><path d="M12.2 12.2 l6 6" stroke="#d8a030" stroke-width="3.5" stroke-linecap="round"/><circle cx="8" cy="8" r="7" fill="#dce9f8" stroke="#6a7a8a" stroke-width="1.6"/><path d="M4.5 8 h7 M8 4.5 v7" stroke="#2a5ab8" stroke-width="2.2"/></g><g transform="translate(1512,179)"><path d="M12.2 12.2 l6 6" stroke="#d8a030" stroke-width="3.5" stroke-linecap="round"/><circle cx="8" cy="8" r="7" fill="#dce9f8" stroke="#6a7a8a" stroke-width="1.6"/><path d="M4.5 8 h7" stroke="#2a5ab8" stroke-width="2.2"/></g><g transform="translate(1541,179)"><rect x="6" y="0.5" width="13" height="8" fill="#eef2f8" stroke="#6a7a98"/><text x="12.5" y="7.5" font-size="6.5" text-anchor="middle" fill="#333">100</text><path d="M7.699999999999999 15.7 l6 6" stroke="#d8a030" stroke-width="3.5" stroke-linecap="round"/><circle cx="5" cy="13" r="4.5" fill="#dce9f8" stroke="#889" stroke-width="1.6"/></g><rect x="1569" y="178" width="1.2" height="22" fill="#a8a8a8"/><rect x="1570.2" y="178" width="1" height="22" fill="#fff"/><g transform="translate(1577,179)"><rect x="1" y="3" width="5" height="6" fill="#b8b8b8"/><rect x="7" y="3" width="5" height="6" fill="#c4c4c4"/><rect x="13" y="3" width="5" height="6" fill="#a8a8a8"/><rect x="1" y="10" width="5" height="6" fill="#b0b0b0"/><rect x="7" y="10" width="5" height="6" fill="#b8b8b8"/><rect x="13" y="10" width="5" height="6" fill="#e0e0e0"/></g><path d="M1606.0 187 h9 l-4.5 4.5z" fill="#b0b0b0"/><g transform="translate(1625,179)"><text x="9" y="18" font-family="Liberation Serif" font-weight="bold" font-size="20" text-anchor="middle" fill="#2a4a98">A</text></g><rect x="1652" y="178" width="1.2" height="22" fill="#a8a8a8"/><rect x="1653.2" y="178" width="1" height="22" fill="#fff"/><g transform="translate(1659,179)"><rect x="1" y="1" width="9" height="9" fill="#ddd" stroke="#c8c8c8"/><rect x="5" y="5" width="11" height="11" fill="#d0d0d0" stroke="#bbb"/><rect x="12" y="13" width="6" height="6" fill="#ccc" stroke="#bbb"/></g><g transform="translate(1688,179)"><rect x="1" y="1" width="7" height="7" fill="#ddd" stroke="#c8c8c8"/><rect x="5" y="5" width="7" height="7" fill="#d4d4d4" stroke="#c0c0c0"/><rect x="10" y="10" width="8" height="8" fill="#ccc" stroke="#bbb"/></g><path d="M0.5 93 V876 M1917.5 93 V876" stroke="#a0a0a0"/><path d="M5.5 97 V870" stroke="#b0b0b0"/><circle cx="12" cy="14.5" r="10" fill="#e8c018"/><circle cx="12" cy="14.5" r="7.2" fill="#58b030"/><text x="12" y="19.5" font-size="12" font-weight="bold" text-anchor="middle" fill="#3a2a10" font-family="Liberation Serif">11</text><path d="M1765 13.5 h12" stroke="#fff" stroke-width="1"/><rect x="1823.5" y="10.5" width="8.5" height="8.5" fill="none" stroke="#fff"/><path d="M1825.5 10.5 v-2.5 h8.5 v8.5 h-2" fill="none" stroke="#fff"/><path d="M1881.5 8 l12 12 M1893.5 8 l-12 12" stroke="#fff" stroke-width="1.2"/><rect x="20.5" y="113.5" width="19" height="19" rx="1" fill="#c8c8c8" stroke="#111" stroke-width="1.4"/><path d="M22 117 h3 M24 117 l0 8 l3 3 M26 119 h6 M30 115 v12 M34 118 h3 M34 121 h3 M34 125 h3" stroke="#1a3aff" stroke-width="1.2" fill="none"/><rect x="34" y="115" width="3" height="2" fill="#f02020"/><rect x="26" y="118" width="3" height="2" fill="#f02020"/><rect x="35" y="123" width="3" height="2" fill="#f02020"/><rect x="23" y="129" width="10" height="2" fill="#e8e8e8"/><rect x="969" y="113.5" width="19" height="19" rx="1" fill="#fff" stroke="#111" stroke-width="1.4"/><rect x="970" y="114.5" width="17" height="3.5" fill="#0000ff"/><rect x="974" y="122" width="12" height="9" fill="#00ffff" stroke="#111" stroke-width="1.2"/><path d="M975 127 q5 -4 10 0" stroke="#222" fill="none"/><path d="M971 124 h1 M971 127 h1 M971 130 h1" stroke="#555"/><defs><linearGradient id="gblue" x1="0" y1="0" x2="0" y2="1"><stop offset="0" stop-color="#d4e2f2"/><stop offset=".5" stop-color="#b8cde6"/><stop offset=".55" stop-color="#9fb8d6"/><stop offset="1" stop-color="#c4d6ec"/></linearGradient><linearGradient id="gred" x1="0" y1="0" x2="0" y2="1"><stop offset="0" stop-color="#eeb0a0"/><stop offset=".45" stop-color="#d87060"/><stop offset=".55" stop-color="#c04428"/><stop offset="1" stop-color="#e08a70"/></linearGradient><linearGradient id="ginact" x1="0" y1="0" x2="0" y2="1"><stop offset="0" stop-color="#dfe8f2"/><stop offset=".5" stop-color="#cfdcea"/><stop offset=".55" stop-color="#c4d3e4"/><stop offset="1" stop-color="#d8e3ef"/></linearGradient></defs><rect x="816.5" y="112" width="39" height="21.5" rx="3" fill="url(#gblue)" stroke="#5a6a8a"/><rect x="829.0" y="121" width="14" height="6" rx="2" fill="#5a5a6a"/><rect x="830.0" y="122" width="12" height="4" rx="1.5" fill="#f6f6f6"/><rect x="859.5" y="112" width="39" height="21.5" rx="3" fill="url(#gblue)" stroke="#5a6a8a"/><rect x="872.5" y="116" width="13" height="11" rx="1.5" fill="#4a4a5a"/><rect x="873.5" y="117" width="11" height="9" rx="1" fill="#f4f4f4"/><rect x="876.0" y="120" width="6" height="3.5" fill="#7a8aa8" stroke="#3a3a4a" stroke-width=".8"/><rect x="902.5" y="112" width="38" height="21.5" rx="3" fill="url(#gred)" stroke="#6a2a2a"/><path d="M916.5 117.5 l10 9 M926.5 117.5 l-10 9" stroke="#4a3a3a" stroke-width="4.8"/><path d="M916.5 117.5 l10 9 M926.5 117.5 l-10 9" stroke="#f6f6f6" stroke-width="2.8"/><rect x="1774.5" y="112" width="39" height="21.5" rx="3" fill="url(#ginact)" stroke="#8898b8"/><rect x="1787.0" y="121" width="14" height="6" rx="2" fill="#5a5a6a"/><rect x="1788.0" y="122" width="12" height="4" rx="1.5" fill="#f6f6f6"/><rect x="1816.5" y="112" width="39" height="21.5" rx="3" fill="url(#ginact)" stroke="#8898b8"/><rect x="1829.5" y="116" width="13" height="11" rx="1.5" fill="#4a4a5a"/><rect x="1830.5" y="117" width="11" height="9" rx="1" fill="#f4f4f4"/><rect x="1833.0" y="120" width="6" height="3.5" fill="#7a8aa8" stroke="#3a3a4a" stroke-width=".8"/><rect x="1859.5" y="112" width="39" height="21.5" rx="3" fill="url(#ginact)" stroke="#8898b8"/><path d="M1874.0 117.5 l10 9 M1884.0 117.5 l-10 9" stroke="#6a6a78" stroke-width="4.8"/><path d="M1874.0 117.5 l10 9 M1884.0 117.5 l-10 9" stroke="#f6f6f6" stroke-width="2.8"/><path d="M926 227.5 h10 l-5 -5z" fill="#000"/><path d="M926 825 h10 l-5 5z" fill="#000"/><path d="M566 847.5 l5 -5 v10z" fill="#000"/><path d="M914 847.5 l-5 -5 v10z" fill="#000"/><path d="M31 842.0 v11" stroke="#000" stroke-width="1.6"/><path d="M32.5 847.5 l6 -5.5 v11z" fill="#000"/><path d="M52 847.5 l6 -5.5 v11z" fill="#000"/><path d="M78 847.5 l-6 -5.5 v11z" fill="#000"/><path d="M99.5 842.0 v11" stroke="#000" stroke-width="1.6"/><path d="M97.5 847.5 l-6 -5.5 v11z" fill="#000"/><path d="M151 838 L161 857 H193 L203 838z" fill="#f0f0f0"/><path d="M161 857 H193" stroke="#9a9a9a" stroke-width="1.4"/><path d="M151 838 L161 857 M193 857 L203 838" stroke="#111" stroke-width="1.3"/><path d="M193 838 L203 857 H252 L262 838z" fill="#f0f0f0"/><path d="M203 857 H252" stroke="#9a9a9a" stroke-width="1.4"/><path d="M193 838 L203 857 M252 857 L262 838" stroke="#111" stroke-width="1.3"/><path d="M252 838 L262 857 H294 L303 838z" fill="#f0f0f0"/><path d="M262 857 H294" stroke="#9a9a9a" stroke-width="1.4"/><path d="M252 838 L262 857 M294 857 L303 838" stroke="#111" stroke-width="1.3"/><path d="M106 838 H553" stroke="#1a1a1a" stroke-width="1.3"/><path d="M107 838 L116 857 H152 L161 838z" fill="#fff"/><path d="M116 857 H152" stroke="#fff" stroke-width="1.4"/><path d="M107 838 L116 857 M152 857 L161 838" stroke="#111" stroke-width="1.3"/><text x="117.5" y="852.5" font-size="14.5" font-weight="bold" fill="#000" textLength="32" lengthAdjust="spacingAndGlyphs">Main</text><text x="166" y="852.5" font-size="14.5" fill="#111" textLength="23" lengthAdjust="spacingAndGlyphs">Text</text><text x="208" y="852.5" font-size="14.5" fill="#111" textLength="41" lengthAdjust="spacingAndGlyphs">Models</text><text x="268" y="852.5" font-size="14.5" fill="#111" textLength="21" lengthAdjust="spacingAndGlyphs">Info</text><rect x="968" y="836" width="8" height="21" fill="#ececec"/><path d="M983.0 846.5 h7 l-3.5 3.5z" fill="#000"/><path d="M1002.5 840.0 v11" stroke="#000" stroke-width="1.6"/><path d="M1004.0 845.5 l6 -5.5 v11z" fill="#000"/><path d="M1023.5 845.5 l6 -5.5 v11z" fill="#000"/><path d="M1049.5 845.5 l-6 -5.5 v11z" fill="#000"/><path d="M1071.0 840.0 v11" stroke="#000" stroke-width="1.6"/><path d="M1069.0 845.5 l-6 -5.5 v11z" fill="#000"/><path d="M1078 835.5 H1877" stroke="#111" stroke-width="1.4"/><path d="M1078 835.5 L1087 855 H1123 L1133 835.5" fill="#fff" stroke="#222" stroke-width="1.2"/><text x="1088" y="850" font-size="14.5" font-weight="bold" fill="#000" textLength="33" lengthAdjust="spacingAndGlyphs">Main</text><rect x="1877" y="835" width="22" height="8" fill="#f4f4f4"/><path d="M1877 843 h22 v-8" stroke="#808080" stroke-width="1.6" fill="none"/><rect x="5.5" y="877" width="80" height="23" fill="#f0f0f0"/><path d="M5.5 900 V877 H85.5 V900" stroke="#fff" fill="none"/><path d="M5.5 900.5 H85.5" stroke="#707070" stroke-width="1.5"/><text x="11" y="893.5" font-size="14" fill="#1a1a1a" textLength="68" lengthAdjust="spacingAndGlyphs">AC Analysis</text><rect x="86.5" y="876" width="272" height="27" fill="#f0f0f0"/><path d="M86.5 903 V876.5" stroke="#fff"/><path d="M86.5 902.5 H357 l1.5 -1.5 V877" stroke="#707070" stroke-width="1.5" fill="none"/><text x="96" y="896.5" font-size="14" fill="#1a1a1a" textLength="254" lengthAdjust="spacingAndGlyphs">Тонкомпенсация из Беларусь M310C.cir</text><path d="M0.5 877 V906" stroke="#a0a0a0"/><path d="M0 907.5 H1920" stroke="#fff"/><path d="M6 923 l5 5 M11 923 l-5 5" stroke="#000" stroke-width="1.8"/><rect x="5.5" y="936" width="6" height="59" fill="#fafafa" stroke="#a8a8a8"/><path d="M8.5 936 v59" stroke="#d8d8d8"/><text x="3.5" y="1023.7" font-size="19" fill="#111" textLength="98.5" lengthAdjust="spacingAndGlyphs">Select Mode</text><path d="M1 1030 V1005 H198 M201 1030 V1005 H1565 M1568 1030 V1005 H1792 M1795 1030 V1005 H1920" stroke="#a0a0a0" fill="none" stroke-width="1.2"/><path d="M198.5 1005 V1030 M1565.5 1005 V1030 M1792.5 1005 V1030" stroke="#fff" stroke-width="1.2"/><rect x="620" y="1030" width="61" height="50" fill="#3b3b3b"/><rect x="253" y="1077" width="51" height="3" fill="#9a9a9a"/><rect x="620" y="1077" width="61" height="3" fill="#9a9a9a"/><rect x="749" y="1077" width="51" height="3" fill="#9a9a9a"/><rect x="873" y="1077" width="51" height="3" fill="#9a9a9a"/><path d="M20 1047 l8 -1.2 v8.2 h-8z M29.5 1045.6 l10.5 -1.6 v10 h-10.5z M20 1056 h8 v8.2 l-8 -1.2z M29.5 1056 h10.5 v10 l-10.5 -1.6z" fill="#fff"/><circle cx="94" cy="1052" r="9" fill="none" stroke="#fff" stroke-width="2.4"/><path d="M87.5 1058.5 l-10 10" stroke="#fff" stroke-width="2.6" stroke-linecap="round"/><text x="139" y="1058" font-size="15" font-weight="bold" fill="#7ed020">mp</text><text x="160" y="1054" font-size="12" font-weight="bold" fill="#3a9af0">3</text><path d="M148 1064 h17 M154 1056 v12" stroke="#bbb" stroke-width="1.6"/><circle cx="150" cy="1064" r="3" fill="none" stroke="#bbb" stroke-width="1.4"/><path d="M203 1064 v-8 a13 13 0 0 1 26 0 v8" fill="none" stroke="#1a20e0" stroke-width="3"/><rect x="201" y="1056" width="5" height="10" rx="2" fill="#1a20e0"/><rect x="226" y="1056" width="5" height="10" rx="2" fill="#1a20e0"/><path d="M207 1060 l2 -5 l2 8 l2 -10 l2 12 l2 -9 l2 7 l2 -5 l2 4" stroke="#f04010" stroke-width="2" fill="none"/><path d="M207 1060 h18" stroke="#f0d020" stroke-width="1"/><circle cx="278" cy="1055" r="15" fill="#e8453c"/><path d="M278 1055 L265 1062.5 A15 15 0 0 0 285.5 1068 Z" fill="#34a853"/><path d="M278 1055 L285.5 1068 A15 15 0 0 0 293 1055 L278 1055" fill="#fbbc05"/><path d="M278 1055 L293 1055 A15 15 0 0 0 291 1047.5 L278 1047.5Z" fill="#fbbc05"/><path d="M264.5 1062 A15 15 0 0 1 266 1046 L272 1056z" fill="#34a853"/><circle cx="278" cy="1055" r="6.8" fill="#fff"/><circle cx="278" cy="1055" r="5.2" fill="#4285f4"/><path d="M325 1046 l6 -2 h18 l6 2 l-4 6 l-11 13 l-11 -13z" fill="#e81010"/><path d="M333 1048 h14 l-7 10z" fill="#f0e020"/><circle cx="401" cy="1055" r="14" fill="#1a1a1a"/><circle cx="401" cy="1055" r="12" fill="#f0b010"/><path d="M394 1061 l7 -13 l7 13z" fill="none" stroke="#111" stroke-width="2.6"/><path d="M452 1047 q0 -6 8 -7 h8 q8 1 8 9 v7 q0 7 -8 8 h-7 l-5 5 v-5 q-4 -1 -4 -6z" fill="#7360f2" stroke="#fff" stroke-width="2"/><path d="M458 1048 q1 6 7 10 l3 -2 l2 3 q-2 3 -5 1 q-8 -4 -9 -11 q0 -3 2 -3z" fill="#fff"/><path d="M514 1043 l7 6 h8 l7 -6 v10 q0 10 -11 15 q-11 -5 -11 -15z" fill="#fff"/><path d="M518 1055 l5 2 M532 1055 l-5 2 M522 1063 l3 2 l3 -2" stroke="#222" stroke-width="1.6" fill="none"/><circle cx="588" cy="1055" r="15.5" fill="#fff"/><path d="M581 1046 l7 9 l7 -9 M588 1055 v11" stroke="#fc3f1d" stroke-width="3.4" fill="none"/><circle cx="650" cy="1055" r="14.5" fill="#d8b020"/><circle cx="650" cy="1055" r="11.5" fill="#6aa828"/><circle cx="650" cy="1055" r="12.5" fill="none" stroke="#8a6a10" stroke-width="1"/><path d="M646 1048 v14 M653 1048 v14" stroke="#7a1020" stroke-width="3"/><rect x="709" y="1040" width="5" height="7" fill="#20c020"/><circle cx="711" cy="1057" r="8" fill="#20c020"/><circle cx="711" cy="1057" r="3" fill="#111"/><rect x="717" y="1053" width="10" height="8" fill="#20c020"/><rect x="760" y="1042" width="24" height="25" fill="#f4f0d8" stroke="#999"/><path d="M762 1042 h20" stroke="#555" stroke-width="2" stroke-dasharray="1.5 1.5"/><path d="M763 1050 h18 M763 1054 h18 M763 1058 h14" stroke="#bbb"/><path d="M770 1064 l14 -14 l3 3 l-14 14z" fill="#f0a020"/><rect x="830" y="1041" width="12" height="13" rx="4" fill="#fff"/><path d="M831 1045 h10 M831 1049 h10" stroke="#1c1c1c" stroke-width="1.2"/><path d="M823 1058 h26" stroke="#fff" stroke-width="3"/><path d="M836 1058 l-10 10 M836 1058 l10 10" stroke="#fff" stroke-width="3.5"/><circle cx="897" cy="1052" r="14" fill="#2aa3e0"/><path d="M888 1052 l16 -7 l-3 14 l-4 -3 l-3 3 v-4 l7 -6 l-9 5z" fill="#fff"/><circle cx="906" cy="1062" r="9" fill="#707070" stroke="#1c1c1c" stroke-width="1.2"/><text x="906" y="1066.5" font-size="12" text-anchor="middle" fill="#fff">13</text><rect x="945.5" y="1040.5" width="29" height="29" fill="#1a1a1a" stroke="#2a9ae0" stroke-width="1.4"/><rect x="951" y="1049" width="18" height="12" fill="none" stroke="#fff" stroke-width="1.8"/><path d="M955 1049 v12 M965 1049 v12" stroke="#fff" stroke-width="1.6"/><path d="M1007 1050 q7 -12 22 -8 q7 3 5 12 q-3 12 -16 16 q-10 -8 -11 -20z" fill="#a86a50"/><path d="M1007 1050 q4 12 11 20 q-3 -14 3 -22 q-7 -2 -14 2z" fill="#48a840"/><path d="M1021 1048 q9 -4 13 6" stroke="#fff" stroke-width="2" fill="none"/><path d="M1609 1059 l8 -8 l8 8" stroke="#fff" stroke-width="1.5" fill="none"/><path d="M1637 1054 l20 -9 l-5 16 l-5 -4 z" fill="#fff"/><circle cx="1642" cy="1061" r="2.5" fill="#888"/><path d="M1667 1051 h4 l6 -5 v18 l-6 -5 h-4z" fill="none" stroke="#fff" stroke-width="1.3"/><path d="M1680 1051 q2 4 0 8 M1683 1048 q4 7 0 14 M1686 1046 q5 9 0 18" stroke="#fff" stroke-width="1.3" fill="none"/><path d="M1702 1063 a14 14 0 0 1 14 -14 M1706 1063 a10 10 0 0 1 10 -10 M1710 1063 a6 6 0 0 1 6 -6" stroke="#aaa" stroke-width="1.3" fill="none"/><circle cx="1715" cy="1062" r="1.8" fill="#fff"/><text x="1730.5" y="1061.3" font-size="16.5" fill="#fff" textLength="28" lengthAdjust="spacingAndGlyphs">ENG</text><text x="1792.5" y="1049.2" font-size="16.5" fill="#fff" textLength="34.5" lengthAdjust="spacingAndGlyphs">21:43</text><text x="1775.5" y="1072.6" font-size="17" fill="#fff" textLength="69.5" lengthAdjust="spacingAndGlyphs">11.12.2025</text><path d="M1869.5 1044.5 h19 v14 h-8 l-4 5 v-5 h-7z" fill="none" stroke="#fff" stroke-width="1.4"/><path d="M1873 1049 h12 M1873 1052 h12 M1873 1055 h8" stroke="#fff" stroke-width="1.2"/><rect x="1914" y="1030" width="1" height="50" fill="#5a5a5a"/></svg></body></html>
